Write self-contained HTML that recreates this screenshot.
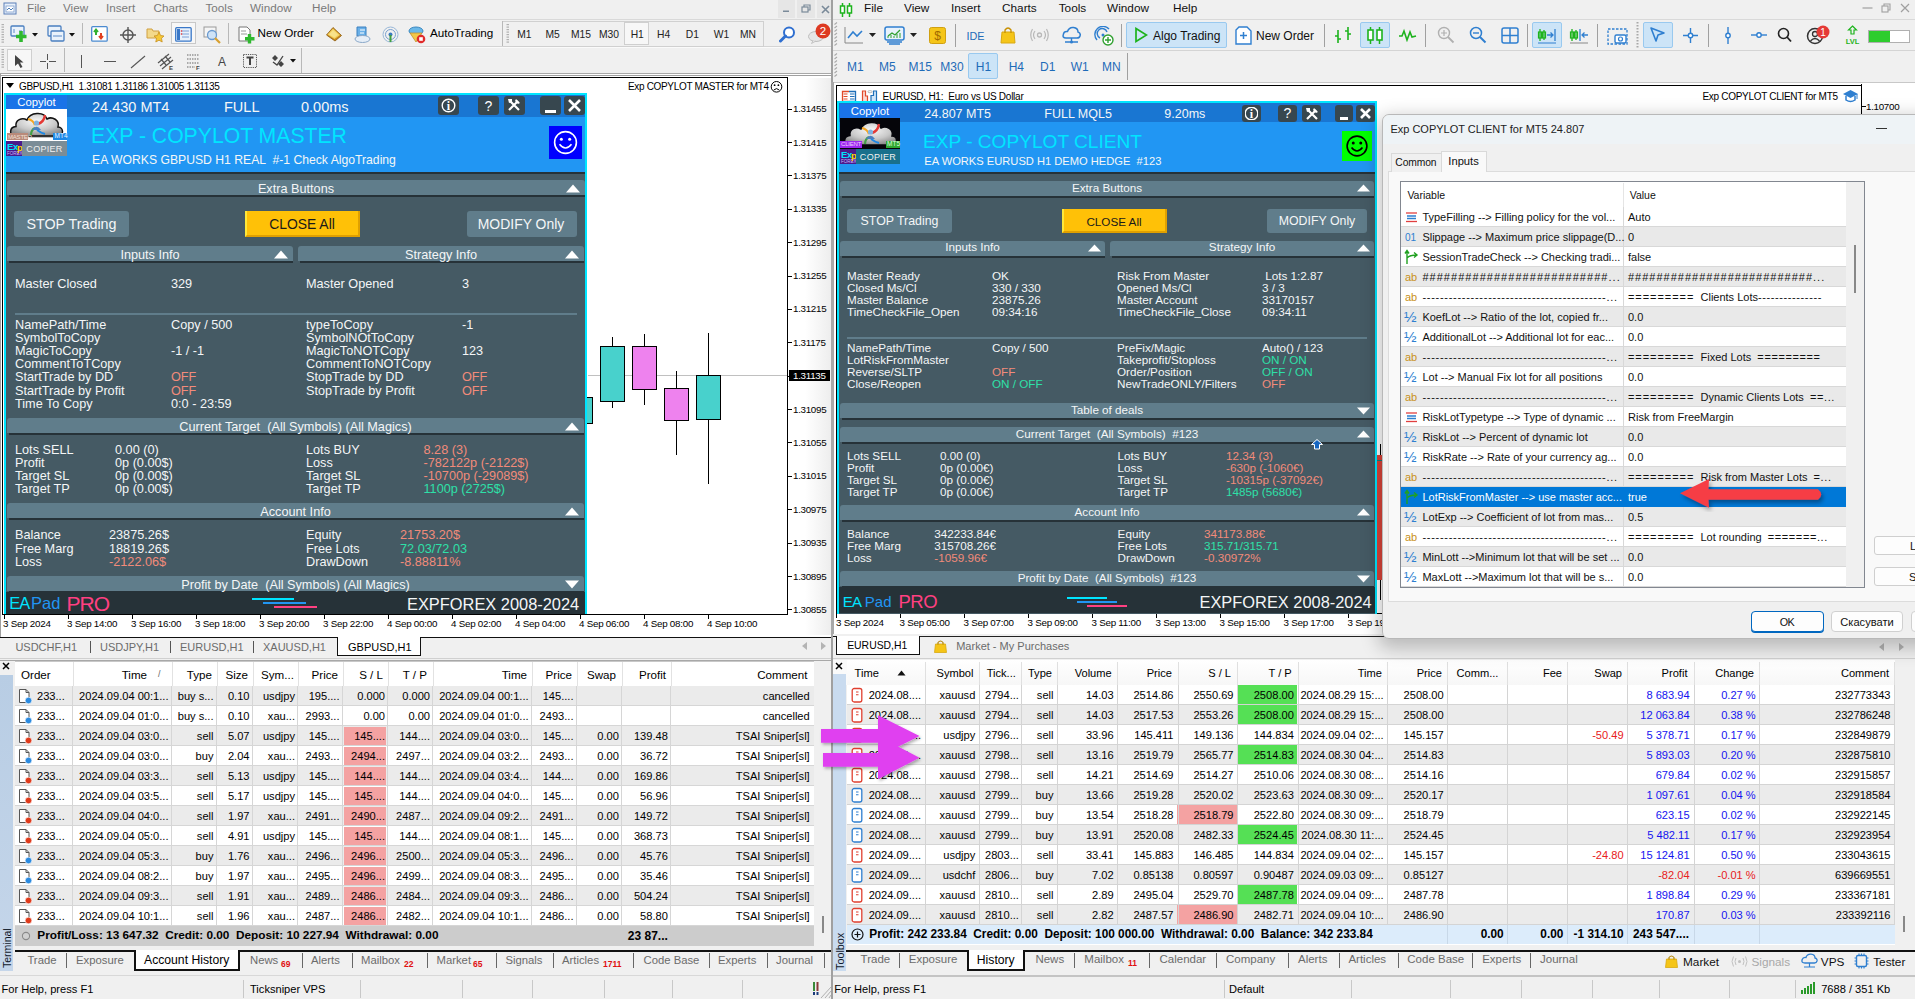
<!DOCTYPE html><html><head><meta charset="utf-8"><style>
html,body{margin:0;padding:0;overflow:hidden}
body{width:1915px;height:999px;position:relative;overflow:hidden;background:#f0f0f0;font-family:"Liberation Sans",sans-serif}
.a{position:absolute;margin:0;padding:0;box-sizing:border-box}
.t{position:absolute;white-space:pre;margin:0;padding:0}
</style></head><body>
<div class="a" style="left:0px;top:0px;width:831px;height:19px;background:#f0f0f0"></div>
<div class="a" style="left:0px;top:19px;width:831px;height:1px;background:#d9d9d9"></div>
<svg class="a" style="left:3px;top:2px;" width="15" height="14" viewBox="0 0 15 14"><rect x="1" y="1" width="12" height="11" fill="#e8f0fa" stroke="#5a7fb8" stroke-width="1"/><rect x="3" y="4" width="8" height="6" fill="#fff" stroke="#7a9ccc" stroke-width="0.8"/><path d="M4 8 L6 6 L8 8 L10 6" stroke="#3a6fb0" fill="none" stroke-width="0.9"/></svg>
<div class="t" style="left:27px;top:0.3px;font-size:11.7px;line-height:15px;color:#7a7a7a;">File</div>
<div class="t" style="left:63px;top:0.3px;font-size:11.7px;line-height:15px;color:#7a7a7a;">View</div>
<div class="t" style="left:106px;top:0.3px;font-size:11.7px;line-height:15px;color:#7a7a7a;">Insert</div>
<div class="t" style="left:153.5px;top:0.3px;font-size:11.7px;line-height:15px;color:#7a7a7a;">Charts</div>
<div class="t" style="left:205.5px;top:0.3px;font-size:11.7px;line-height:15px;color:#7a7a7a;">Tools</div>
<div class="t" style="left:250px;top:0.3px;font-size:11.7px;line-height:15px;color:#7a7a7a;">Window</div>
<div class="t" style="left:312px;top:0.3px;font-size:11.7px;line-height:15px;color:#7a7a7a;">Help</div>
<div class="a" style="left:778px;top:0px;width:17px;height:18px;background:#e6e6e6"></div>
<div class="a" style="left:797px;top:0px;width:18px;height:18px;background:#e6e6e6"></div>
<div class="a" style="left:817px;top:0px;width:14px;height:18px;background:#e6e6e6"></div>
<svg class="a" style="left:782px;top:10px;" width="10" height="3" viewBox="0 0 10 3"><rect x="1" y="0.5" width="6" height="1.5" fill="#7a8a99"/></svg>
<svg class="a" style="left:801px;top:4px;" width="10" height="9" viewBox="0 0 10 9"><rect x="1" y="3" width="6" height="5" fill="none" stroke="#7a8a99" stroke-width="1.2"/><path d="M3 3 V1 H9 V6 H7" fill="none" stroke="#7a8a99" stroke-width="1.2"/></svg>
<svg class="a" style="left:821px;top:5px;" width="9" height="9" viewBox="0 0 9 9"><path d="M1 1 L8 8 M8 1 L1 8" stroke="#7a8a99" stroke-width="1.6"/></svg>
<div class="a" style="left:0px;top:20px;width:831px;height:54px;background:#f0f0f0"></div>
<div class="a" style="left:0px;top:46px;width:831px;height:1px;background:#d4d4d4"></div>
<div class="a" style="left:0px;top:47px;width:831px;height:1px;background:#fafafa"></div>
<div class="a" style="left:0px;top:73px;width:831px;height:2px;background:#a8a8a8"></div>
<svg class="a" style="left:1px;top:24px;" width="4" height="20" viewBox="0 0 4 20"><rect x="0.5" y="0.0" width="2.5" height="1.2" fill="#b0b0b0"/><rect x="0.5" y="2.5" width="2.5" height="1.2" fill="#b0b0b0"/><rect x="0.5" y="5.0" width="2.5" height="1.2" fill="#b0b0b0"/><rect x="0.5" y="7.5" width="2.5" height="1.2" fill="#b0b0b0"/><rect x="0.5" y="10.0" width="2.5" height="1.2" fill="#b0b0b0"/><rect x="0.5" y="12.5" width="2.5" height="1.2" fill="#b0b0b0"/><rect x="0.5" y="15.0" width="2.5" height="1.2" fill="#b0b0b0"/><rect x="0.5" y="17.5" width="2.5" height="1.2" fill="#b0b0b0"/></svg>
<svg class="a" style="left:1px;top:49px;" width="4" height="20" viewBox="0 0 4 20"><rect x="0.5" y="0.0" width="2.5" height="1.2" fill="#b0b0b0"/><rect x="0.5" y="2.5" width="2.5" height="1.2" fill="#b0b0b0"/><rect x="0.5" y="5.0" width="2.5" height="1.2" fill="#b0b0b0"/><rect x="0.5" y="7.5" width="2.5" height="1.2" fill="#b0b0b0"/><rect x="0.5" y="10.0" width="2.5" height="1.2" fill="#b0b0b0"/><rect x="0.5" y="12.5" width="2.5" height="1.2" fill="#b0b0b0"/><rect x="0.5" y="15.0" width="2.5" height="1.2" fill="#b0b0b0"/><rect x="0.5" y="17.5" width="2.5" height="1.2" fill="#b0b0b0"/></svg>
<svg class="a" style="left:10px;top:25px;" width="19" height="18" viewBox="0 0 19 18"><rect x="1" y="1" width="13" height="10" fill="#eaf2fb" stroke="#4a7fc0" stroke-width="1.3" rx="1"/><path d="M4 4 V8 M9 6 H12" stroke="#5a8ac8" stroke-width="1"/><path d="M11 6 V17 M6 11.5 H16.5" stroke="#2fb82f" stroke-width="3.6"/></svg>
<svg class="a" style="left:32px;top:33px;" width="6" height="4" viewBox="0 0 6 4"><path d="M0 0 H6 L3 3.5 Z" fill="#111"/></svg>
<svg class="a" style="left:47px;top:25px;" width="18" height="18" viewBox="0 0 18 18"><rect x="1" y="1" width="13" height="10" fill="#eaf2fb" stroke="#4a7fc0" stroke-width="1.3" rx="1"/><rect x="4" y="6" width="13" height="10" fill="#eaf2fb" stroke="#4a7fc0" stroke-width="1.3" rx="1"/><path d="M6 11 H15" stroke="#5a8ac8" stroke-width="1"/></svg>
<svg class="a" style="left:69px;top:33px;" width="6" height="4" viewBox="0 0 6 4"><path d="M0 0 H6 L3 3.5 Z" fill="#111"/></svg>
<div class="a" style="left:82px;top:23px;width:1px;height:21px;background:#b8b8b8"></div>
<svg class="a" style="left:91px;top:26px;" width="17" height="16" viewBox="0 0 17 16"><rect x="0.7" y="0.7" width="15.5" height="14.5" fill="#fff" stroke="#4a8ad0" stroke-width="1.3" rx="1"/><path d="M5 9 V4 M3 6 L5 3.5 L7 6" stroke="#30b030" stroke-width="2" fill="none"/><path d="M10 7 V12 M8 10 L10 12.5 L12 10" stroke="#e04020" stroke-width="2" fill="none"/></svg>
<svg class="a" style="left:120px;top:27px;" width="16" height="16" viewBox="0 0 16 16"><circle cx="8" cy="8" r="5" fill="none" stroke="#555" stroke-width="1.4"/><path d="M8 0 V16 M0 8 H16" stroke="#555" stroke-width="1.4"/></svg>
<svg class="a" style="left:146px;top:26px;" width="19" height="17" viewBox="0 0 19 17"><path d="M1 3 H6 L7 5 H13 V12 H1 Z" fill="#f3d98a" stroke="#d0a040" stroke-width="1"/><path d="M13 6 L14.6 9.5 L18 10 L15.5 12.3 L16.2 16 L13 14.2 L9.8 16 L10.5 12.3 L8 10 L11.4 9.5 Z" fill="#f5c838" stroke="#c89020" stroke-width="0.8"/></svg>
<div class="a" style="left:171px;top:22px;width:25px;height:22px;background:#f7f7f7;border:1px solid #c8c8c8"></div>
<svg class="a" style="left:175px;top:27px;" width="17" height="15" viewBox="0 0 17 15"><rect x="0.7" y="0.7" width="15.5" height="13.5" fill="#e8f1fb" stroke="#3a78c8" stroke-width="1.3" rx="1"/><rect x="2" y="2" width="3" height="11" fill="#3a78c8"/><path d="M7 4 H14 M7 7 H14 M7 10 H14" stroke="#7aa0d8" stroke-width="1"/><circle cx="6.5" cy="4" r="0.8" fill="#e02020"/><circle cx="6.5" cy="7" r="0.8" fill="#e02020"/></svg>
<svg class="a" style="left:203px;top:26px;" width="19" height="18" viewBox="0 0 19 18"><rect x="1" y="1" width="12" height="10" fill="#f5f5f5" stroke="#999" stroke-width="1"/><circle cx="9" cy="9" r="4.5" fill="#cfe3f7" stroke="#6a9ad0" stroke-width="1.3"/><path d="M12 12 L17 17" stroke="#d8a030" stroke-width="2.2"/></svg>
<div class="a" style="left:228px;top:23px;width:1px;height:21px;background:#b8b8b8"></div>
<svg class="a" style="left:238px;top:26px;" width="17" height="18" viewBox="0 0 17 18"><path d="M1 1 H9 L12 4 V15 H1 Z" fill="#fff" stroke="#777" stroke-width="1"/><path d="M3 5 H8 M3 8 H9" stroke="#999" stroke-width="1"/><path d="M11.5 8 V17.5 M7 12.7 H16.5" stroke="#2fb82f" stroke-width="3.4"/></svg>
<div class="t" style="left:257.5px;top:25.1px;font-size:11.7px;line-height:15px;color:#000;">New Order</div>
<svg class="a" style="left:325px;top:26px;" width="18" height="16" viewBox="0 0 18 16"><path d="M1.5 9 L8 1.5 L16.5 9.5 L10 15 Z" fill="#c98a1a" stroke="#8a5a10" stroke-width="0.8"/><path d="M2.5 8.5 L8 2.5 L15 9 L9.5 13 Z" fill="#f3d060"/><path d="M4 8.5 L8 4 L13 8.8 L9.5 11.5 Z" fill="#f8e28a"/></svg>
<svg class="a" style="left:354px;top:26px;" width="17" height="17" viewBox="0 0 17 17"><path d="M3 1 H12 V10 H3 Z" fill="#6ab0e8" stroke="#3a80c0" stroke-width="1"/><path d="M6 4 H11 M6 7 H10" stroke="#fff" stroke-width="1"/><ellipse cx="8.5" cy="13" rx="7.5" ry="3.5" fill="#e6eef7" stroke="#8aa8c8" stroke-width="1"/></svg>
<svg class="a" style="left:382px;top:26px;" width="17" height="17" viewBox="0 0 17 17"><circle cx="8.5" cy="8.5" r="7.5" fill="none" stroke="#9ab8d8" stroke-width="1"/><circle cx="8.5" cy="8.5" r="5" fill="none" stroke="#7aa0d0" stroke-width="1"/><circle cx="8.5" cy="8.5" r="2" fill="#3a7ac0"/><path d="M8.5 9 V16" stroke="#40a040" stroke-width="2"/></svg>
<svg class="a" style="left:408px;top:26px;" width="18" height="18" viewBox="0 0 18 18"><ellipse cx="8" cy="5" rx="7" ry="4" fill="#6ab8e8" stroke="#3a88c0" stroke-width="1"/><path d="M2 7 L8 16 L14 7 Z" fill="#f3c848" stroke="#c09030" stroke-width="0.8"/><circle cx="13" cy="13" r="4.3" fill="#e02a2a"/><rect x="11.2" y="11.2" width="3.6" height="3.6" fill="#fff"/></svg>
<div class="t" style="left:430px;top:25.1px;font-size:11.7px;line-height:15px;color:#000;">AutoTrading</div>
<div class="a" style="left:502px;top:21px;width:1px;height:25px;background:#b8b8b8"></div>
<div class="a" style="left:503px;top:21px;width:261px;height:26px;border:1px solid #d0d0d0;border-left:none;background:#f0f0f0"></div>
<svg class="a" style="left:506px;top:24px;" width="4" height="20" viewBox="0 0 4 20"><rect x="0.5" y="0.0" width="2.5" height="1.2" fill="#b0b0b0"/><rect x="0.5" y="2.5" width="2.5" height="1.2" fill="#b0b0b0"/><rect x="0.5" y="5.0" width="2.5" height="1.2" fill="#b0b0b0"/><rect x="0.5" y="7.5" width="2.5" height="1.2" fill="#b0b0b0"/><rect x="0.5" y="10.0" width="2.5" height="1.2" fill="#b0b0b0"/><rect x="0.5" y="12.5" width="2.5" height="1.2" fill="#b0b0b0"/><rect x="0.5" y="15.0" width="2.5" height="1.2" fill="#b0b0b0"/><rect x="0.5" y="17.5" width="2.5" height="1.2" fill="#b0b0b0"/></svg>
<div class="a" style="left:624px;top:22px;width:25px;height:23px;background:#f7f7f7;border:1px solid #cfcfcf"></div>
<div class="t" style="left:517.3px;top:28.0px;font-size:10.3px;line-height:13px;color:#222;">M1</div>
<div class="t" style="left:545.4px;top:28.0px;font-size:10.3px;line-height:13px;color:#222;">M5</div>
<div class="t" style="left:571px;top:28.0px;font-size:10.3px;line-height:13px;color:#222;">M15</div>
<div class="t" style="left:599px;top:28.0px;font-size:10.3px;line-height:13px;color:#222;">M30</div>
<div class="t" style="left:630.7px;top:28.0px;font-size:10.3px;line-height:13px;color:#222;">H1</div>
<div class="t" style="left:657px;top:28.0px;font-size:10.3px;line-height:13px;color:#222;">H4</div>
<div class="t" style="left:685.8px;top:28.0px;font-size:10.3px;line-height:13px;color:#222;">D1</div>
<div class="t" style="left:713.8px;top:28.0px;font-size:10.3px;line-height:13px;color:#222;">W1</div>
<div class="t" style="left:740px;top:28.0px;font-size:10.3px;line-height:13px;color:#222;">MN</div>
<svg class="a" style="left:779px;top:26px;" width="17" height="17" viewBox="0 0 17 17"><circle cx="10" cy="6.5" r="5" fill="#fff" stroke="#2f6fd0" stroke-width="2"/><path d="M6.5 10 L1.5 15" stroke="#2f6fd0" stroke-width="3" stroke-linecap="round"/></svg>
<svg class="a" style="left:805px;top:22px;" width="26" height="22" viewBox="0 0 26 22"><ellipse cx="11" cy="14.5" rx="7.5" ry="5" fill="#e6e6e6" stroke="#bdbdbd"/><path d="M8 18.5 L6.5 21.5 L11 19" fill="#e6e6e6" stroke="#bdbdbd" stroke-width="0.8"/><circle cx="18" cy="9" r="7.5" fill="#dd3a22"/><text x="18" y="13.2" font-size="11.5" fill="#fff" text-anchor="middle" font-family="Liberation Sans">2</text></svg>
<div class="a" style="left:7px;top:49px;width:25px;height:22px;background:#f7f7f7;border:1px solid #cfcfcf"></div>
<svg class="a" style="left:14px;top:54px;" width="10" height="15" viewBox="0 0 10 15"><path d="M1 1 L1 12 L4 9.5 L6.5 14 L8.5 13 L6 8.5 L9.5 8.5 Z" fill="#444"/></svg>
<svg class="a" style="left:40px;top:54px;" width="16" height="15" viewBox="0 0 16 15"><path d="M7.5 0 V6 M7.5 9 V15 M0 7.5 H6 M9 7.5 H16" stroke="#555" stroke-width="1"/></svg>
<div class="a" style="left:64px;top:48px;width:1px;height:24px;background:#b8b8b8"></div>
<div class="a" style="left:81px;top:55px;width:1px;height:13px;background:#555"></div>
<div class="a" style="left:104px;top:61px;width:12px;height:1px;background:#555"></div>
<svg class="a" style="left:130px;top:55px;" width="16" height="14" viewBox="0 0 16 14"><path d="M1 13 L15 1" stroke="#555" stroke-width="1.1"/></svg>
<svg class="a" style="left:157px;top:53px;" width="18" height="17" viewBox="0 0 18 17"><path d="M1 10 L12 1 M3 13 L14 4 M5 16 L16 7 M4 6 L9 12 M8 3 L13 9" stroke="#555" stroke-width="1.2"/><text x="12" y="17" font-size="6" font-weight="bold" fill="#444" font-family="Liberation Sans">E</text></svg>
<svg class="a" style="left:186px;top:53px;" width="16" height="17" viewBox="0 0 16 17"><path d="M1 2 H13 M1 6 H13 M1 10 H13 M1 14 H9" stroke="#666" stroke-width="1" stroke-dasharray="1.5 1"/><text x="10" y="17" font-size="6" font-weight="bold" fill="#444" font-family="Liberation Sans">F</text></svg>
<div class="t" style="left:218px;top:53.5px;font-size:12px;line-height:16px;color:#444;">A</div>
<svg class="a" style="left:243px;top:54px;" width="14" height="14" viewBox="0 0 14 14"><rect x="0.5" y="0.5" width="13" height="13" fill="none" stroke="#555" stroke-width="1" stroke-dasharray="1.2 1"/><path d="M3.5 3.5 H10.5 M7 3.5 V11" stroke="#444" stroke-width="2"/></svg>
<svg class="a" style="left:270px;top:54px;" width="16" height="14" viewBox="0 0 16 14"><path d="M2 4 L5 1 L8 4 L5 7 Z M8 10 L11 7 L14 10 L11 13 Z" fill="#444"/><path d="M3 8 L7 11 L13 2" stroke="#444" stroke-width="1.3" fill="none"/></svg>
<svg class="a" style="left:290px;top:59px;" width="6" height="4" viewBox="0 0 6 4"><path d="M0 0 H6 L3 3.5 Z" fill="#111"/></svg>
<div class="a" style="left:301px;top:48px;width:1px;height:25px;background:#b8b8b8"></div>
<div class="a" style="left:0px;top:74px;width:831px;height:563px;background:#fff"></div>
<div class="a" style="left:0px;top:74px;width:1px;height:563px;background:#a0a0a0"></div>
<div class="a" style="left:1px;top:75px;width:830px;height:1px;background:#a0a0a0"></div>
<div class="a" style="left:2px;top:77px;width:786px;height:1px;background:#000"></div>
<div class="a" style="left:2px;top:77px;width:1px;height:538px;background:#000"></div>
<div class="a" style="left:787px;top:77px;width:1px;height:538px;background:#000"></div>
<div class="a" style="left:2px;top:614px;width:786px;height:1px;background:#000"></div>
<div class="a" style="left:805px;top:78px;width:26px;height:557px;background:linear-gradient(to right,rgba(240,240,240,0),rgba(230,230,230,0.7))"></div>
<div class="a" style="left:831px;top:0px;width:1.5px;height:999px;background:#a0a0a0"></div>
<svg class="a" style="left:6px;top:83px;" width="8" height="6" viewBox="0 0 8 6"><path d="M0 0 H8 L4 5 Z" fill="#000"/></svg>
<div class="t" style="left:19px;top:79.5px;font-size:10px;line-height:13px;color:#000;letter-spacing:-0.34px">GBPUSD,H1  1.31081 1.31186 1.31005 1.31135</div>
<div class="t" style="left:628px;top:80.0px;font-size:10px;line-height:13px;color:#000;letter-spacing:-0.33px">Exp COPYLOT MASTER for MT4</div>
<svg class="a" style="left:770px;top:80px;" width="13" height="13" viewBox="0 0 13 13"><circle cx="6.5" cy="6.8" r="5.3" fill="none" stroke="#000" stroke-width="1"/><circle cx="4.6" cy="5.2" r="0.9" fill="#000"/><circle cx="8.4" cy="5.2" r="0.9" fill="#000"/><path d="M3.8 10 Q6.5 7.2 9.2 10" fill="none" stroke="#000" stroke-width="1"/></svg>
<div class="a" style="left:588px;top:375px;width:199px;height:1px;background:#c0c0c0"></div>
<div class="a" style="left:612px;top:337px;width:1px;height:71px;background:#000"></div>
<div class="a" style="left:600px;top:346px;width:25px;height:56px;background:#48d1cc;border:1px solid #000"></div>
<div class="a" style="left:644px;top:334px;width:1px;height:71px;background:#000"></div>
<div class="a" style="left:632px;top:346px;width:25px;height:44px;background:#ee82ee;border:1px solid #000"></div>
<div class="a" style="left:676px;top:371px;width:1px;height:84px;background:#000"></div>
<div class="a" style="left:664px;top:388px;width:25px;height:33px;background:#ee82ee;border:1px solid #000"></div>
<div class="a" style="left:708px;top:333px;width:1px;height:151px;background:#000"></div>
<div class="a" style="left:696px;top:375px;width:25px;height:45px;background:#48d1cc;border:1px solid #000"></div>
<div class="a" style="left:586px;top:397px;width:7px;height:27px;background:#48d1cc;border:1px solid #000;border-left:none"></div>
<div class="a" style="left:788px;top:109px;width:4px;height:1px;background:#000"></div>
<div class="t" style="left:793px;top:102.1px;font-size:9.8px;line-height:13px;color:#000;letter-spacing:-0.3px">1.31455</div>
<div class="a" style="left:788px;top:142px;width:4px;height:1px;background:#000"></div>
<div class="t" style="left:793px;top:135.5px;font-size:9.8px;line-height:13px;color:#000;letter-spacing:-0.3px">1.31415</div>
<div class="a" style="left:788px;top:175px;width:4px;height:1px;background:#000"></div>
<div class="t" style="left:793px;top:168.9px;font-size:9.8px;line-height:13px;color:#000;letter-spacing:-0.3px">1.31375</div>
<div class="a" style="left:788px;top:209px;width:4px;height:1px;background:#000"></div>
<div class="t" style="left:793px;top:202.3px;font-size:9.8px;line-height:13px;color:#000;letter-spacing:-0.3px">1.31335</div>
<div class="a" style="left:788px;top:242px;width:4px;height:1px;background:#000"></div>
<div class="t" style="left:793px;top:235.7px;font-size:9.8px;line-height:13px;color:#000;letter-spacing:-0.3px">1.31295</div>
<div class="a" style="left:788px;top:276px;width:4px;height:1px;background:#000"></div>
<div class="t" style="left:793px;top:269.0px;font-size:9.8px;line-height:13px;color:#000;letter-spacing:-0.3px">1.31255</div>
<div class="a" style="left:788px;top:309px;width:4px;height:1px;background:#000"></div>
<div class="t" style="left:793px;top:302.4px;font-size:9.8px;line-height:13px;color:#000;letter-spacing:-0.3px">1.31215</div>
<div class="a" style="left:788px;top:342px;width:4px;height:1px;background:#000"></div>
<div class="t" style="left:793px;top:335.8px;font-size:9.8px;line-height:13px;color:#000;letter-spacing:-0.3px">1.31175</div>
<div class="a" style="left:788px;top:376px;width:4px;height:1px;background:#000"></div>
<div class="a" style="left:789px;top:370px;width:41px;height:11px;background:#000"></div>
<div class="t" style="left:793px;top:369.0px;font-size:9.8px;line-height:13px;color:#fff;letter-spacing:-0.3px">1.31135</div>
<div class="a" style="left:788px;top:409px;width:4px;height:1px;background:#000"></div>
<div class="t" style="left:793px;top:402.6px;font-size:9.8px;line-height:13px;color:#000;letter-spacing:-0.3px">1.31095</div>
<div class="a" style="left:788px;top:442px;width:4px;height:1px;background:#000"></div>
<div class="t" style="left:793px;top:436.0px;font-size:9.8px;line-height:13px;color:#000;letter-spacing:-0.3px">1.31055</div>
<div class="a" style="left:788px;top:476px;width:4px;height:1px;background:#000"></div>
<div class="t" style="left:793px;top:469.4px;font-size:9.8px;line-height:13px;color:#000;letter-spacing:-0.3px">1.31015</div>
<div class="a" style="left:788px;top:509px;width:4px;height:1px;background:#000"></div>
<div class="t" style="left:793px;top:502.8px;font-size:9.8px;line-height:13px;color:#000;letter-spacing:-0.3px">1.30975</div>
<div class="a" style="left:788px;top:543px;width:4px;height:1px;background:#000"></div>
<div class="t" style="left:793px;top:536.2px;font-size:9.8px;line-height:13px;color:#000;letter-spacing:-0.3px">1.30935</div>
<div class="a" style="left:788px;top:576px;width:4px;height:1px;background:#000"></div>
<div class="t" style="left:793px;top:569.6px;font-size:9.8px;line-height:13px;color:#000;letter-spacing:-0.3px">1.30895</div>
<div class="a" style="left:788px;top:609px;width:4px;height:1px;background:#000"></div>
<div class="t" style="left:793px;top:603.0px;font-size:9.8px;line-height:13px;color:#000;letter-spacing:-0.3px">1.30855</div>
<div class="t" style="left:3px;top:617.0px;font-size:9.8px;line-height:13px;color:#000;letter-spacing:-0.25px">3 Sep 2024</div>
<div class="a" style="left:68px;top:614px;width:1px;height:5px;background:#000"></div>
<div class="t" style="left:67px;top:617.0px;font-size:9.8px;line-height:13px;color:#000;letter-spacing:-0.25px">3 Sep 14:00</div>
<div class="a" style="left:132px;top:614px;width:1px;height:5px;background:#000"></div>
<div class="t" style="left:131px;top:617.0px;font-size:9.8px;line-height:13px;color:#000;letter-spacing:-0.25px">3 Sep 16:00</div>
<div class="a" style="left:196px;top:614px;width:1px;height:5px;background:#000"></div>
<div class="t" style="left:195px;top:617.0px;font-size:9.8px;line-height:13px;color:#000;letter-spacing:-0.25px">3 Sep 18:00</div>
<div class="a" style="left:260px;top:614px;width:1px;height:5px;background:#000"></div>
<div class="t" style="left:259px;top:617.0px;font-size:9.8px;line-height:13px;color:#000;letter-spacing:-0.25px">3 Sep 20:00</div>
<div class="a" style="left:324px;top:614px;width:1px;height:5px;background:#000"></div>
<div class="t" style="left:323px;top:617.0px;font-size:9.8px;line-height:13px;color:#000;letter-spacing:-0.25px">3 Sep 22:00</div>
<div class="a" style="left:388px;top:614px;width:1px;height:5px;background:#000"></div>
<div class="t" style="left:387px;top:617.0px;font-size:9.8px;line-height:13px;color:#000;letter-spacing:-0.25px">4 Sep 00:00</div>
<div class="a" style="left:452px;top:614px;width:1px;height:5px;background:#000"></div>
<div class="t" style="left:451px;top:617.0px;font-size:9.8px;line-height:13px;color:#000;letter-spacing:-0.25px">4 Sep 02:00</div>
<div class="a" style="left:516px;top:614px;width:1px;height:5px;background:#000"></div>
<div class="t" style="left:515px;top:617.0px;font-size:9.8px;line-height:13px;color:#000;letter-spacing:-0.25px">4 Sep 04:00</div>
<div class="a" style="left:580px;top:614px;width:1px;height:5px;background:#000"></div>
<div class="t" style="left:579px;top:617.0px;font-size:9.8px;line-height:13px;color:#000;letter-spacing:-0.25px">4 Sep 06:00</div>
<div class="a" style="left:644px;top:614px;width:1px;height:5px;background:#000"></div>
<div class="t" style="left:643px;top:617.0px;font-size:9.8px;line-height:13px;color:#000;letter-spacing:-0.25px">4 Sep 08:00</div>
<div class="a" style="left:708px;top:614px;width:1px;height:5px;background:#000"></div>
<div class="t" style="left:707px;top:617.0px;font-size:9.8px;line-height:13px;color:#000;letter-spacing:-0.25px">4 Sep 10:00</div>
<div class="a" style="left:4px;top:614px;width:1px;height:5px;background:#000"></div>
<div class="a" style="left:0px;top:637px;width:831px;height:21px;background:#f0f0f0"></div>
<div class="a" style="left:0px;top:637px;width:337px;height:1px;background:#111"></div>
<div class="a" style="left:421px;top:637px;width:410px;height:1px;background:#111"></div>
<div class="a" style="left:337px;top:637px;width:84px;height:19px;background:#fff;border:1px solid #111;border-top:none"></div>
<div class="t" style="left:15.4px;top:639.5px;font-size:11px;line-height:14px;color:#6b6b6b;">USDCHF,H1</div>
<div class="t" style="left:100px;top:639.5px;font-size:11px;line-height:14px;color:#6b6b6b;">USDJPY,H1</div>
<div class="t" style="left:180px;top:639.5px;font-size:11px;line-height:14px;color:#6b6b6b;">EURUSD,H1</div>
<div class="t" style="left:263px;top:639.5px;font-size:11px;line-height:14px;color:#6b6b6b;">XAUUSD,H1</div>
<div class="a" style="left:90px;top:641px;width:1px;height:12px;background:#555"></div>
<div class="a" style="left:169.5px;top:641px;width:1px;height:12px;background:#555"></div>
<div class="a" style="left:253px;top:641px;width:1px;height:12px;background:#555"></div>
<div class="t" style="left:348px;top:639.5px;font-size:11px;line-height:14px;color:#000;">GBPUSD,H1</div>
<svg class="a" style="left:802px;top:642px;" width="5" height="8" viewBox="0 0 5 8"><path d="M5 0 V8 L0 4 Z" fill="#b4b4b4"/></svg>
<svg class="a" style="left:821px;top:642px;" width="5" height="8" viewBox="0 0 5 8"><path d="M0 0 V8 L5 4 Z" fill="#b4b4b4"/></svg>
<div class="a" style="left:0px;top:658px;width:831px;height:1px;background:#d0d0d0"></div>
<div class="a" style="left:4px;top:93px;width:583px;height:521px;background:#00e5ff"></div>
<div class="a" style="left:6px;top:95px;width:579px;height:519px;background:#455a64"></div>
<div class="a" style="left:6px;top:95px;width:579px;height:22px;background:#1976d2"></div>
<div class="a" style="left:6px;top:117px;width:579px;height:55px;background:#2196f3"></div>
<div class="a" style="left:6px;top:172px;width:579px;height:2px;background:#263238"></div>
<div class="a" style="left:6px;top:95px;width:61px;height:14px;background:#1a73e8"></div>
<div class="t" style="left:-363.5px;width:800px;top:95.0px;font-size:11.3px;line-height:15px;color:#fff;text-align:center;">Copylot</div>
<div class="a" style="left:6px;top:109px;width:61px;height:32px;background:#fff"></div>
<svg class="a" style="left:6px;top:109px;" width="61" height="32" viewBox="0 0 61 32"><defs><radialGradient id="cgm" cx="50%" cy="35%" r="65%"><stop offset="0" stop-color="#fafafa"/><stop offset="0.6" stop-color="#c8c8c8"/><stop offset="1" stop-color="#8c8c8c"/></radialGradient></defs><path d="M9 27 C3 27 3 18 10 17.5 C9 11 16 8 21 11 C24 3 38 2 41 10 C46 7 54 11 52 18 C58 18 58 27 52 27 Z" fill="url(#cgm)" stroke="#111" stroke-width="1.5"/><path d="M22 10 Q27 11 29 16" fill="none" stroke="#f5a623" stroke-width="2.2"/><path d="M39 6 Q38 13 32 15" fill="none" stroke="#e53935" stroke-width="2.4"/><path d="M25 26 Q25 21 29 19" fill="none" stroke="#43a047" stroke-width="2.2"/><path d="M31 21 Q35 24 39 25" fill="none" stroke="#1e88e5" stroke-width="2"/><circle cx="30.5" cy="14" r="2.6" fill="#7fb2e0"/><path d="M26 21 Q30.5 14.5 35 21 Z" fill="#4a7fc0"/><path d="M23 27.5 H47" stroke="#333" stroke-width="1.6"/></svg>
<div class="a" style="left:7px;top:133px;width:21px;height:7px;background:#b98a7a"></div>
<div class="t" style="left:8px;top:132.7px;font-size:6px;line-height:8px;color:#f0e0d8;letter-spacing:-0.2px">MASTER</div>
<div class="a" style="left:53px;top:132.5px;width:14px;height:7.5px;background:#1e88e5"></div>
<div class="t" style="left:54.5px;top:132.3px;font-size:6.5px;line-height:8px;color:#e8f4ff;">MT4</div>
<div class="a" style="left:6px;top:141px;width:16px;height:15px;background:#4b1a8a"></div>
<div class="t" style="left:7px;top:141.0px;font-size:9.5px;line-height:12px;color:#00e5ff;font-weight:bold;letter-spacing:-0.3px">Ex</div>
<div class="t" style="left:17px;top:141.5px;font-size:9.5px;line-height:12px;color:#ffd600;font-weight:bold">p</div>
<div class="t" style="left:7px;top:150.5px;font-size:4.5px;line-height:6px;color:#c8b8ff;">FOREX</div>
<div class="a" style="left:22px;top:141px;width:45px;height:15px;background:#7b8d97"></div>
<div class="t" style="left:-355.5px;width:800px;top:142.8px;font-size:9px;line-height:12px;color:#f0f0f0;text-align:center;letter-spacing:0.3px">COPIER</div>
<div class="t" style="left:92px;top:97.5px;font-size:14.5px;line-height:19px;color:#f4f6f7;">24.430 MT4</div>
<div class="t" style="left:224px;top:97.5px;font-size:14.5px;line-height:19px;color:#f4f6f7;">FULL</div>
<div class="t" style="left:301px;top:97.5px;font-size:14.5px;line-height:19px;color:#f4f6f7;">0.00ms</div>
<div class="a" style="left:438px;top:96px;width:21px;height:19px;background:#37474f;border-radius:3px"></div>
<svg class="a" style="left:441px;top:98px;" width="15" height="15" viewBox="0 0 15 15"><circle cx="7.5" cy="7.5" r="6.3" fill="none" stroke="#fff" stroke-width="1.4"/><text x="7.5" y="12.0" font-size="12" font-weight="bold" fill="#fff" text-anchor="middle" font-family="Liberation Serif">i</text></svg>
<div class="a" style="left:478px;top:96px;width:21px;height:19px;background:#37474f;border-radius:3px"></div>
<div class="t" style="left:88.5px;width:800px;top:96.5px;font-size:14px;line-height:18px;color:#fff;text-align:center;">?</div>
<div class="a" style="left:504px;top:96px;width:21px;height:19px;background:#37474f;border-radius:3px"></div>
<svg class="a" style="left:507px;top:98px;" width="14" height="14" viewBox="0 0 14 14"><path d="M2 12 L11 3 M3 3 L12 12" stroke="#fff" stroke-width="2.2"/><path d="M9 1 L13 5 L11 6 L8 3 Z M1 1 L5 1 L5 4 L2 5 Z" fill="#fff"/></svg>
<div class="a" style="left:540px;top:96px;width:21px;height:19px;background:#37474f;border-radius:3px"></div>
<div class="a" style="left:545px;top:110px;width:11px;height:3px;background:#fff"></div>
<div class="a" style="left:564px;top:96px;width:21px;height:19px;background:#37474f;border-radius:3px"></div>
<svg class="a" style="left:567px;top:98px;" width="15" height="15" viewBox="0 0 15 15"><path d="M2 2 L13 13 M13 2 L2 13" stroke="#fff" stroke-width="2.6"/></svg>
<div class="a" style="left:549px;top:126px;width:33px;height:33px;background:#0000ff"></div>
<svg class="a" style="left:549px;top:126px;" width="33" height="33" viewBox="0 0 33 33"><circle cx="16.5" cy="16.5" r="10.89" fill="none" stroke="#fff" stroke-width="1.6"/><circle cx="12.361799999999999" cy="13.233" r="1.5" fill="#fff"/><circle cx="20.6382" cy="13.233" r="1.5" fill="#fff"/><path d="M10.5105 18.1335 Q16.5 25.756500000000003 22.4895 18.1335" fill="none" stroke="#fff" stroke-width="1.6"/></svg>
<div class="t" style="left:91px;top:121.5px;font-size:21.2px;line-height:28px;color:#00e5ff;">EXP - COPYLOT MASTER</div>
<div class="t" style="left:92px;top:151.5px;font-size:12.2px;line-height:16px;color:#f4f6f7;">EA WORKS GBPUSD H1 REAL  #-1 Check AlgoTrading</div>
<div class="a" style="left:7px;top:180px;width:578px;height:15px;background:#607d8b;border-radius:3px 3px 0 0"></div>
<div class="a" style="left:9px;top:195px;width:576px;height:2px;background:#263238"></div>
<div class="t" style="left:-104.0px;width:800px;top:181.0px;font-size:12.7px;line-height:17px;color:#f4f6f7;text-align:center;">Extra Buttons</div>
<svg class="a" style="left:566px;top:183.5px;" width="14" height="9" viewBox="0 0 14 9"><path d="M0 8.5 L7.0 0.5 L14 8.5 Z" fill="#fff"/></svg>
<div class="a" style="left:14px;top:211px;width:115px;height:26px;background:#607d8b;border-radius:3px"></div>
<div class="t" style="left:-328.5px;width:800px;top:214.5px;font-size:14.3px;line-height:19px;color:#f4f6f7;text-align:center;">STOP Trading</div>
<div class="a" style="left:245px;top:211px;width:115px;height:26px;background:#ffc107;border-bottom:2px solid #e0a000;border-right:2px solid #e0a000;border-left:2px solid #ffe83a"></div>
<div class="t" style="left:-98px;width:800px;top:215.0px;font-size:13.9px;line-height:18px;color:#1a1a1a;text-align:center;">CLOSE All</div>
<div class="a" style="left:467px;top:211px;width:110px;height:26px;background:#607d8b;border-radius:3px"></div>
<div class="t" style="left:121px;width:800px;top:215.0px;font-size:13.95px;line-height:18px;color:#f4f6f7;text-align:center;">MODIFY Only</div>
<div class="a" style="left:7px;top:246px;width:286px;height:15px;background:#607d8b;border-radius:3px 3px 0 0"></div>
<div class="a" style="left:9px;top:261px;width:284px;height:2px;background:#263238"></div>
<div class="t" style="left:-250.0px;width:800px;top:247.0px;font-size:12.7px;line-height:17px;color:#f4f6f7;text-align:center;">Inputs Info</div>
<svg class="a" style="left:274px;top:249.5px;" width="14" height="9" viewBox="0 0 14 9"><path d="M0 8.5 L7.0 0.5 L14 8.5 Z" fill="#fff"/></svg>
<div class="a" style="left:298px;top:246px;width:286px;height:15px;background:#607d8b;border-radius:3px 3px 0 0"></div>
<div class="a" style="left:300px;top:261px;width:284px;height:2px;background:#263238"></div>
<div class="t" style="left:41.0px;width:800px;top:247.0px;font-size:12.7px;line-height:17px;color:#f4f6f7;text-align:center;">Strategy Info</div>
<svg class="a" style="left:565px;top:249.5px;" width="14" height="9" viewBox="0 0 14 9"><path d="M0 8.5 L7.0 0.5 L14 8.5 Z" fill="#fff"/></svg>
<div class="t" style="left:15px;top:276.0px;font-size:12.7px;line-height:17px;color:#f4f6f7;">Master Closed</div>
<div class="t" style="left:171px;top:276.0px;font-size:12.7px;line-height:17px;color:#f4f6f7;">329</div>
<div class="t" style="left:306px;top:276.0px;font-size:12.7px;line-height:17px;color:#f4f6f7;">Master Opened</div>
<div class="t" style="left:462px;top:276.0px;font-size:12.7px;line-height:17px;color:#f4f6f7;">3</div>
<div class="a" style="left:15px;top:313px;width:562px;height:2px;background:#607d8b"></div>
<div class="t" style="left:15px;top:316.5px;font-size:12.7px;line-height:17px;color:#f4f6f7;">NamePath/Time</div>
<div class="t" style="left:171px;top:316.5px;font-size:12.7px;line-height:17px;color:#f4f6f7;">Copy / 500</div>
<div class="t" style="left:15px;top:329.7px;font-size:12.7px;line-height:17px;color:#f4f6f7;">SymbolToCopy</div>
<div class="t" style="left:171px;top:329.7px;font-size:12.7px;line-height:17px;color:#f4f6f7;"></div>
<div class="t" style="left:15px;top:342.9px;font-size:12.7px;line-height:17px;color:#f4f6f7;">MagicToCopy</div>
<div class="t" style="left:171px;top:342.9px;font-size:12.7px;line-height:17px;color:#f4f6f7;">-1 / -1</div>
<div class="t" style="left:15px;top:356.1px;font-size:12.7px;line-height:17px;color:#f4f6f7;">CommentToTCopy</div>
<div class="t" style="left:171px;top:356.1px;font-size:12.7px;line-height:17px;color:#f4f6f7;"></div>
<div class="t" style="left:15px;top:369.3px;font-size:12.7px;line-height:17px;color:#f4f6f7;">StartTrade by DD</div>
<div class="t" style="left:171px;top:369.3px;font-size:12.7px;line-height:17px;color:#f28b7a;">OFF</div>
<div class="t" style="left:15px;top:382.5px;font-size:12.7px;line-height:17px;color:#f4f6f7;">StartTrade by Profit</div>
<div class="t" style="left:171px;top:382.5px;font-size:12.7px;line-height:17px;color:#f28b7a;">OFF</div>
<div class="t" style="left:15px;top:395.7px;font-size:12.7px;line-height:17px;color:#f4f6f7;">Time To Copy</div>
<div class="t" style="left:171px;top:395.7px;font-size:12.7px;line-height:17px;color:#f4f6f7;">0:0 - 23:59</div>
<div class="t" style="left:306px;top:316.5px;font-size:12.7px;line-height:17px;color:#f4f6f7;">typeToCopy</div>
<div class="t" style="left:462px;top:316.5px;font-size:12.7px;line-height:17px;color:#f4f6f7;">-1</div>
<div class="t" style="left:306px;top:329.7px;font-size:12.7px;line-height:17px;color:#f4f6f7;">SymbolNOtToCopy</div>
<div class="t" style="left:462px;top:329.7px;font-size:12.7px;line-height:17px;color:#f4f6f7;"></div>
<div class="t" style="left:306px;top:342.9px;font-size:12.7px;line-height:17px;color:#f4f6f7;">MagicToNOTCopy</div>
<div class="t" style="left:462px;top:342.9px;font-size:12.7px;line-height:17px;color:#f4f6f7;">123</div>
<div class="t" style="left:306px;top:356.1px;font-size:12.7px;line-height:17px;color:#f4f6f7;">CommentToNOTCopy</div>
<div class="t" style="left:462px;top:356.1px;font-size:12.7px;line-height:17px;color:#f4f6f7;"></div>
<div class="t" style="left:306px;top:369.3px;font-size:12.7px;line-height:17px;color:#f4f6f7;">StopTrade by DD</div>
<div class="t" style="left:462px;top:369.3px;font-size:12.7px;line-height:17px;color:#f28b7a;">OFF</div>
<div class="t" style="left:306px;top:382.5px;font-size:12.7px;line-height:17px;color:#f4f6f7;">StopTrade by Profit</div>
<div class="t" style="left:462px;top:382.5px;font-size:12.7px;line-height:17px;color:#f28b7a;">OFF</div>
<div class="a" style="left:7px;top:418px;width:577px;height:15px;background:#607d8b;border-radius:3px 3px 0 0"></div>
<div class="a" style="left:9px;top:433px;width:575px;height:2px;background:#263238"></div>
<div class="t" style="left:-104.5px;width:800px;top:419.0px;font-size:12.7px;line-height:17px;color:#f4f6f7;text-align:center;">Current Target  (All Symbols) (All Magics)</div>
<svg class="a" style="left:565px;top:421.5px;" width="14" height="9" viewBox="0 0 14 9"><path d="M0 8.5 L7.0 0.5 L14 8.5 Z" fill="#fff"/></svg>
<div class="t" style="left:15px;top:441.5px;font-size:12.7px;line-height:17px;color:#f4f6f7;">Lots SELL</div>
<div class="t" style="left:115px;top:441.5px;font-size:12.7px;line-height:17px;color:#f4f6f7;">0.00 (0)</div>
<div class="t" style="left:306px;top:441.5px;font-size:12.7px;line-height:17px;color:#f4f6f7;">Lots BUY</div>
<div class="t" style="left:423.5px;top:441.5px;font-size:12.7px;line-height:17px;color:#f28b7a;">8.28 (3)</div>
<div class="t" style="left:15px;top:454.7px;font-size:12.7px;line-height:17px;color:#f4f6f7;">Profit</div>
<div class="t" style="left:115px;top:454.7px;font-size:12.7px;line-height:17px;color:#f4f6f7;">0p (0.00$)</div>
<div class="t" style="left:306px;top:454.7px;font-size:12.7px;line-height:17px;color:#f4f6f7;">Loss</div>
<div class="t" style="left:423.5px;top:454.7px;font-size:12.7px;line-height:17px;color:#f28b7a;">-782122p (-2122$)</div>
<div class="t" style="left:15px;top:467.9px;font-size:12.7px;line-height:17px;color:#f4f6f7;">Target SL</div>
<div class="t" style="left:115px;top:467.9px;font-size:12.7px;line-height:17px;color:#f4f6f7;">0p (0.00$)</div>
<div class="t" style="left:306px;top:467.9px;font-size:12.7px;line-height:17px;color:#f4f6f7;">Target SL</div>
<div class="t" style="left:423.5px;top:467.9px;font-size:12.7px;line-height:17px;color:#f28b7a;">-10700p (-29089$)</div>
<div class="t" style="left:15px;top:481.1px;font-size:12.7px;line-height:17px;color:#f4f6f7;">Target TP</div>
<div class="t" style="left:115px;top:481.1px;font-size:12.7px;line-height:17px;color:#f4f6f7;">0p (0.00$)</div>
<div class="t" style="left:306px;top:481.1px;font-size:12.7px;line-height:17px;color:#f4f6f7;">Target TP</div>
<div class="t" style="left:423.5px;top:481.1px;font-size:12.7px;line-height:17px;color:#2ee0a8;">1100p (2725$)</div>
<div class="a" style="left:7px;top:503px;width:577px;height:15px;background:#607d8b;border-radius:3px 3px 0 0"></div>
<div class="a" style="left:9px;top:518px;width:575px;height:2px;background:#263238"></div>
<div class="t" style="left:-104.5px;width:800px;top:504.0px;font-size:12.7px;line-height:17px;color:#f4f6f7;text-align:center;">Account Info</div>
<svg class="a" style="left:565px;top:506.5px;" width="14" height="9" viewBox="0 0 14 9"><path d="M0 8.5 L7.0 0.5 L14 8.5 Z" fill="#fff"/></svg>
<div class="t" style="left:15px;top:527.0px;font-size:12.7px;line-height:17px;color:#f4f6f7;">Balance</div>
<div class="t" style="left:109px;top:527.0px;font-size:12.7px;line-height:17px;color:#f4f6f7;">23875.26$</div>
<div class="t" style="left:306px;top:527.0px;font-size:12.7px;line-height:17px;color:#f4f6f7;">Equity</div>
<div class="t" style="left:400px;top:527.0px;font-size:12.7px;line-height:17px;color:#f28b7a;">21753.20$</div>
<div class="t" style="left:15px;top:540.5px;font-size:12.7px;line-height:17px;color:#f4f6f7;">Free Marg</div>
<div class="t" style="left:109px;top:540.5px;font-size:12.7px;line-height:17px;color:#f4f6f7;">18819.26$</div>
<div class="t" style="left:306px;top:540.5px;font-size:12.7px;line-height:17px;color:#f4f6f7;">Free Lots</div>
<div class="t" style="left:400px;top:540.5px;font-size:12.7px;line-height:17px;color:#2ee0a8;">72.03/72.03</div>
<div class="t" style="left:15px;top:554.0px;font-size:12.7px;line-height:17px;color:#f4f6f7;">Loss</div>
<div class="t" style="left:109px;top:554.0px;font-size:12.7px;line-height:17px;color:#f28b7a;">-2122.06$</div>
<div class="t" style="left:306px;top:554.0px;font-size:12.7px;line-height:17px;color:#f4f6f7;">DrawDown</div>
<div class="t" style="left:400px;top:554.0px;font-size:12.7px;line-height:17px;color:#f28b7a;">-8.88811%</div>
<div class="a" style="left:7px;top:576px;width:577px;height:15px;background:#607d8b;border-radius:3px 3px 0 0"></div>
<div class="a" style="left:9px;top:591px;width:575px;height:2px;background:#263238"></div>
<div class="t" style="left:-104.5px;width:800px;top:577.0px;font-size:12.7px;line-height:17px;color:#f4f6f7;text-align:center;">Profit by Date  (All Symbols) (All Magics)</div>
<svg class="a" style="left:565px;top:579.5px;" width="14" height="9" viewBox="0 0 14 9"><path d="M0 0.5 L7.0 8.5 L14 0.5 Z" fill="#fff"/></svg>
<div class="a" style="left:6px;top:592px;width:579px;height:22px;background:#263238"></div>
<div class="t" style="left:9.2px;top:593.2px;font-size:16.5px;line-height:21px;color:#00e5ff;letter-spacing:-1px">EA</div>
<div class="t" style="left:31px;top:593.2px;font-size:16.5px;line-height:21px;color:#2196f3;">Pad</div>
<div class="t" style="left:66.6px;top:589.8px;font-size:21px;line-height:27px;color:#ff4081;letter-spacing:-1px">PRO</div>
<div class="a" style="left:252px;top:598px;width:42px;height:2px;background:#00e5ff"></div>
<div class="a" style="left:263px;top:602px;width:43px;height:2px;background:#2196f3"></div>
<div class="a" style="left:274px;top:606px;width:43px;height:2px;background:#ff4081"></div>
<div class="t" style="left:407px;top:593.5px;font-size:16.4px;line-height:21px;color:#f4f6f7;">EXPFOREX 2008-2024</div>
<div class="a" style="left:0px;top:659px;width:831px;height:316px;background:#f0f0f0"></div>
<div class="a" style="left:0px;top:660px;width:831px;height:1px;background:#a8a8a8"></div>
<svg class="a" style="left:2px;top:662px;" width="8" height="8" viewBox="0 0 8 8"><path d="M1 1 L7 7 M7 1 L1 7" stroke="#000" stroke-width="1.5"/></svg>
<div class="a" style="left:0px;top:675px;width:13px;height:296px;background:linear-gradient(#b8cde4,#c5d6ea)"></div>
<svg class="a" style="left:0px;top:890px;" width="14" height="82" viewBox="0 0 14 82"><text transform="translate(11,78) rotate(-90)" font-size="10.5" fill="#10182a" font-family="Liberation Sans">Terminal</text></svg>
<div class="a" style="left:15px;top:662px;width:799px;height:264px;background:#fff"></div>
<div class="a" style="left:15px;top:661px;width:799px;height:1px;background:#c8c8c8"></div>
<div class="a" style="left:73px;top:662px;width:1px;height:24px;background:#e2e2e2"></div>
<div class="a" style="left:172px;top:662px;width:1px;height:24px;background:#e2e2e2"></div>
<div class="a" style="left:217px;top:662px;width:1px;height:24px;background:#e2e2e2"></div>
<div class="a" style="left:253px;top:662px;width:1px;height:24px;background:#e2e2e2"></div>
<div class="a" style="left:298px;top:662px;width:1px;height:24px;background:#e2e2e2"></div>
<div class="a" style="left:343px;top:662px;width:1px;height:24px;background:#e2e2e2"></div>
<div class="a" style="left:388px;top:662px;width:1px;height:24px;background:#e2e2e2"></div>
<div class="a" style="left:433px;top:662px;width:1px;height:24px;background:#e2e2e2"></div>
<div class="a" style="left:532px;top:662px;width:1px;height:24px;background:#e2e2e2"></div>
<div class="a" style="left:577px;top:662px;width:1px;height:24px;background:#e2e2e2"></div>
<div class="a" style="left:622px;top:662px;width:1px;height:24px;background:#e2e2e2"></div>
<div class="a" style="left:671px;top:662px;width:1px;height:24px;background:#e2e2e2"></div>
<div class="a" style="left:15px;top:686px;width:799px;height:1px;background:#e0e0e0"></div>
<div class="t" style="left:21px;top:666.5px;font-size:11.6px;line-height:15px;color:#000;">Order</div>
<div class="t" style="right:1768px;top:666.5px;font-size:11.6px;line-height:15px;color:#000;text-align:right;">Time</div>
<div class="t" style="left:158px;top:668.0px;font-size:9px;line-height:12px;color:#666;">/</div>
<div class="t" style="right:1703px;top:666.5px;font-size:11.6px;line-height:15px;color:#000;text-align:right;">Type</div>
<div class="t" style="right:1667px;top:666.5px;font-size:11.6px;line-height:15px;color:#000;text-align:right;">Size</div>
<div class="t" style="left:261px;top:666.5px;font-size:11.6px;line-height:15px;color:#000;">Sym...</div>
<div class="t" style="right:1577px;top:666.5px;font-size:11.6px;line-height:15px;color:#000;text-align:right;">Price</div>
<div class="t" style="right:1532px;top:666.5px;font-size:11.6px;line-height:15px;color:#000;text-align:right;">S / L</div>
<div class="t" style="right:1488px;top:666.5px;font-size:11.6px;line-height:15px;color:#000;text-align:right;">T / P</div>
<div class="t" style="right:1388px;top:666.5px;font-size:11.6px;line-height:15px;color:#000;text-align:right;">Time</div>
<div class="t" style="right:1343px;top:666.5px;font-size:11.6px;line-height:15px;color:#000;text-align:right;">Price</div>
<div class="t" style="right:1299px;top:666.5px;font-size:11.6px;line-height:15px;color:#000;text-align:right;">Swap</div>
<div class="t" style="right:1249px;top:666.5px;font-size:11.6px;line-height:15px;color:#000;text-align:right;">Profit</div>
<div class="t" style="right:1107.5px;top:666.5px;font-size:11.6px;line-height:15px;color:#000;text-align:right;">Comment</div>
<div class="a" style="left:15px;top:686px;width:799px;height:20px;background:#ebebeb"></div>
<div class="a" style="left:72px;top:686px;width:1px;height:20px;background:#d6d6d6"></div>
<div class="a" style="left:171px;top:686px;width:1px;height:20px;background:#d6d6d6"></div>
<div class="a" style="left:216px;top:686px;width:1px;height:20px;background:#d6d6d6"></div>
<div class="a" style="left:252px;top:686px;width:1px;height:20px;background:#d6d6d6"></div>
<div class="a" style="left:297px;top:686px;width:1px;height:20px;background:#d6d6d6"></div>
<div class="a" style="left:342px;top:686px;width:1px;height:20px;background:#d6d6d6"></div>
<div class="a" style="left:387px;top:686px;width:1px;height:20px;background:#d6d6d6"></div>
<div class="a" style="left:432px;top:686px;width:1px;height:20px;background:#d6d6d6"></div>
<div class="a" style="left:531px;top:686px;width:1px;height:20px;background:#d6d6d6"></div>
<div class="a" style="left:576px;top:686px;width:1px;height:20px;background:#d6d6d6"></div>
<div class="a" style="left:621px;top:686px;width:1px;height:20px;background:#d6d6d6"></div>
<div class="a" style="left:670px;top:686px;width:1px;height:20px;background:#d6d6d6"></div>
<div class="a" style="left:15px;top:705px;width:799px;height:1px;background:#d6d6d6"></div>
<svg class="a" style="left:18px;top:688px;" width="15" height="17" viewBox="0 0 15 17"><path d="M1.5 1.5 H8 L11 4.5 V14.5 H1.5 Z" fill="#fff" stroke="#555" stroke-width="1"/><path d="M8 1.5 V4.5 H11" fill="none" stroke="#555" stroke-width="1"/><circle cx="10.5" cy="12.5" r="3.3" fill="#2a8ae0" stroke="#fff" stroke-width="0.6"/></svg>
<div class="t" style="left:37px;top:689.0px;font-size:11.1px;line-height:14px;color:#000;">233...</div>
<div class="t" style="right:1746.5px;top:689.0px;font-size:11.1px;line-height:14px;color:#000;text-align:right;">2024.09.04 00:1...</div>
<div class="t" style="right:1701.5px;top:689.0px;font-size:11.1px;line-height:14px;color:#000;text-align:right;">buy s...</div>
<div class="t" style="right:1665.5px;top:689.0px;font-size:11.1px;line-height:14px;color:#000;text-align:right;">0.10</div>
<div class="t" style="right:1620px;top:689.0px;font-size:11.1px;line-height:14px;color:#000;text-align:right;">usdjpy</div>
<div class="t" style="right:1575.5px;top:689.0px;font-size:11.1px;line-height:14px;color:#000;text-align:right;">195....</div>
<div class="t" style="right:1530px;top:689.0px;font-size:11.1px;line-height:14px;color:#000;text-align:right;">0.000</div>
<div class="t" style="right:1485px;top:689.0px;font-size:11.1px;line-height:14px;color:#000;text-align:right;">0.000</div>
<div class="t" style="right:1386.4px;top:689.0px;font-size:11.1px;line-height:14px;color:#000;text-align:right;">2024.09.04 00:1...</div>
<div class="t" style="right:1341.5px;top:689.0px;font-size:11.1px;line-height:14px;color:#000;text-align:right;">145....</div>
<div class="t" style="right:1296.2px;top:689.0px;font-size:11.1px;line-height:14px;color:#000;text-align:right;"></div>
<div class="t" style="right:1247.2px;top:689.0px;font-size:11.1px;line-height:14px;color:#000;text-align:right;"></div>
<div class="t" style="right:1105.3px;top:689.0px;font-size:11.1px;line-height:14px;color:#000;text-align:right;">cancelled</div>
<div class="a" style="left:15px;top:706px;width:799px;height:20px;background:#ffffff"></div>
<div class="a" style="left:72px;top:706px;width:1px;height:20px;background:#d6d6d6"></div>
<div class="a" style="left:171px;top:706px;width:1px;height:20px;background:#d6d6d6"></div>
<div class="a" style="left:216px;top:706px;width:1px;height:20px;background:#d6d6d6"></div>
<div class="a" style="left:252px;top:706px;width:1px;height:20px;background:#d6d6d6"></div>
<div class="a" style="left:297px;top:706px;width:1px;height:20px;background:#d6d6d6"></div>
<div class="a" style="left:342px;top:706px;width:1px;height:20px;background:#d6d6d6"></div>
<div class="a" style="left:387px;top:706px;width:1px;height:20px;background:#d6d6d6"></div>
<div class="a" style="left:432px;top:706px;width:1px;height:20px;background:#d6d6d6"></div>
<div class="a" style="left:531px;top:706px;width:1px;height:20px;background:#d6d6d6"></div>
<div class="a" style="left:576px;top:706px;width:1px;height:20px;background:#d6d6d6"></div>
<div class="a" style="left:621px;top:706px;width:1px;height:20px;background:#d6d6d6"></div>
<div class="a" style="left:670px;top:706px;width:1px;height:20px;background:#d6d6d6"></div>
<div class="a" style="left:15px;top:725px;width:799px;height:1px;background:#d6d6d6"></div>
<svg class="a" style="left:18px;top:708px;" width="15" height="17" viewBox="0 0 15 17"><path d="M1.5 1.5 H8 L11 4.5 V14.5 H1.5 Z" fill="#fff" stroke="#555" stroke-width="1"/><path d="M8 1.5 V4.5 H11" fill="none" stroke="#555" stroke-width="1"/><circle cx="10.5" cy="12.5" r="3.3" fill="#2a8ae0" stroke="#fff" stroke-width="0.6"/></svg>
<div class="t" style="left:37px;top:709.0px;font-size:11.1px;line-height:14px;color:#000;">233...</div>
<div class="t" style="right:1746.5px;top:709.0px;font-size:11.1px;line-height:14px;color:#000;text-align:right;">2024.09.04 01:0...</div>
<div class="t" style="right:1701.5px;top:709.0px;font-size:11.1px;line-height:14px;color:#000;text-align:right;">buy s...</div>
<div class="t" style="right:1665.5px;top:709.0px;font-size:11.1px;line-height:14px;color:#000;text-align:right;">0.10</div>
<div class="t" style="right:1620px;top:709.0px;font-size:11.1px;line-height:14px;color:#000;text-align:right;">xau...</div>
<div class="t" style="right:1575.5px;top:709.0px;font-size:11.1px;line-height:14px;color:#000;text-align:right;">2993...</div>
<div class="t" style="right:1530px;top:709.0px;font-size:11.1px;line-height:14px;color:#000;text-align:right;">0.00</div>
<div class="t" style="right:1485px;top:709.0px;font-size:11.1px;line-height:14px;color:#000;text-align:right;">0.00</div>
<div class="t" style="right:1386.4px;top:709.0px;font-size:11.1px;line-height:14px;color:#000;text-align:right;">2024.09.04 01:0...</div>
<div class="t" style="right:1341.5px;top:709.0px;font-size:11.1px;line-height:14px;color:#000;text-align:right;">2493...</div>
<div class="t" style="right:1296.2px;top:709.0px;font-size:11.1px;line-height:14px;color:#000;text-align:right;"></div>
<div class="t" style="right:1247.2px;top:709.0px;font-size:11.1px;line-height:14px;color:#000;text-align:right;"></div>
<div class="t" style="right:1105.3px;top:709.0px;font-size:11.1px;line-height:14px;color:#000;text-align:right;">cancelled</div>
<div class="a" style="left:15px;top:726px;width:799px;height:20px;background:#ebebeb"></div>
<div class="a" style="left:344px;top:727px;width:42px;height:18px;background:#f4a2a2"></div>
<div class="a" style="left:72px;top:726px;width:1px;height:20px;background:#d6d6d6"></div>
<div class="a" style="left:171px;top:726px;width:1px;height:20px;background:#d6d6d6"></div>
<div class="a" style="left:216px;top:726px;width:1px;height:20px;background:#d6d6d6"></div>
<div class="a" style="left:252px;top:726px;width:1px;height:20px;background:#d6d6d6"></div>
<div class="a" style="left:297px;top:726px;width:1px;height:20px;background:#d6d6d6"></div>
<div class="a" style="left:342px;top:726px;width:1px;height:20px;background:#d6d6d6"></div>
<div class="a" style="left:387px;top:726px;width:1px;height:20px;background:#d6d6d6"></div>
<div class="a" style="left:432px;top:726px;width:1px;height:20px;background:#d6d6d6"></div>
<div class="a" style="left:531px;top:726px;width:1px;height:20px;background:#d6d6d6"></div>
<div class="a" style="left:576px;top:726px;width:1px;height:20px;background:#d6d6d6"></div>
<div class="a" style="left:621px;top:726px;width:1px;height:20px;background:#d6d6d6"></div>
<div class="a" style="left:670px;top:726px;width:1px;height:20px;background:#d6d6d6"></div>
<div class="a" style="left:15px;top:745px;width:799px;height:1px;background:#d6d6d6"></div>
<svg class="a" style="left:18px;top:728px;" width="15" height="17" viewBox="0 0 15 17"><path d="M1.5 1.5 H8 L11 4.5 V14.5 H1.5 Z" fill="#fff" stroke="#555" stroke-width="1"/><path d="M8 1.5 V4.5 H11" fill="none" stroke="#555" stroke-width="1"/><circle cx="10.5" cy="12.5" r="3.3" fill="#e03a1a" stroke="#fff" stroke-width="0.6"/></svg>
<div class="t" style="left:37px;top:729.0px;font-size:11.1px;line-height:14px;color:#000;">233...</div>
<div class="t" style="right:1746.5px;top:729.0px;font-size:11.1px;line-height:14px;color:#000;text-align:right;">2024.09.04 03:0...</div>
<div class="t" style="right:1701.5px;top:729.0px;font-size:11.1px;line-height:14px;color:#000;text-align:right;">sell</div>
<div class="t" style="right:1665.5px;top:729.0px;font-size:11.1px;line-height:14px;color:#000;text-align:right;">5.07</div>
<div class="t" style="right:1620px;top:729.0px;font-size:11.1px;line-height:14px;color:#000;text-align:right;">usdjpy</div>
<div class="t" style="right:1575.5px;top:729.0px;font-size:11.1px;line-height:14px;color:#000;text-align:right;">145....</div>
<div class="t" style="right:1530px;top:729.0px;font-size:11.1px;line-height:14px;color:#000;text-align:right;">145....</div>
<div class="t" style="right:1485px;top:729.0px;font-size:11.1px;line-height:14px;color:#000;text-align:right;">144....</div>
<div class="t" style="right:1386.4px;top:729.0px;font-size:11.1px;line-height:14px;color:#000;text-align:right;">2024.09.04 03:0...</div>
<div class="t" style="right:1341.5px;top:729.0px;font-size:11.1px;line-height:14px;color:#000;text-align:right;">145....</div>
<div class="t" style="right:1296.2px;top:729.0px;font-size:11.1px;line-height:14px;color:#000;text-align:right;">0.00</div>
<div class="t" style="right:1247.2px;top:729.0px;font-size:11.1px;line-height:14px;color:#000;text-align:right;">139.48</div>
<div class="t" style="right:1105.3px;top:729.0px;font-size:11.1px;line-height:14px;color:#000;text-align:right;">TSAI Sniper[sl]</div>
<div class="a" style="left:15px;top:746px;width:799px;height:20px;background:#ffffff"></div>
<div class="a" style="left:344px;top:747px;width:42px;height:18px;background:#f4a2a2"></div>
<div class="a" style="left:72px;top:746px;width:1px;height:20px;background:#d6d6d6"></div>
<div class="a" style="left:171px;top:746px;width:1px;height:20px;background:#d6d6d6"></div>
<div class="a" style="left:216px;top:746px;width:1px;height:20px;background:#d6d6d6"></div>
<div class="a" style="left:252px;top:746px;width:1px;height:20px;background:#d6d6d6"></div>
<div class="a" style="left:297px;top:746px;width:1px;height:20px;background:#d6d6d6"></div>
<div class="a" style="left:342px;top:746px;width:1px;height:20px;background:#d6d6d6"></div>
<div class="a" style="left:387px;top:746px;width:1px;height:20px;background:#d6d6d6"></div>
<div class="a" style="left:432px;top:746px;width:1px;height:20px;background:#d6d6d6"></div>
<div class="a" style="left:531px;top:746px;width:1px;height:20px;background:#d6d6d6"></div>
<div class="a" style="left:576px;top:746px;width:1px;height:20px;background:#d6d6d6"></div>
<div class="a" style="left:621px;top:746px;width:1px;height:20px;background:#d6d6d6"></div>
<div class="a" style="left:670px;top:746px;width:1px;height:20px;background:#d6d6d6"></div>
<div class="a" style="left:15px;top:765px;width:799px;height:1px;background:#d6d6d6"></div>
<svg class="a" style="left:18px;top:748px;" width="15" height="17" viewBox="0 0 15 17"><path d="M1.5 1.5 H8 L11 4.5 V14.5 H1.5 Z" fill="#fff" stroke="#555" stroke-width="1"/><path d="M8 1.5 V4.5 H11" fill="none" stroke="#555" stroke-width="1"/><circle cx="10.5" cy="12.5" r="3.3" fill="#2a8ae0" stroke="#fff" stroke-width="0.6"/></svg>
<div class="t" style="left:37px;top:749.0px;font-size:11.1px;line-height:14px;color:#000;">233...</div>
<div class="t" style="right:1746.5px;top:749.0px;font-size:11.1px;line-height:14px;color:#000;text-align:right;">2024.09.04 03:0...</div>
<div class="t" style="right:1701.5px;top:749.0px;font-size:11.1px;line-height:14px;color:#000;text-align:right;">buy</div>
<div class="t" style="right:1665.5px;top:749.0px;font-size:11.1px;line-height:14px;color:#000;text-align:right;">2.04</div>
<div class="t" style="right:1620px;top:749.0px;font-size:11.1px;line-height:14px;color:#000;text-align:right;">xau...</div>
<div class="t" style="right:1575.5px;top:749.0px;font-size:11.1px;line-height:14px;color:#000;text-align:right;">2493...</div>
<div class="t" style="right:1530px;top:749.0px;font-size:11.1px;line-height:14px;color:#000;text-align:right;">2494...</div>
<div class="t" style="right:1485px;top:749.0px;font-size:11.1px;line-height:14px;color:#000;text-align:right;">2497...</div>
<div class="t" style="right:1386.4px;top:749.0px;font-size:11.1px;line-height:14px;color:#000;text-align:right;">2024.09.04 03:2...</div>
<div class="t" style="right:1341.5px;top:749.0px;font-size:11.1px;line-height:14px;color:#000;text-align:right;">2493...</div>
<div class="t" style="right:1296.2px;top:749.0px;font-size:11.1px;line-height:14px;color:#000;text-align:right;">0.00</div>
<div class="t" style="right:1247.2px;top:749.0px;font-size:11.1px;line-height:14px;color:#000;text-align:right;">36.72</div>
<div class="t" style="right:1105.3px;top:749.0px;font-size:11.1px;line-height:14px;color:#000;text-align:right;">TSAI Sniper[sl]</div>
<div class="a" style="left:15px;top:766px;width:799px;height:20px;background:#ebebeb"></div>
<div class="a" style="left:344px;top:767px;width:42px;height:18px;background:#f4a2a2"></div>
<div class="a" style="left:72px;top:766px;width:1px;height:20px;background:#d6d6d6"></div>
<div class="a" style="left:171px;top:766px;width:1px;height:20px;background:#d6d6d6"></div>
<div class="a" style="left:216px;top:766px;width:1px;height:20px;background:#d6d6d6"></div>
<div class="a" style="left:252px;top:766px;width:1px;height:20px;background:#d6d6d6"></div>
<div class="a" style="left:297px;top:766px;width:1px;height:20px;background:#d6d6d6"></div>
<div class="a" style="left:342px;top:766px;width:1px;height:20px;background:#d6d6d6"></div>
<div class="a" style="left:387px;top:766px;width:1px;height:20px;background:#d6d6d6"></div>
<div class="a" style="left:432px;top:766px;width:1px;height:20px;background:#d6d6d6"></div>
<div class="a" style="left:531px;top:766px;width:1px;height:20px;background:#d6d6d6"></div>
<div class="a" style="left:576px;top:766px;width:1px;height:20px;background:#d6d6d6"></div>
<div class="a" style="left:621px;top:766px;width:1px;height:20px;background:#d6d6d6"></div>
<div class="a" style="left:670px;top:766px;width:1px;height:20px;background:#d6d6d6"></div>
<div class="a" style="left:15px;top:785px;width:799px;height:1px;background:#d6d6d6"></div>
<svg class="a" style="left:18px;top:768px;" width="15" height="17" viewBox="0 0 15 17"><path d="M1.5 1.5 H8 L11 4.5 V14.5 H1.5 Z" fill="#fff" stroke="#555" stroke-width="1"/><path d="M8 1.5 V4.5 H11" fill="none" stroke="#555" stroke-width="1"/><circle cx="10.5" cy="12.5" r="3.3" fill="#e03a1a" stroke="#fff" stroke-width="0.6"/></svg>
<div class="t" style="left:37px;top:769.0px;font-size:11.1px;line-height:14px;color:#000;">233...</div>
<div class="t" style="right:1746.5px;top:769.0px;font-size:11.1px;line-height:14px;color:#000;text-align:right;">2024.09.04 03:3...</div>
<div class="t" style="right:1701.5px;top:769.0px;font-size:11.1px;line-height:14px;color:#000;text-align:right;">sell</div>
<div class="t" style="right:1665.5px;top:769.0px;font-size:11.1px;line-height:14px;color:#000;text-align:right;">5.13</div>
<div class="t" style="right:1620px;top:769.0px;font-size:11.1px;line-height:14px;color:#000;text-align:right;">usdjpy</div>
<div class="t" style="right:1575.5px;top:769.0px;font-size:11.1px;line-height:14px;color:#000;text-align:right;">145....</div>
<div class="t" style="right:1530px;top:769.0px;font-size:11.1px;line-height:14px;color:#000;text-align:right;">144....</div>
<div class="t" style="right:1485px;top:769.0px;font-size:11.1px;line-height:14px;color:#000;text-align:right;">144....</div>
<div class="t" style="right:1386.4px;top:769.0px;font-size:11.1px;line-height:14px;color:#000;text-align:right;">2024.09.04 03:4...</div>
<div class="t" style="right:1341.5px;top:769.0px;font-size:11.1px;line-height:14px;color:#000;text-align:right;">144....</div>
<div class="t" style="right:1296.2px;top:769.0px;font-size:11.1px;line-height:14px;color:#000;text-align:right;">0.00</div>
<div class="t" style="right:1247.2px;top:769.0px;font-size:11.1px;line-height:14px;color:#000;text-align:right;">169.86</div>
<div class="t" style="right:1105.3px;top:769.0px;font-size:11.1px;line-height:14px;color:#000;text-align:right;">TSAI Sniper[sl]</div>
<div class="a" style="left:15px;top:786px;width:799px;height:20px;background:#ffffff"></div>
<div class="a" style="left:344px;top:787px;width:42px;height:18px;background:#f4a2a2"></div>
<div class="a" style="left:72px;top:786px;width:1px;height:20px;background:#d6d6d6"></div>
<div class="a" style="left:171px;top:786px;width:1px;height:20px;background:#d6d6d6"></div>
<div class="a" style="left:216px;top:786px;width:1px;height:20px;background:#d6d6d6"></div>
<div class="a" style="left:252px;top:786px;width:1px;height:20px;background:#d6d6d6"></div>
<div class="a" style="left:297px;top:786px;width:1px;height:20px;background:#d6d6d6"></div>
<div class="a" style="left:342px;top:786px;width:1px;height:20px;background:#d6d6d6"></div>
<div class="a" style="left:387px;top:786px;width:1px;height:20px;background:#d6d6d6"></div>
<div class="a" style="left:432px;top:786px;width:1px;height:20px;background:#d6d6d6"></div>
<div class="a" style="left:531px;top:786px;width:1px;height:20px;background:#d6d6d6"></div>
<div class="a" style="left:576px;top:786px;width:1px;height:20px;background:#d6d6d6"></div>
<div class="a" style="left:621px;top:786px;width:1px;height:20px;background:#d6d6d6"></div>
<div class="a" style="left:670px;top:786px;width:1px;height:20px;background:#d6d6d6"></div>
<div class="a" style="left:15px;top:805px;width:799px;height:1px;background:#d6d6d6"></div>
<svg class="a" style="left:18px;top:788px;" width="15" height="17" viewBox="0 0 15 17"><path d="M1.5 1.5 H8 L11 4.5 V14.5 H1.5 Z" fill="#fff" stroke="#555" stroke-width="1"/><path d="M8 1.5 V4.5 H11" fill="none" stroke="#555" stroke-width="1"/><circle cx="10.5" cy="12.5" r="3.3" fill="#e03a1a" stroke="#fff" stroke-width="0.6"/></svg>
<div class="t" style="left:37px;top:789.0px;font-size:11.1px;line-height:14px;color:#000;">233...</div>
<div class="t" style="right:1746.5px;top:789.0px;font-size:11.1px;line-height:14px;color:#000;text-align:right;">2024.09.04 03:5...</div>
<div class="t" style="right:1701.5px;top:789.0px;font-size:11.1px;line-height:14px;color:#000;text-align:right;">sell</div>
<div class="t" style="right:1665.5px;top:789.0px;font-size:11.1px;line-height:14px;color:#000;text-align:right;">5.17</div>
<div class="t" style="right:1620px;top:789.0px;font-size:11.1px;line-height:14px;color:#000;text-align:right;">usdjpy</div>
<div class="t" style="right:1575.5px;top:789.0px;font-size:11.1px;line-height:14px;color:#000;text-align:right;">145....</div>
<div class="t" style="right:1530px;top:789.0px;font-size:11.1px;line-height:14px;color:#000;text-align:right;">145....</div>
<div class="t" style="right:1485px;top:789.0px;font-size:11.1px;line-height:14px;color:#000;text-align:right;">144....</div>
<div class="t" style="right:1386.4px;top:789.0px;font-size:11.1px;line-height:14px;color:#000;text-align:right;">2024.09.04 04:0...</div>
<div class="t" style="right:1341.5px;top:789.0px;font-size:11.1px;line-height:14px;color:#000;text-align:right;">145....</div>
<div class="t" style="right:1296.2px;top:789.0px;font-size:11.1px;line-height:14px;color:#000;text-align:right;">0.00</div>
<div class="t" style="right:1247.2px;top:789.0px;font-size:11.1px;line-height:14px;color:#000;text-align:right;">56.96</div>
<div class="t" style="right:1105.3px;top:789.0px;font-size:11.1px;line-height:14px;color:#000;text-align:right;">TSAI Sniper[sl]</div>
<div class="a" style="left:15px;top:806px;width:799px;height:20px;background:#ebebeb"></div>
<div class="a" style="left:344px;top:807px;width:42px;height:18px;background:#f4a2a2"></div>
<div class="a" style="left:72px;top:806px;width:1px;height:20px;background:#d6d6d6"></div>
<div class="a" style="left:171px;top:806px;width:1px;height:20px;background:#d6d6d6"></div>
<div class="a" style="left:216px;top:806px;width:1px;height:20px;background:#d6d6d6"></div>
<div class="a" style="left:252px;top:806px;width:1px;height:20px;background:#d6d6d6"></div>
<div class="a" style="left:297px;top:806px;width:1px;height:20px;background:#d6d6d6"></div>
<div class="a" style="left:342px;top:806px;width:1px;height:20px;background:#d6d6d6"></div>
<div class="a" style="left:387px;top:806px;width:1px;height:20px;background:#d6d6d6"></div>
<div class="a" style="left:432px;top:806px;width:1px;height:20px;background:#d6d6d6"></div>
<div class="a" style="left:531px;top:806px;width:1px;height:20px;background:#d6d6d6"></div>
<div class="a" style="left:576px;top:806px;width:1px;height:20px;background:#d6d6d6"></div>
<div class="a" style="left:621px;top:806px;width:1px;height:20px;background:#d6d6d6"></div>
<div class="a" style="left:670px;top:806px;width:1px;height:20px;background:#d6d6d6"></div>
<div class="a" style="left:15px;top:825px;width:799px;height:1px;background:#d6d6d6"></div>
<svg class="a" style="left:18px;top:808px;" width="15" height="17" viewBox="0 0 15 17"><path d="M1.5 1.5 H8 L11 4.5 V14.5 H1.5 Z" fill="#fff" stroke="#555" stroke-width="1"/><path d="M8 1.5 V4.5 H11" fill="none" stroke="#555" stroke-width="1"/><circle cx="10.5" cy="12.5" r="3.3" fill="#e03a1a" stroke="#fff" stroke-width="0.6"/></svg>
<div class="t" style="left:37px;top:809.0px;font-size:11.1px;line-height:14px;color:#000;">233...</div>
<div class="t" style="right:1746.5px;top:809.0px;font-size:11.1px;line-height:14px;color:#000;text-align:right;">2024.09.04 04:0...</div>
<div class="t" style="right:1701.5px;top:809.0px;font-size:11.1px;line-height:14px;color:#000;text-align:right;">sell</div>
<div class="t" style="right:1665.5px;top:809.0px;font-size:11.1px;line-height:14px;color:#000;text-align:right;">1.97</div>
<div class="t" style="right:1620px;top:809.0px;font-size:11.1px;line-height:14px;color:#000;text-align:right;">xau...</div>
<div class="t" style="right:1575.5px;top:809.0px;font-size:11.1px;line-height:14px;color:#000;text-align:right;">2491...</div>
<div class="t" style="right:1530px;top:809.0px;font-size:11.1px;line-height:14px;color:#000;text-align:right;">2490...</div>
<div class="t" style="right:1485px;top:809.0px;font-size:11.1px;line-height:14px;color:#000;text-align:right;">2487...</div>
<div class="t" style="right:1386.4px;top:809.0px;font-size:11.1px;line-height:14px;color:#000;text-align:right;">2024.09.04 09:2...</div>
<div class="t" style="right:1341.5px;top:809.0px;font-size:11.1px;line-height:14px;color:#000;text-align:right;">2491...</div>
<div class="t" style="right:1296.2px;top:809.0px;font-size:11.1px;line-height:14px;color:#000;text-align:right;">0.00</div>
<div class="t" style="right:1247.2px;top:809.0px;font-size:11.1px;line-height:14px;color:#000;text-align:right;">149.72</div>
<div class="t" style="right:1105.3px;top:809.0px;font-size:11.1px;line-height:14px;color:#000;text-align:right;">TSAI Sniper[sl]</div>
<div class="a" style="left:15px;top:826px;width:799px;height:20px;background:#ffffff"></div>
<div class="a" style="left:344px;top:827px;width:42px;height:18px;background:#f4a2a2"></div>
<div class="a" style="left:72px;top:826px;width:1px;height:20px;background:#d6d6d6"></div>
<div class="a" style="left:171px;top:826px;width:1px;height:20px;background:#d6d6d6"></div>
<div class="a" style="left:216px;top:826px;width:1px;height:20px;background:#d6d6d6"></div>
<div class="a" style="left:252px;top:826px;width:1px;height:20px;background:#d6d6d6"></div>
<div class="a" style="left:297px;top:826px;width:1px;height:20px;background:#d6d6d6"></div>
<div class="a" style="left:342px;top:826px;width:1px;height:20px;background:#d6d6d6"></div>
<div class="a" style="left:387px;top:826px;width:1px;height:20px;background:#d6d6d6"></div>
<div class="a" style="left:432px;top:826px;width:1px;height:20px;background:#d6d6d6"></div>
<div class="a" style="left:531px;top:826px;width:1px;height:20px;background:#d6d6d6"></div>
<div class="a" style="left:576px;top:826px;width:1px;height:20px;background:#d6d6d6"></div>
<div class="a" style="left:621px;top:826px;width:1px;height:20px;background:#d6d6d6"></div>
<div class="a" style="left:670px;top:826px;width:1px;height:20px;background:#d6d6d6"></div>
<div class="a" style="left:15px;top:845px;width:799px;height:1px;background:#d6d6d6"></div>
<svg class="a" style="left:18px;top:828px;" width="15" height="17" viewBox="0 0 15 17"><path d="M1.5 1.5 H8 L11 4.5 V14.5 H1.5 Z" fill="#fff" stroke="#555" stroke-width="1"/><path d="M8 1.5 V4.5 H11" fill="none" stroke="#555" stroke-width="1"/><circle cx="10.5" cy="12.5" r="3.3" fill="#e03a1a" stroke="#fff" stroke-width="0.6"/></svg>
<div class="t" style="left:37px;top:829.0px;font-size:11.1px;line-height:14px;color:#000;">233...</div>
<div class="t" style="right:1746.5px;top:829.0px;font-size:11.1px;line-height:14px;color:#000;text-align:right;">2024.09.04 05:0...</div>
<div class="t" style="right:1701.5px;top:829.0px;font-size:11.1px;line-height:14px;color:#000;text-align:right;">sell</div>
<div class="t" style="right:1665.5px;top:829.0px;font-size:11.1px;line-height:14px;color:#000;text-align:right;">4.91</div>
<div class="t" style="right:1620px;top:829.0px;font-size:11.1px;line-height:14px;color:#000;text-align:right;">usdjpy</div>
<div class="t" style="right:1575.5px;top:829.0px;font-size:11.1px;line-height:14px;color:#000;text-align:right;">145....</div>
<div class="t" style="right:1530px;top:829.0px;font-size:11.1px;line-height:14px;color:#000;text-align:right;">145....</div>
<div class="t" style="right:1485px;top:829.0px;font-size:11.1px;line-height:14px;color:#000;text-align:right;">144....</div>
<div class="t" style="right:1386.4px;top:829.0px;font-size:11.1px;line-height:14px;color:#000;text-align:right;">2024.09.04 08:1...</div>
<div class="t" style="right:1341.5px;top:829.0px;font-size:11.1px;line-height:14px;color:#000;text-align:right;">145....</div>
<div class="t" style="right:1296.2px;top:829.0px;font-size:11.1px;line-height:14px;color:#000;text-align:right;">0.00</div>
<div class="t" style="right:1247.2px;top:829.0px;font-size:11.1px;line-height:14px;color:#000;text-align:right;">368.73</div>
<div class="t" style="right:1105.3px;top:829.0px;font-size:11.1px;line-height:14px;color:#000;text-align:right;">TSAI Sniper[sl]</div>
<div class="a" style="left:15px;top:846px;width:799px;height:20px;background:#ebebeb"></div>
<div class="a" style="left:344px;top:847px;width:42px;height:18px;background:#f4a2a2"></div>
<div class="a" style="left:72px;top:846px;width:1px;height:20px;background:#d6d6d6"></div>
<div class="a" style="left:171px;top:846px;width:1px;height:20px;background:#d6d6d6"></div>
<div class="a" style="left:216px;top:846px;width:1px;height:20px;background:#d6d6d6"></div>
<div class="a" style="left:252px;top:846px;width:1px;height:20px;background:#d6d6d6"></div>
<div class="a" style="left:297px;top:846px;width:1px;height:20px;background:#d6d6d6"></div>
<div class="a" style="left:342px;top:846px;width:1px;height:20px;background:#d6d6d6"></div>
<div class="a" style="left:387px;top:846px;width:1px;height:20px;background:#d6d6d6"></div>
<div class="a" style="left:432px;top:846px;width:1px;height:20px;background:#d6d6d6"></div>
<div class="a" style="left:531px;top:846px;width:1px;height:20px;background:#d6d6d6"></div>
<div class="a" style="left:576px;top:846px;width:1px;height:20px;background:#d6d6d6"></div>
<div class="a" style="left:621px;top:846px;width:1px;height:20px;background:#d6d6d6"></div>
<div class="a" style="left:670px;top:846px;width:1px;height:20px;background:#d6d6d6"></div>
<div class="a" style="left:15px;top:865px;width:799px;height:1px;background:#d6d6d6"></div>
<svg class="a" style="left:18px;top:848px;" width="15" height="17" viewBox="0 0 15 17"><path d="M1.5 1.5 H8 L11 4.5 V14.5 H1.5 Z" fill="#fff" stroke="#555" stroke-width="1"/><path d="M8 1.5 V4.5 H11" fill="none" stroke="#555" stroke-width="1"/><circle cx="10.5" cy="12.5" r="3.3" fill="#2a8ae0" stroke="#fff" stroke-width="0.6"/></svg>
<div class="t" style="left:37px;top:849.0px;font-size:11.1px;line-height:14px;color:#000;">233...</div>
<div class="t" style="right:1746.5px;top:849.0px;font-size:11.1px;line-height:14px;color:#000;text-align:right;">2024.09.04 05:3...</div>
<div class="t" style="right:1701.5px;top:849.0px;font-size:11.1px;line-height:14px;color:#000;text-align:right;">buy</div>
<div class="t" style="right:1665.5px;top:849.0px;font-size:11.1px;line-height:14px;color:#000;text-align:right;">1.76</div>
<div class="t" style="right:1620px;top:849.0px;font-size:11.1px;line-height:14px;color:#000;text-align:right;">xau...</div>
<div class="t" style="right:1575.5px;top:849.0px;font-size:11.1px;line-height:14px;color:#000;text-align:right;">2496...</div>
<div class="t" style="right:1530px;top:849.0px;font-size:11.1px;line-height:14px;color:#000;text-align:right;">2496...</div>
<div class="t" style="right:1485px;top:849.0px;font-size:11.1px;line-height:14px;color:#000;text-align:right;">2500...</div>
<div class="t" style="right:1386.4px;top:849.0px;font-size:11.1px;line-height:14px;color:#000;text-align:right;">2024.09.04 05:3...</div>
<div class="t" style="right:1341.5px;top:849.0px;font-size:11.1px;line-height:14px;color:#000;text-align:right;">2496...</div>
<div class="t" style="right:1296.2px;top:849.0px;font-size:11.1px;line-height:14px;color:#000;text-align:right;">0.00</div>
<div class="t" style="right:1247.2px;top:849.0px;font-size:11.1px;line-height:14px;color:#000;text-align:right;">45.76</div>
<div class="t" style="right:1105.3px;top:849.0px;font-size:11.1px;line-height:14px;color:#000;text-align:right;">TSAI Sniper[sl]</div>
<div class="a" style="left:15px;top:866px;width:799px;height:20px;background:#ffffff"></div>
<div class="a" style="left:344px;top:867px;width:42px;height:18px;background:#f4a2a2"></div>
<div class="a" style="left:72px;top:866px;width:1px;height:20px;background:#d6d6d6"></div>
<div class="a" style="left:171px;top:866px;width:1px;height:20px;background:#d6d6d6"></div>
<div class="a" style="left:216px;top:866px;width:1px;height:20px;background:#d6d6d6"></div>
<div class="a" style="left:252px;top:866px;width:1px;height:20px;background:#d6d6d6"></div>
<div class="a" style="left:297px;top:866px;width:1px;height:20px;background:#d6d6d6"></div>
<div class="a" style="left:342px;top:866px;width:1px;height:20px;background:#d6d6d6"></div>
<div class="a" style="left:387px;top:866px;width:1px;height:20px;background:#d6d6d6"></div>
<div class="a" style="left:432px;top:866px;width:1px;height:20px;background:#d6d6d6"></div>
<div class="a" style="left:531px;top:866px;width:1px;height:20px;background:#d6d6d6"></div>
<div class="a" style="left:576px;top:866px;width:1px;height:20px;background:#d6d6d6"></div>
<div class="a" style="left:621px;top:866px;width:1px;height:20px;background:#d6d6d6"></div>
<div class="a" style="left:670px;top:866px;width:1px;height:20px;background:#d6d6d6"></div>
<div class="a" style="left:15px;top:885px;width:799px;height:1px;background:#d6d6d6"></div>
<svg class="a" style="left:18px;top:868px;" width="15" height="17" viewBox="0 0 15 17"><path d="M1.5 1.5 H8 L11 4.5 V14.5 H1.5 Z" fill="#fff" stroke="#555" stroke-width="1"/><path d="M8 1.5 V4.5 H11" fill="none" stroke="#555" stroke-width="1"/><circle cx="10.5" cy="12.5" r="3.3" fill="#2a8ae0" stroke="#fff" stroke-width="0.6"/></svg>
<div class="t" style="left:37px;top:869.0px;font-size:11.1px;line-height:14px;color:#000;">233...</div>
<div class="t" style="right:1746.5px;top:869.0px;font-size:11.1px;line-height:14px;color:#000;text-align:right;">2024.09.04 08:2...</div>
<div class="t" style="right:1701.5px;top:869.0px;font-size:11.1px;line-height:14px;color:#000;text-align:right;">buy</div>
<div class="t" style="right:1665.5px;top:869.0px;font-size:11.1px;line-height:14px;color:#000;text-align:right;">1.97</div>
<div class="t" style="right:1620px;top:869.0px;font-size:11.1px;line-height:14px;color:#000;text-align:right;">xau...</div>
<div class="t" style="right:1575.5px;top:869.0px;font-size:11.1px;line-height:14px;color:#000;text-align:right;">2495...</div>
<div class="t" style="right:1530px;top:869.0px;font-size:11.1px;line-height:14px;color:#000;text-align:right;">2496...</div>
<div class="t" style="right:1485px;top:869.0px;font-size:11.1px;line-height:14px;color:#000;text-align:right;">2499...</div>
<div class="t" style="right:1386.4px;top:869.0px;font-size:11.1px;line-height:14px;color:#000;text-align:right;">2024.09.04 08:3...</div>
<div class="t" style="right:1341.5px;top:869.0px;font-size:11.1px;line-height:14px;color:#000;text-align:right;">2495...</div>
<div class="t" style="right:1296.2px;top:869.0px;font-size:11.1px;line-height:14px;color:#000;text-align:right;">0.00</div>
<div class="t" style="right:1247.2px;top:869.0px;font-size:11.1px;line-height:14px;color:#000;text-align:right;">35.46</div>
<div class="t" style="right:1105.3px;top:869.0px;font-size:11.1px;line-height:14px;color:#000;text-align:right;">TSAI Sniper[sl]</div>
<div class="a" style="left:15px;top:886px;width:799px;height:20px;background:#ebebeb"></div>
<div class="a" style="left:344px;top:887px;width:42px;height:18px;background:#f4a2a2"></div>
<div class="a" style="left:72px;top:886px;width:1px;height:20px;background:#d6d6d6"></div>
<div class="a" style="left:171px;top:886px;width:1px;height:20px;background:#d6d6d6"></div>
<div class="a" style="left:216px;top:886px;width:1px;height:20px;background:#d6d6d6"></div>
<div class="a" style="left:252px;top:886px;width:1px;height:20px;background:#d6d6d6"></div>
<div class="a" style="left:297px;top:886px;width:1px;height:20px;background:#d6d6d6"></div>
<div class="a" style="left:342px;top:886px;width:1px;height:20px;background:#d6d6d6"></div>
<div class="a" style="left:387px;top:886px;width:1px;height:20px;background:#d6d6d6"></div>
<div class="a" style="left:432px;top:886px;width:1px;height:20px;background:#d6d6d6"></div>
<div class="a" style="left:531px;top:886px;width:1px;height:20px;background:#d6d6d6"></div>
<div class="a" style="left:576px;top:886px;width:1px;height:20px;background:#d6d6d6"></div>
<div class="a" style="left:621px;top:886px;width:1px;height:20px;background:#d6d6d6"></div>
<div class="a" style="left:670px;top:886px;width:1px;height:20px;background:#d6d6d6"></div>
<div class="a" style="left:15px;top:905px;width:799px;height:1px;background:#d6d6d6"></div>
<svg class="a" style="left:18px;top:888px;" width="15" height="17" viewBox="0 0 15 17"><path d="M1.5 1.5 H8 L11 4.5 V14.5 H1.5 Z" fill="#fff" stroke="#555" stroke-width="1"/><path d="M8 1.5 V4.5 H11" fill="none" stroke="#555" stroke-width="1"/><circle cx="10.5" cy="12.5" r="3.3" fill="#e03a1a" stroke="#fff" stroke-width="0.6"/></svg>
<div class="t" style="left:37px;top:889.0px;font-size:11.1px;line-height:14px;color:#000;">233...</div>
<div class="t" style="right:1746.5px;top:889.0px;font-size:11.1px;line-height:14px;color:#000;text-align:right;">2024.09.04 09:3...</div>
<div class="t" style="right:1701.5px;top:889.0px;font-size:11.1px;line-height:14px;color:#000;text-align:right;">sell</div>
<div class="t" style="right:1665.5px;top:889.0px;font-size:11.1px;line-height:14px;color:#000;text-align:right;">1.91</div>
<div class="t" style="right:1620px;top:889.0px;font-size:11.1px;line-height:14px;color:#000;text-align:right;">xau...</div>
<div class="t" style="right:1575.5px;top:889.0px;font-size:11.1px;line-height:14px;color:#000;text-align:right;">2489...</div>
<div class="t" style="right:1530px;top:889.0px;font-size:11.1px;line-height:14px;color:#000;text-align:right;">2486...</div>
<div class="t" style="right:1485px;top:889.0px;font-size:11.1px;line-height:14px;color:#000;text-align:right;">2484...</div>
<div class="t" style="right:1386.4px;top:889.0px;font-size:11.1px;line-height:14px;color:#000;text-align:right;">2024.09.04 09:3...</div>
<div class="t" style="right:1341.5px;top:889.0px;font-size:11.1px;line-height:14px;color:#000;text-align:right;">2486...</div>
<div class="t" style="right:1296.2px;top:889.0px;font-size:11.1px;line-height:14px;color:#000;text-align:right;">0.00</div>
<div class="t" style="right:1247.2px;top:889.0px;font-size:11.1px;line-height:14px;color:#000;text-align:right;">504.24</div>
<div class="t" style="right:1105.3px;top:889.0px;font-size:11.1px;line-height:14px;color:#000;text-align:right;">TSAI Sniper[sl]</div>
<div class="a" style="left:15px;top:906px;width:799px;height:20px;background:#ffffff"></div>
<div class="a" style="left:344px;top:907px;width:42px;height:18px;background:#f4a2a2"></div>
<div class="a" style="left:72px;top:906px;width:1px;height:20px;background:#d6d6d6"></div>
<div class="a" style="left:171px;top:906px;width:1px;height:20px;background:#d6d6d6"></div>
<div class="a" style="left:216px;top:906px;width:1px;height:20px;background:#d6d6d6"></div>
<div class="a" style="left:252px;top:906px;width:1px;height:20px;background:#d6d6d6"></div>
<div class="a" style="left:297px;top:906px;width:1px;height:20px;background:#d6d6d6"></div>
<div class="a" style="left:342px;top:906px;width:1px;height:20px;background:#d6d6d6"></div>
<div class="a" style="left:387px;top:906px;width:1px;height:20px;background:#d6d6d6"></div>
<div class="a" style="left:432px;top:906px;width:1px;height:20px;background:#d6d6d6"></div>
<div class="a" style="left:531px;top:906px;width:1px;height:20px;background:#d6d6d6"></div>
<div class="a" style="left:576px;top:906px;width:1px;height:20px;background:#d6d6d6"></div>
<div class="a" style="left:621px;top:906px;width:1px;height:20px;background:#d6d6d6"></div>
<div class="a" style="left:670px;top:906px;width:1px;height:20px;background:#d6d6d6"></div>
<div class="a" style="left:15px;top:925px;width:799px;height:1px;background:#d6d6d6"></div>
<svg class="a" style="left:18px;top:908px;" width="15" height="17" viewBox="0 0 15 17"><path d="M1.5 1.5 H8 L11 4.5 V14.5 H1.5 Z" fill="#fff" stroke="#555" stroke-width="1"/><path d="M8 1.5 V4.5 H11" fill="none" stroke="#555" stroke-width="1"/><circle cx="10.5" cy="12.5" r="3.3" fill="#e03a1a" stroke="#fff" stroke-width="0.6"/></svg>
<div class="t" style="left:37px;top:909.0px;font-size:11.1px;line-height:14px;color:#000;">233...</div>
<div class="t" style="right:1746.5px;top:909.0px;font-size:11.1px;line-height:14px;color:#000;text-align:right;">2024.09.04 10:1...</div>
<div class="t" style="right:1701.5px;top:909.0px;font-size:11.1px;line-height:14px;color:#000;text-align:right;">sell</div>
<div class="t" style="right:1665.5px;top:909.0px;font-size:11.1px;line-height:14px;color:#000;text-align:right;">1.96</div>
<div class="t" style="right:1620px;top:909.0px;font-size:11.1px;line-height:14px;color:#000;text-align:right;">xau...</div>
<div class="t" style="right:1575.5px;top:909.0px;font-size:11.1px;line-height:14px;color:#000;text-align:right;">2487...</div>
<div class="t" style="right:1530px;top:909.0px;font-size:11.1px;line-height:14px;color:#000;text-align:right;">2486...</div>
<div class="t" style="right:1485px;top:909.0px;font-size:11.1px;line-height:14px;color:#000;text-align:right;">2482...</div>
<div class="t" style="right:1386.4px;top:909.0px;font-size:11.1px;line-height:14px;color:#000;text-align:right;">2024.09.04 10:1...</div>
<div class="t" style="right:1341.5px;top:909.0px;font-size:11.1px;line-height:14px;color:#000;text-align:right;">2486...</div>
<div class="t" style="right:1296.2px;top:909.0px;font-size:11.1px;line-height:14px;color:#000;text-align:right;">0.00</div>
<div class="t" style="right:1247.2px;top:909.0px;font-size:11.1px;line-height:14px;color:#000;text-align:right;">58.80</div>
<div class="t" style="right:1105.3px;top:909.0px;font-size:11.1px;line-height:14px;color:#000;text-align:right;">TSAI Sniper[sl]</div>
<div class="a" style="left:15px;top:926px;width:799px;height:20px;background:#cccccc"></div>
<svg class="a" style="left:20px;top:930px;" width="12" height="12" viewBox="0 0 12 12"><circle cx="6" cy="6" r="3.6" fill="#d0d0d0" stroke="#8a8a8a" stroke-width="1.1"/></svg>
<div class="t" style="left:37.3px;top:928.0px;font-size:11.8px;line-height:15px;color:#000;font-weight:bold">Profit/Loss: 13 647.32  Credit: 0.00  Deposit: 10 227.94  Withdrawal: 0.00</div>
<div class="t" style="left:627.8px;top:927.5px;font-size:12px;line-height:16px;color:#000;font-weight:bold">23 87...</div>
<div class="a" style="left:814px;top:662px;width:17px;height:284px;background:#f0f0f0"></div>
<div class="a" style="left:822px;top:916px;width:2px;height:17px;background:#888"></div>
<div class="a" style="left:15px;top:946px;width:816px;height:29px;background:#f0f0f0"></div>
<div class="a" style="left:15px;top:950px;width:119px;height:2px;background:#111"></div>
<div class="a" style="left:240px;top:950px;width:591px;height:2px;background:#111"></div>
<div class="a" style="left:134px;top:950px;width:106px;height:21px;background:#fff;border:2px solid #111;border-top:none"></div>
<div class="t" style="left:27.4px;top:952.5px;font-size:11.3px;line-height:15px;color:#6b6b6b;">Trade</div>
<div class="t" style="left:76px;top:952.5px;font-size:11.3px;line-height:15px;color:#6b6b6b;">Exposure</div>
<div class="t" style="left:250px;top:952.5px;font-size:11.3px;line-height:15px;color:#6b6b6b;">News</div>
<div class="t" style="left:311px;top:952.5px;font-size:11.3px;line-height:15px;color:#6b6b6b;">Alerts</div>
<div class="t" style="left:361px;top:952.5px;font-size:11.3px;line-height:15px;color:#6b6b6b;">Mailbox</div>
<div class="t" style="left:436.5px;top:952.5px;font-size:11.3px;line-height:15px;color:#6b6b6b;">Market</div>
<div class="t" style="left:505.4px;top:952.5px;font-size:11.3px;line-height:15px;color:#6b6b6b;">Signals</div>
<div class="t" style="left:562px;top:952.5px;font-size:11.3px;line-height:15px;color:#6b6b6b;">Articles</div>
<div class="t" style="left:643.5px;top:952.5px;font-size:11.3px;line-height:15px;color:#6b6b6b;">Code Base</div>
<div class="t" style="left:718px;top:952.5px;font-size:11.3px;line-height:15px;color:#6b6b6b;">Experts</div>
<div class="t" style="left:776px;top:952.5px;font-size:11.3px;line-height:15px;color:#6b6b6b;">Journal</div>
<div class="a" style="left:66px;top:953px;width:1px;height:15px;background:#666"></div>
<div class="a" style="left:302px;top:953px;width:1px;height:15px;background:#666"></div>
<div class="a" style="left:352px;top:953px;width:1px;height:15px;background:#666"></div>
<div class="a" style="left:427px;top:953px;width:1px;height:15px;background:#666"></div>
<div class="a" style="left:496px;top:953px;width:1px;height:15px;background:#666"></div>
<div class="a" style="left:553px;top:953px;width:1px;height:15px;background:#666"></div>
<div class="a" style="left:633px;top:953px;width:1px;height:15px;background:#666"></div>
<div class="a" style="left:709px;top:953px;width:1px;height:15px;background:#666"></div>
<div class="a" style="left:767px;top:953px;width:1px;height:15px;background:#666"></div>
<div class="a" style="left:824px;top:953px;width:1px;height:15px;background:#666"></div>
<div class="t" style="left:144px;top:952.0px;font-size:12.2px;line-height:16px;color:#000;">Account History</div>
<div class="t" style="left:281px;top:959.0px;font-size:8.5px;line-height:11px;color:#e01010;font-weight:bold">69</div>
<div class="t" style="left:404px;top:959.0px;font-size:8.5px;line-height:11px;color:#e01010;font-weight:bold">22</div>
<div class="t" style="left:473px;top:959.0px;font-size:8.5px;line-height:11px;color:#e01010;font-weight:bold">65</div>
<div class="t" style="left:603px;top:959.0px;font-size:8.5px;line-height:11px;color:#e01010;font-weight:bold">1711</div>
<div class="a" style="left:0px;top:975px;width:831px;height:24px;background:#f0f0f0"></div>
<div class="a" style="left:0px;top:975px;width:831px;height:1px;background:#d8d8d8"></div>
<div class="t" style="left:1.5px;top:982.0px;font-size:11.1px;line-height:14px;color:#000;">For Help, press F1</div>
<div class="t" style="left:250px;top:982.0px;font-size:11.1px;line-height:14px;color:#000;">Ticksniper VPS</div>
<div class="a" style="left:243.4px;top:980px;width:1px;height:18px;background:#c8c8c8"></div>
<div class="a" style="left:359.6px;top:980px;width:1px;height:18px;background:#c8c8c8"></div>
<div class="a" style="left:461.6px;top:980px;width:1px;height:18px;background:#c8c8c8"></div>
<div class="a" style="left:532.4px;top:980px;width:1px;height:18px;background:#c8c8c8"></div>
<div class="a" style="left:603.6px;top:980px;width:1px;height:18px;background:#c8c8c8"></div>
<div class="a" style="left:671.6px;top:980px;width:1px;height:18px;background:#c8c8c8"></div>
<div class="a" style="left:741.7px;top:980px;width:1px;height:18px;background:#c8c8c8"></div>
<svg class="a" style="left:813px;top:982px;" width="6" height="13" viewBox="0 0 6 13"><rect x="0" y="0" width="2" height="9" fill="#3a8a3a"/><rect x="3.5" y="0" width="2" height="9" fill="#8a3a3a"/><rect x="0" y="10" width="2" height="3" fill="#1a3a7a"/><rect x="3.5" y="10" width="2" height="3" fill="#1a3a7a"/></svg>
<svg class="a" style="left:820px;top:986px;" width="12" height="13" viewBox="0 0 12 13"><path d="M11 1 L1 12 M11 5 L5 12 M11 9 L9 12" stroke="#b0b0b0" stroke-width="1"/></svg>
<div class="a" style="left:833px;top:0px;width:1082px;height:83px;background:#f0f0f0"></div>
<svg class="a" style="left:839px;top:2px;" width="14" height="16" viewBox="0 0 14 16"><path d="M3.5 1 V15 M10.5 1 V15" stroke="#1db31d" stroke-width="1.5"/><rect x="1.5" y="4" width="4" height="7" fill="#fff" stroke="#1db31d" stroke-width="1.5"/><rect x="8.5" y="4" width="4" height="7" fill="#fff" stroke="#1db31d" stroke-width="1.5"/></svg>
<div class="t" style="left:864px;top:0.7px;font-size:11.8px;line-height:15px;color:#111;">File</div>
<div class="t" style="left:904px;top:0.7px;font-size:11.8px;line-height:15px;color:#111;">View</div>
<div class="t" style="left:951px;top:0.7px;font-size:11.8px;line-height:15px;color:#111;">Insert</div>
<div class="t" style="left:1002px;top:0.7px;font-size:11.8px;line-height:15px;color:#111;">Charts</div>
<div class="t" style="left:1058.7px;top:0.7px;font-size:11.8px;line-height:15px;color:#111;">Tools</div>
<div class="t" style="left:1107px;top:0.7px;font-size:11.8px;line-height:15px;color:#111;">Window</div>
<div class="t" style="left:1173px;top:0.7px;font-size:11.8px;line-height:15px;color:#111;">Help</div>
<svg class="a" style="left:1862px;top:5px;" width="11" height="6" viewBox="0 0 11 6"><path d="M0.5 3 H10.5" stroke="#a0a0a0" stroke-width="1.2"/></svg>
<svg class="a" style="left:1881px;top:3px;" width="10" height="10" viewBox="0 0 10 10"><rect x="1" y="3" width="6" height="6" fill="none" stroke="#a0a0a0" stroke-width="1.1"/><path d="M3 3 V1 H9 V7 H7" fill="none" stroke="#a0a0a0" stroke-width="1.1"/></svg>
<svg class="a" style="left:1900px;top:3px;" width="10" height="10" viewBox="0 0 10 10"><path d="M1 1 L9 9 M9 1 L1 9" stroke="#a0a0a0" stroke-width="1.2"/></svg>
<div class="a" style="left:833px;top:19px;width:1082px;height:1px;background:#d9d9d9"></div>
<div class="a" style="left:833px;top:50px;width:1082px;height:1px;background:#d4d4d4"></div>
<div class="a" style="left:833px;top:82px;width:1082px;height:1px;background:#c8c8c8"></div>
<svg class="a" style="left:834px;top:22px;" width="4" height="26" viewBox="0 0 4 26"><path d="M0.5 2.5 L3 0.5" stroke="#a8a8a8" stroke-width="1.1"/><path d="M0.5 6.0 L3 4.0" stroke="#a8a8a8" stroke-width="1.1"/><path d="M0.5 9.5 L3 7.5" stroke="#a8a8a8" stroke-width="1.1"/><path d="M0.5 13.0 L3 11.0" stroke="#a8a8a8" stroke-width="1.1"/><path d="M0.5 16.5 L3 14.5" stroke="#a8a8a8" stroke-width="1.1"/><path d="M0.5 20.0 L3 18.0" stroke="#a8a8a8" stroke-width="1.1"/><path d="M0.5 23.5 L3 21.5" stroke="#a8a8a8" stroke-width="1.1"/></svg>
<svg class="a" style="left:834px;top:53px;" width="4" height="27" viewBox="0 0 4 27"><path d="M0.5 2.5 L3 0.5" stroke="#a8a8a8" stroke-width="1.1"/><path d="M0.5 6.0 L3 4.0" stroke="#a8a8a8" stroke-width="1.1"/><path d="M0.5 9.5 L3 7.5" stroke="#a8a8a8" stroke-width="1.1"/><path d="M0.5 13.0 L3 11.0" stroke="#a8a8a8" stroke-width="1.1"/><path d="M0.5 16.5 L3 14.5" stroke="#a8a8a8" stroke-width="1.1"/><path d="M0.5 20.0 L3 18.0" stroke="#a8a8a8" stroke-width="1.1"/><path d="M0.5 23.5 L3 21.5" stroke="#a8a8a8" stroke-width="1.1"/></svg>
<svg class="a" style="left:844px;top:26px;" width="20" height="18" viewBox="0 0 20 18"><path d="M1 1 V17 H19" fill="none" stroke="#888" stroke-width="1"/><path d="M4 12 L9 6 L13 10 L18 5" fill="none" stroke="#2f7fd0" stroke-width="1.6"/></svg>
<svg class="a" style="left:869px;top:33px;" width="7" height="4" viewBox="0 0 7 4"><path d="M0 0 H7 L3.5 4 Z" fill="#222"/></svg>
<svg class="a" style="left:884px;top:26px;" width="21" height="19" viewBox="0 0 21 19"><rect x="1" y="1" width="19" height="13" rx="2" fill="#e8f2fc" stroke="#2f7fd0" stroke-width="1.5"/><path d="M4 10 L8 7 L11 9 L16 4" fill="none" stroke="#30a030" stroke-width="1.3"/><path d="M4 12 V10 M7 12 V9 M10 12 V10 M13 12 V8 M16 12 V7" stroke="#30a030" stroke-width="1"/><path d="M3 16 H18 M5 18 H16" stroke="#2f7fd0" stroke-width="1.3"/></svg>
<svg class="a" style="left:910px;top:33px;" width="7" height="4" viewBox="0 0 7 4"><path d="M0 0 H7 L3.5 4 Z" fill="#222"/></svg>
<svg class="a" style="left:929px;top:27px;" width="17" height="17" viewBox="0 0 17 17"><rect x="0.5" y="0.5" width="16" height="16" rx="2" fill="#f5c518" stroke="#d0a010" stroke-width="1"/><text x="8.5" y="13" font-size="12" fill="#a06a00" text-anchor="middle" font-family="Liberation Sans">$</text></svg>
<div class="a" style="left:955px;top:24px;width:1px;height:23px;background:#a0a0a0"></div>
<div class="t" style="left:966.4px;top:28.5px;font-size:10.8px;line-height:14px;color:#1e6bb8;">IDE</div>
<svg class="a" style="left:1000px;top:26px;" width="16" height="18" viewBox="0 0 16 18"><path d="M2 6 H14 L15 17 H1 Z" fill="#f5c518" stroke="#d8a810" stroke-width="1"/><path d="M5 7 V4 Q8 0 11 4 V7" fill="none" stroke="#c89000" stroke-width="1.3"/></svg>
<svg class="a" style="left:1030px;top:27px;" width="19" height="16" viewBox="0 0 19 16"><circle cx="9.5" cy="8" r="2" fill="none" stroke="#b8b8b8" stroke-width="1.3"/><path d="M5 4 Q2 8 5 12 M14 4 Q17 8 14 12 M2.5 2 Q-1 8 2.5 14 M16.5 2 Q20 8 16.5 14" fill="none" stroke="#b8b8b8" stroke-width="1.2"/></svg>
<svg class="a" style="left:1062px;top:26px;" width="19" height="19" viewBox="0 0 19 19"><path d="M4 12 Q0 12 1.5 8 Q2 5 5.5 5.5 Q7 1 11.5 1.5 Q16 2 16 6 Q19 7 18 10 Q17.5 12 15 12 Z" fill="none" stroke="#2f7fd0" stroke-width="1.5"/><path d="M9.5 12 V16 M3 16 H16" stroke="#2f7fd0" stroke-width="1.4"/><circle cx="9.5" cy="16" r="1.5" fill="#2f7fd0"/></svg>
<svg class="a" style="left:1094px;top:26px;" width="20" height="20" viewBox="0 0 20 20"><path d="M3 14 A8 8 0 1 1 15 3" fill="none" stroke="#2f7fd0" stroke-width="1.4"/><path d="M6 12 A5 5 0 1 1 13 6" fill="none" stroke="#2f7fd0" stroke-width="1.4"/><circle cx="9" cy="9" r="1.5" fill="#2f7fd0"/><circle cx="14" cy="14" r="5" fill="#fff" stroke="#30a030" stroke-width="1.4"/><path d="M14 11 V17 M11 14 H17" stroke="#30a030" stroke-width="1.4"/></svg>
<div class="a" style="left:1121px;top:24px;width:1px;height:23px;background:#a0a0a0"></div>
<div class="a" style="left:1126px;top:22px;width:101px;height:26px;background:#cce4f7;border:1px solid #99c9ef;border-radius:2px"></div>
<svg class="a" style="left:1134px;top:27px;" width="14" height="16" viewBox="0 0 14 16"><path d="M2 1.5 L12.5 8 L2 14.5 Z" fill="none" stroke="#1db31d" stroke-width="1.7"/></svg>
<div class="t" style="left:1153px;top:27.5px;font-size:12px;line-height:16px;color:#111;">Algo Trading</div>
<svg class="a" style="left:1235px;top:26px;" width="17" height="19" viewBox="0 0 17 19"><path d="M4 1 H12 L16 5 V18 H1 V4 Z" fill="#fff" stroke="#2f7fd0" stroke-width="1.4"/><path d="M8.5 6 V13 M5 9.5 H12" stroke="#2f7fd0" stroke-width="1.5"/></svg>
<div class="t" style="left:1256px;top:27.5px;font-size:12px;line-height:16px;color:#111;">New Order</div>
<div class="a" style="left:1323.5px;top:24px;width:1px;height:23px;background:#a0a0a0"></div>
<svg class="a" style="left:1334px;top:26px;" width="19" height="18" viewBox="0 0 19 18"><path d="M4 4 V17 M1 10 H4 M4 13 H7 M14 1 V14 M11 5 H14 M14 8 H17" stroke="#1db31d" stroke-width="1.6"/></svg>
<div class="a" style="left:1360px;top:22px;width:30px;height:26px;background:#cce4f7;border:1px solid #99c9ef;border-radius:2px"></div>
<svg class="a" style="left:1366px;top:26px;" width="18" height="19" viewBox="0 0 18 19"><path d="M4.5 1 V18 M13.5 1 V18" stroke="#1db31d" stroke-width="1.5"/><rect x="2" y="4" width="5" height="10" fill="#fff" stroke="#1db31d" stroke-width="1.6"/><rect x="11" y="4" width="5" height="10" fill="#fff" stroke="#1db31d" stroke-width="1.6"/></svg>
<svg class="a" style="left:1398px;top:28px;" width="19" height="14" viewBox="0 0 19 14"><path d="M1 8 L4 8 L6 3 L9 12 L12 4 L14 9 L18 8" fill="none" stroke="#1db31d" stroke-width="1.6"/></svg>
<div class="a" style="left:1425px;top:24px;width:1px;height:23px;background:#a0a0a0"></div>
<svg class="a" style="left:1437px;top:26px;" width="18" height="18" viewBox="0 0 18 18"><circle cx="7" cy="7" r="5.5" fill="none" stroke="#b0b0b0" stroke-width="1.4"/><path d="M11 11 L16.5 16.5" stroke="#b0b0b0" stroke-width="1.8"/><path d="M7 4 V10 M4 7 H10" stroke="#b0b0b0" stroke-width="1.2"/></svg>
<svg class="a" style="left:1469px;top:26px;" width="18" height="18" viewBox="0 0 18 18"><circle cx="7" cy="7" r="5.5" fill="none" stroke="#2f7fd0" stroke-width="1.5"/><path d="M11 11 L16.5 16.5" stroke="#2f7fd0" stroke-width="1.9"/><path d="M4 7 H10" stroke="#2f7fd0" stroke-width="1.4"/></svg>
<svg class="a" style="left:1501px;top:27px;" width="18" height="17" viewBox="0 0 18 17"><rect x="1" y="1" width="16" height="15" rx="2" fill="none" stroke="#2f7fd0" stroke-width="1.5"/><path d="M9 1 V16 M1 8.5 H17" stroke="#2f7fd0" stroke-width="1.5"/></svg>
<div class="a" style="left:1527px;top:24px;width:1px;height:23px;background:#a0a0a0"></div>
<div class="a" style="left:1532px;top:22px;width:30px;height:26px;background:#cce4f7;border:1px solid #99c9ef;border-radius:2px"></div>
<svg class="a" style="left:1537px;top:27px;" width="20" height="17" viewBox="0 0 20 17"><path d="M3 2 V14 M7 3 V13" stroke="#1db31d" stroke-width="1.3"/><rect x="1.5" y="5" width="3" height="6" fill="none" stroke="#1db31d" stroke-width="1.2"/><rect x="5.5" y="5" width="3" height="6" fill="none" stroke="#1db31d" stroke-width="1.2"/><path d="M10 8 H16 M13.5 5.5 L16 8 L13.5 10.5 M18 2 V14" fill="none" stroke="#2f7fd0" stroke-width="1.3"/><path d="M1 16 H19" stroke="#2f7fd0" stroke-width="1"/></svg>
<svg class="a" style="left:1569px;top:27px;" width="20" height="17" viewBox="0 0 20 17"><path d="M3 2 V14 M7 3 V13" stroke="#1db31d" stroke-width="1.3"/><rect x="1.5" y="5" width="3" height="6" fill="none" stroke="#1db31d" stroke-width="1.2"/><rect x="5.5" y="5" width="3" height="6" fill="none" stroke="#1db31d" stroke-width="1.2"/><path d="M11 2 V14 M19 8 H13 M15.5 5.5 L13 8 L15.5 10.5" fill="none" stroke="#2f7fd0" stroke-width="1.3"/><path d="M1 16 H19" stroke="#888" stroke-width="1"/></svg>
<div class="a" style="left:1597px;top:24px;width:1px;height:23px;background:#a0a0a0"></div>
<svg class="a" style="left:1607px;top:26px;" width="21" height="19" viewBox="0 0 21 19"><rect x="1" y="3" width="19" height="15" fill="none" stroke="#2f7fd0" stroke-width="1.3" stroke-dasharray="2.5 1.5"/><rect x="8" y="9" width="11" height="8" rx="1.5" fill="#fff" stroke="#2f7fd0" stroke-width="1.4"/><circle cx="13.5" cy="13" r="2" fill="none" stroke="#2f7fd0" stroke-width="1.2"/></svg>
<svg class="a" style="left:1636px;top:22px;" width="3" height="26" viewBox="0 0 3 26"><rect x="0.5" y="0" width="2" height="1.5" fill="#a8a8a8"/><rect x="0.5" y="3" width="2" height="1.5" fill="#a8a8a8"/><rect x="0.5" y="6" width="2" height="1.5" fill="#a8a8a8"/><rect x="0.5" y="9" width="2" height="1.5" fill="#a8a8a8"/><rect x="0.5" y="12" width="2" height="1.5" fill="#a8a8a8"/><rect x="0.5" y="15" width="2" height="1.5" fill="#a8a8a8"/><rect x="0.5" y="18" width="2" height="1.5" fill="#a8a8a8"/><rect x="0.5" y="21" width="2" height="1.5" fill="#a8a8a8"/><rect x="0.5" y="24" width="2" height="1.5" fill="#a8a8a8"/></svg>
<div class="a" style="left:1643px;top:22px;width:30px;height:26px;background:#cce4f7;border:1px solid #99c9ef;border-radius:2px"></div>
<svg class="a" style="left:1649px;top:26px;" width="18" height="18" viewBox="0 0 18 18"><path d="M2 2 L15 7 L9 9 L7 15 Z" fill="none" stroke="#2f7fd0" stroke-width="1.6" stroke-linejoin="round"/></svg>
<svg class="a" style="left:1682px;top:27px;" width="17" height="17" viewBox="0 0 17 17"><path d="M8.5 1 V16 M1 8.5 H16" stroke="#2f7fd0" stroke-width="1.4"/><circle cx="8.5" cy="8.5" r="2.2" fill="#fff" stroke="#2f7fd0" stroke-width="1.4"/></svg>
<div class="a" style="left:1708px;top:24px;width:1px;height:23px;background:#a0a0a0"></div>
<svg class="a" style="left:1724px;top:26px;" width="8" height="19" viewBox="0 0 8 19"><path d="M4 1 V18" stroke="#2f7fd0" stroke-width="1.4"/><circle cx="4" cy="9.5" r="2.2" fill="#fff" stroke="#2f7fd0" stroke-width="1.4"/></svg>
<svg class="a" style="left:1750px;top:31px;" width="18" height="8" viewBox="0 0 18 8"><path d="M1 4 H17" stroke="#2f7fd0" stroke-width="1.4"/><circle cx="9" cy="4" r="2.2" fill="#fff" stroke="#2f7fd0" stroke-width="1.4"/></svg>
<svg class="a" style="left:1777px;top:27px;" width="15" height="16" viewBox="0 0 15 16"><circle cx="6.5" cy="6.5" r="5" fill="none" stroke="#222" stroke-width="1.6"/><path d="M10 10 L14 14.5" stroke="#222" stroke-width="1.8"/></svg>
<svg class="a" style="left:1806px;top:24px;" width="25" height="22" viewBox="0 0 25 22"><circle cx="9" cy="12" r="7.5" fill="none" stroke="#333" stroke-width="1.5"/><circle cx="9" cy="10" r="2.5" fill="none" stroke="#333" stroke-width="1.3"/><path d="M4.5 17 Q9 12 13.5 17" fill="none" stroke="#333" stroke-width="1.3"/><circle cx="17" cy="8" r="6.5" fill="#e53935"/><text x="17" y="12" font-size="10" fill="#fff" text-anchor="middle" font-family="Liberation Sans">1</text></svg>
<svg class="a" style="left:1845px;top:25px;" width="15" height="21" viewBox="0 0 15 21"><path d="M7.5 1 L11.5 5 H9 V9 H6 V5 H3.5 Z" fill="none" stroke="#1db31d" stroke-width="1.2"/><text x="7.5" y="19" font-size="7.5" font-weight="bold" fill="#1db31d" text-anchor="middle" font-family="Liberation Sans">LVL</text></svg>
<div class="a" style="left:1868px;top:30px;width:42px;height:13px;background:#fff;border:1px solid #b0b0b0"></div>
<div class="a" style="left:1869px;top:31px;width:21px;height:11px;background:#2ecc2e"></div>
<div class="a" style="left:968px;top:53px;width:30px;height:26px;background:#cce4f7;border:1px solid #99c9ef;border-radius:2px"></div>
<div class="t" style="left:847px;top:58.5px;font-size:12px;line-height:16px;color:#1e6bb8;">M1</div>
<div class="t" style="left:879px;top:58.5px;font-size:12px;line-height:16px;color:#1e6bb8;">M5</div>
<div class="t" style="left:908.5px;top:58.5px;font-size:12px;line-height:16px;color:#1e6bb8;">M15</div>
<div class="t" style="left:940.3px;top:58.5px;font-size:12px;line-height:16px;color:#1e6bb8;">M30</div>
<div class="t" style="left:975.8px;top:58.5px;font-size:12px;line-height:16px;color:#1e6bb8;">H1</div>
<div class="t" style="left:1008.7px;top:58.5px;font-size:12px;line-height:16px;color:#1e6bb8;">H4</div>
<div class="t" style="left:1040px;top:58.5px;font-size:12px;line-height:16px;color:#1e6bb8;">D1</div>
<div class="t" style="left:1070.8px;top:58.5px;font-size:12px;line-height:16px;color:#1e6bb8;">W1</div>
<div class="t" style="left:1102px;top:58.5px;font-size:12px;line-height:16px;color:#1e6bb8;">MN</div>
<div class="a" style="left:1127px;top:53px;width:1px;height:27px;background:#a0a0a0"></div>
<div class="a" style="left:833px;top:83px;width:1082px;height:553px;background:#fff"></div>
<div class="a" style="left:833px;top:83px;width:1px;height:916px;background:#a0a0a0"></div>
<div class="a" style="left:831px;top:82px;width:3px;height:554px;background:#a8a8a8"></div>
<div class="a" style="left:836px;top:85px;width:1026px;height:1px;background:#000"></div>
<div class="a" style="left:836px;top:85px;width:1px;height:529px;background:#000"></div>
<div class="a" style="left:836px;top:613px;width:1026px;height:1px;background:#000"></div>
<div class="a" style="left:1861px;top:84px;width:1px;height:530px;background:#000"></div>
<svg class="a" style="left:841px;top:90px;" width="16" height="13" viewBox="0 0 16 13"><path d="M8 1.5 H1.5 V11.5 H8" fill="none" stroke="#e04a2a" stroke-width="1.3"/><path d="M8 1.5 H14.5 V11.5 H8" fill="none" stroke="#1f6fb8" stroke-width="1.3"/><path d="M2.5 4 H6.5 M2.5 6.5 H6.5 M2.5 9 H6.5" stroke="#e04a2a" stroke-width="1.1"/><path d="M9 4 H13.5 M9 6.5 H13.5 M9 9 H13.5" stroke="#1f6fb8" stroke-width="1.1"/></svg>
<svg class="a" style="left:861px;top:90px;" width="17" height="13" viewBox="0 0 17 13"><path d="M1.5 1 H4.5 V6 H6.5 V11.5 H1.5 Z" fill="#fbd8d0" stroke="#e04a2a" stroke-width="1.2"/><path d="M10 11.5 V5.5 H12.5 V1 H15.5 V11.5 Z" fill="#d0e6fa" stroke="#1f6fb8" stroke-width="1.2"/><rect x="7" y="0.7" width="4" height="2" rx="1" fill="none" stroke="#aaa" stroke-width="0.8"/></svg>
<div class="t" style="left:882.6px;top:90.0px;font-size:10px;line-height:13px;color:#000;letter-spacing:-0.25px">EURUSD, H1:  Euro vs US Dollar</div>
<div class="t" style="left:1702.5px;top:89.5px;font-size:10px;line-height:13px;color:#000;letter-spacing:-0.3px">Exp COPYLOT CLIENT for MT5</div>
<svg class="a" style="left:1842px;top:88px;" width="17" height="15" viewBox="0 0 17 15"><path d="M1 6 L8.5 2 L16 6 L8.5 10 Z" fill="#2f7fd0"/><path d="M4 8 V12 Q8.5 15 13 12 V8" fill="none" stroke="#2f7fd0" stroke-width="1.5"/><path d="M15 6 V11" stroke="#2f7fd0" stroke-width="1"/></svg>
<div class="a" style="left:1862px;top:106px;width:4px;height:1px;background:#000"></div>
<div class="t" style="left:1866px;top:100.0px;font-size:9.8px;line-height:13px;color:#000;letter-spacing:-0.3px">1.10700</div>
<div class="a" style="left:1380px;top:444px;width:1px;height:156px;background:#000"></div>
<div class="a" style="left:1377px;top:455px;width:5px;height:125px;background:#d9443a"></div>
<div class="a" style="left:1377px;top:460px;width:5px;height:1px;background:#1a7a7a"></div>
<div class="a" style="left:836px;top:613px;width:1px;height:5px;background:#000"></div>
<div class="t" style="left:836px;top:615.5px;font-size:9.8px;line-height:13px;color:#000;letter-spacing:-0.25px">3 Sep 2024</div>
<div class="a" style="left:900px;top:613px;width:1px;height:5px;background:#000"></div>
<div class="t" style="left:899.5px;top:615.5px;font-size:9.8px;line-height:13px;color:#000;letter-spacing:-0.25px">3 Sep 05:00</div>
<div class="a" style="left:964px;top:613px;width:1px;height:5px;background:#000"></div>
<div class="t" style="left:963.5px;top:615.5px;font-size:9.8px;line-height:13px;color:#000;letter-spacing:-0.25px">3 Sep 07:00</div>
<div class="a" style="left:1028px;top:613px;width:1px;height:5px;background:#000"></div>
<div class="t" style="left:1027.5px;top:615.5px;font-size:9.8px;line-height:13px;color:#000;letter-spacing:-0.25px">3 Sep 09:00</div>
<div class="a" style="left:1092px;top:613px;width:1px;height:5px;background:#000"></div>
<div class="t" style="left:1091.5px;top:615.5px;font-size:9.8px;line-height:13px;color:#000;letter-spacing:-0.25px">3 Sep 11:00</div>
<div class="a" style="left:1156px;top:613px;width:1px;height:5px;background:#000"></div>
<div class="t" style="left:1155.5px;top:615.5px;font-size:9.8px;line-height:13px;color:#000;letter-spacing:-0.25px">3 Sep 13:00</div>
<div class="a" style="left:1220px;top:613px;width:1px;height:5px;background:#000"></div>
<div class="t" style="left:1219.5px;top:615.5px;font-size:9.8px;line-height:13px;color:#000;letter-spacing:-0.25px">3 Sep 15:00</div>
<div class="a" style="left:1284px;top:613px;width:1px;height:5px;background:#000"></div>
<div class="t" style="left:1283.5px;top:615.5px;font-size:9.8px;line-height:13px;color:#000;letter-spacing:-0.25px">3 Sep 17:00</div>
<div class="a" style="left:1348px;top:613px;width:1px;height:5px;background:#000"></div>
<div class="t" style="left:1347.5px;top:615.5px;font-size:9.8px;line-height:13px;color:#000;letter-spacing:-0.25px">3 Sep 19:00</div>
<div class="a" style="left:833px;top:634px;width:1082px;height:24px;background:#f0f0f0"></div>
<div class="a" style="left:833px;top:636px;width:3px;height:1px;background:#111"></div>
<div class="a" style="left:920px;top:636px;width:995px;height:1px;background:#222"></div>
<div class="a" style="left:836px;top:636px;width:84px;height:19px;background:#fff;border:1px solid #111;border-top:none"></div>
<div class="t" style="left:847.2px;top:639.0px;font-size:10.4px;line-height:14px;color:#000;">EURUSD,H1</div>
<svg class="a" style="left:934px;top:639px;" width="13" height="14" viewBox="0 0 13 14"><path d="M1.5 5 H11.5 L12.5 13.5 H0.5 Z" fill="#f5c518" stroke="#d8a810" stroke-width="0.8"/><path d="M4 5.5 V3.5 Q6.5 0.5 9 3.5 V5.5" fill="none" stroke="#b08000" stroke-width="1.1"/></svg>
<div class="t" style="left:956.2px;top:639.0px;font-size:11px;line-height:14px;color:#6b6b6b;">Market - My Purchases</div>
<svg class="a" style="left:1879px;top:643px;" width="5" height="8" viewBox="0 0 5 8"><path d="M5 0 V8 L0 4 Z" fill="#b4b4b4"/></svg>
<svg class="a" style="left:1899px;top:643px;" width="5" height="8" viewBox="0 0 5 8"><path d="M0 0 V8 L5 4 Z" fill="#b4b4b4"/></svg>
<div class="a" style="left:833px;top:658px;width:1082px;height:1px;background:#d0d0d0"></div>
<div class="a" style="left:837px;top:101px;width:540px;height:513px;background:#00e5ff"></div>
<div class="a" style="left:839px;top:103px;width:536px;height:511px;background:#455a64"></div>
<div class="a" style="left:839px;top:103px;width:536px;height:19px;background:#1976d2"></div>
<div class="a" style="left:839px;top:122px;width:536px;height:50px;background:#2196f3"></div>
<div class="a" style="left:839px;top:172px;width:536px;height:2px;background:#263238"></div>
<div class="a" style="left:840px;top:104px;width:60px;height:14px;background:#1a73e8"></div>
<div class="t" style="left:470.0px;width:800px;top:104.0px;font-size:11.3px;line-height:15px;color:#fff;text-align:center;">Copylot</div>
<div class="a" style="left:840px;top:118px;width:60px;height:31px;background:#05050a"></div>
<svg class="a" style="left:840px;top:118px;" width="60" height="31" viewBox="0 0 60 31"><defs><radialGradient id="cgc" cx="50%" cy="35%" r="65%"><stop offset="0" stop-color="#fafafa"/><stop offset="0.6" stop-color="#c8c8c8"/><stop offset="1" stop-color="#8c8c8c"/></radialGradient></defs><path d="M9 27 C3 27 3 18 10 17.5 C9 11 16 8 21 11 C24 3 38 2 41 10 C46 7 54 11 52 18 C58 18 58 27 52 27 Z" fill="url(#cgc)" stroke="#05050a" stroke-width="1.5"/><path d="M22 10 Q27 11 29 16" fill="none" stroke="#f5a623" stroke-width="2.2"/><path d="M39 6 Q38 13 32 15" fill="none" stroke="#e53935" stroke-width="2.4"/><path d="M25 26 Q25 21 29 19" fill="none" stroke="#43a047" stroke-width="2.2"/><path d="M31 21 Q35 24 39 25" fill="none" stroke="#1e88e5" stroke-width="2"/><circle cx="30.5" cy="14" r="2.6" fill="#7fb2e0"/><path d="M26 21 Q30.5 14.5 35 21 Z" fill="#4a7fc0"/></svg>
<div class="a" style="left:840px;top:140.5px;width:22px;height:7.5px;background:#9c27f0"></div>
<div class="t" style="left:841px;top:140.3px;font-size:6px;line-height:8px;color:#f0d0ff;letter-spacing:-0.2px">CLIENT</div>
<div class="a" style="left:886px;top:140.5px;width:14px;height:7.5px;background:#2fa82f"></div>
<div class="t" style="left:887px;top:140.3px;font-size:6.5px;line-height:8px;color:#dfffdf;">MT5</div>
<div class="a" style="left:840px;top:149px;width:16px;height:15px;background:#4b1a8a"></div>
<div class="t" style="left:841px;top:149.0px;font-size:9.5px;line-height:12px;color:#00e5ff;font-weight:bold;letter-spacing:-0.3px">Ex</div>
<div class="t" style="left:851px;top:149.5px;font-size:9.5px;line-height:12px;color:#ffd600;font-weight:bold">p</div>
<div class="t" style="left:841px;top:158.5px;font-size:4.5px;line-height:6px;color:#c8b8ff;">FOREX</div>
<div class="a" style="left:856px;top:149px;width:44px;height:15px;background:#19708c"></div>
<div class="t" style="left:478.0px;width:800px;top:150.8px;font-size:9px;line-height:12px;color:#f0f0f0;text-align:center;letter-spacing:0.3px">COPIER</div>
<div class="t" style="left:924.3px;top:105.5px;font-size:12.5px;line-height:16px;color:#f4f6f7;">24.807 MT5</div>
<div class="t" style="left:1044.3px;top:105.5px;font-size:12.5px;line-height:16px;color:#f4f6f7;">FULL MQL5</div>
<div class="t" style="left:1164.3px;top:105.5px;font-size:12.5px;line-height:16px;color:#f4f6f7;">9.20ms</div>
<div class="a" style="left:1242px;top:104.5px;width:19px;height:17px;background:#37474f;border-radius:3px"></div>
<svg class="a" style="left:1245px;top:106.5px;" width="13" height="13" viewBox="0 0 13 13"><circle cx="6.5" cy="6.5" r="6.3" fill="none" stroke="#fff" stroke-width="1.4"/><text x="6.5" y="11.0" font-size="12" font-weight="bold" fill="#fff" text-anchor="middle" font-family="Liberation Serif">i</text></svg>
<div class="a" style="left:1278px;top:104.5px;width:19px;height:17px;background:#37474f;border-radius:3px"></div>
<div class="t" style="left:887.5px;width:800px;top:104.0px;font-size:14px;line-height:18px;color:#fff;text-align:center;">?</div>
<div class="a" style="left:1302px;top:104.5px;width:19px;height:17px;background:#37474f;border-radius:3px"></div>
<svg class="a" style="left:1305px;top:106.5px;" width="14" height="14" viewBox="0 0 14 14"><path d="M2 12 L11 3 M3 3 L12 12" stroke="#fff" stroke-width="2.2"/><path d="M9 1 L13 5 L11 6 L8 3 Z M1 1 L5 1 L5 4 L2 5 Z" fill="#fff"/></svg>
<div class="a" style="left:1334.5px;top:104.5px;width:18px;height:17px;background:#37474f;border-radius:3px"></div>
<div class="a" style="left:1339.5px;top:116.5px;width:8px;height:3px;background:#fff"></div>
<div class="a" style="left:1356px;top:104.5px;width:19px;height:17px;background:#37474f;border-radius:3px"></div>
<svg class="a" style="left:1359px;top:106.5px;" width="13" height="13" viewBox="0 0 13 13"><path d="M2 2 L11 11 M11 2 L2 11" stroke="#fff" stroke-width="2.6"/></svg>
<div class="a" style="left:1342px;top:131px;width:30px;height:30px;background:#00ff00"></div>
<svg class="a" style="left:1342px;top:131px;" width="30" height="30" viewBox="0 0 30 30"><circle cx="15.0" cy="15.0" r="9.9" fill="none" stroke="#000" stroke-width="1.6"/><circle cx="11.238" cy="12.03" r="1.5" fill="#000"/><circle cx="18.762" cy="12.03" r="1.5" fill="#000"/><path d="M9.555 16.485 Q15.0 23.415 20.445 16.485" fill="none" stroke="#000" stroke-width="1.6"/></svg>
<div class="t" style="left:923px;top:128.5px;font-size:19.1px;line-height:25px;color:#00e5ff;">EXP - COPYLOT CLIENT</div>
<div class="t" style="left:924.3px;top:153.6px;font-size:11.15px;line-height:14px;color:#f4f6f7;">EA WORKS EURUSD H1 DEMO HEDGE  #123</div>
<div class="a" style="left:840px;top:181px;width:534px;height:15px;background:#607d8b;border-radius:3px 3px 0 0"></div>
<div class="a" style="left:842px;top:196px;width:532px;height:2px;background:#263238"></div>
<div class="t" style="left:707.0px;width:800px;top:179.5px;font-size:11.7px;line-height:15px;color:#f4f6f7;text-align:center;">Extra Buttons</div>
<svg class="a" style="left:1357px;top:184px;" width="13" height="8" viewBox="0 0 13 8"><path d="M0 7.5 L6.5 0.5 L13 7.5 Z" fill="#fff"/></svg>
<div class="a" style="left:847px;top:209px;width:105px;height:24px;background:#607d8b;border-radius:3px"></div>
<div class="t" style="left:499.5px;width:800px;top:213.0px;font-size:12.35px;line-height:16px;color:#f4f6f7;text-align:center;">STOP Trading</div>
<div class="a" style="left:1062px;top:209px;width:105px;height:24px;background:#ffc107;border-bottom:2px solid #e0a000;border-right:2px solid #e0a000;border-left:2px solid #ffe83a"></div>
<div class="t" style="left:714px;width:800px;top:213.5px;font-size:11.7px;line-height:15px;color:#1a1a1a;text-align:center;">CLOSE All</div>
<div class="a" style="left:1267px;top:209px;width:100px;height:24px;background:#607d8b;border-radius:3px"></div>
<div class="t" style="left:917px;width:800px;top:213.0px;font-size:12.35px;line-height:16px;color:#f4f6f7;text-align:center;">MODIFY Only</div>
<div class="a" style="left:840px;top:241px;width:265px;height:15px;background:#607d8b;border-radius:3px 3px 0 0"></div>
<div class="a" style="left:842px;top:256px;width:263px;height:2px;background:#263238"></div>
<div class="t" style="left:572.5px;width:800px;top:239.0px;font-size:11.7px;line-height:15px;color:#f4f6f7;text-align:center;">Inputs Info</div>
<svg class="a" style="left:1088px;top:244px;" width="13" height="8" viewBox="0 0 13 8"><path d="M0 7.5 L6.5 0.5 L13 7.5 Z" fill="#fff"/></svg>
<div class="a" style="left:1110px;top:241px;width:264px;height:15px;background:#607d8b;border-radius:3px 3px 0 0"></div>
<div class="a" style="left:1112px;top:256px;width:262px;height:2px;background:#263238"></div>
<div class="t" style="left:842.0px;width:800px;top:239.0px;font-size:11.7px;line-height:15px;color:#f4f6f7;text-align:center;">Strategy Info</div>
<svg class="a" style="left:1357px;top:244px;" width="13" height="8" viewBox="0 0 13 8"><path d="M0 7.5 L6.5 0.5 L13 7.5 Z" fill="#fff"/></svg>
<div class="t" style="left:847px;top:267.9px;font-size:11.7px;line-height:15px;color:#f4f6f7;">Master Ready</div>
<div class="t" style="left:992px;top:267.9px;font-size:11.7px;line-height:15px;color:#f4f6f7;">OK</div>
<div class="t" style="left:1117px;top:267.9px;font-size:11.7px;line-height:15px;color:#f4f6f7;">Risk From Master</div>
<div class="t" style="left:1262px;top:267.9px;font-size:11.7px;line-height:15px;color:#f4f6f7;"> Lots 1:2.87</div>
<div class="t" style="left:847px;top:280.0px;font-size:11.7px;line-height:15px;color:#f4f6f7;">Closed Ms/Cl</div>
<div class="t" style="left:992px;top:280.0px;font-size:11.7px;line-height:15px;color:#f4f6f7;">330 / 330</div>
<div class="t" style="left:1117px;top:280.0px;font-size:11.7px;line-height:15px;color:#f4f6f7;">Opened Ms/Cl</div>
<div class="t" style="left:1262px;top:280.0px;font-size:11.7px;line-height:15px;color:#f4f6f7;">3 / 3</div>
<div class="t" style="left:847px;top:292.1px;font-size:11.7px;line-height:15px;color:#f4f6f7;">Master Balance</div>
<div class="t" style="left:992px;top:292.1px;font-size:11.7px;line-height:15px;color:#f4f6f7;">23875.26</div>
<div class="t" style="left:1117px;top:292.1px;font-size:11.7px;line-height:15px;color:#f4f6f7;">Master Account</div>
<div class="t" style="left:1262px;top:292.1px;font-size:11.7px;line-height:15px;color:#f4f6f7;">33170157</div>
<div class="t" style="left:847px;top:304.2px;font-size:11.7px;line-height:15px;color:#f4f6f7;">TimeCheckFile_Open</div>
<div class="t" style="left:992px;top:304.2px;font-size:11.7px;line-height:15px;color:#f4f6f7;">09:34:16</div>
<div class="t" style="left:1117px;top:304.2px;font-size:11.7px;line-height:15px;color:#f4f6f7;">TimeCheckFile_Close</div>
<div class="t" style="left:1262px;top:304.2px;font-size:11.7px;line-height:15px;color:#f4f6f7;">09:34:11</div>
<div class="a" style="left:847px;top:337px;width:520px;height:2px;background:#607d8b"></div>
<div class="t" style="left:847px;top:340.1px;font-size:11.7px;line-height:15px;color:#f4f6f7;">NamePath/Time</div>
<div class="t" style="left:992px;top:340.1px;font-size:11.7px;line-height:15px;color:#f4f6f7;">Copy / 500</div>
<div class="t" style="left:1117px;top:340.1px;font-size:11.7px;line-height:15px;color:#f4f6f7;">PreFix/Magic</div>
<div class="t" style="left:1262px;top:340.1px;font-size:11.7px;line-height:15px;color:#f4f6f7;">Auto() / 123</div>
<div class="t" style="left:847px;top:352.2px;font-size:11.7px;line-height:15px;color:#f4f6f7;">LotRiskFromMaster</div>
<div class="t" style="left:992px;top:352.2px;font-size:11.7px;line-height:15px;color:#f4f6f7;"></div>
<div class="t" style="left:1117px;top:352.2px;font-size:11.7px;line-height:15px;color:#f4f6f7;">Takeprofit/Stoploss</div>
<div class="t" style="left:1262px;top:352.2px;font-size:11.7px;line-height:15px;color:#2ee0a8;">ON / ON</div>
<div class="t" style="left:847px;top:364.2px;font-size:11.7px;line-height:15px;color:#f4f6f7;">Reverse/SLTP</div>
<div class="t" style="left:992px;top:364.2px;font-size:11.7px;line-height:15px;color:#f28b7a;">OFF</div>
<div class="t" style="left:1117px;top:364.2px;font-size:11.7px;line-height:15px;color:#f4f6f7;">Order/Position</div>
<div class="t" style="left:1262px;top:364.2px;font-size:11.7px;line-height:15px;color:#2ee0a8;">OFF / ON</div>
<div class="t" style="left:847px;top:376.2px;font-size:11.7px;line-height:15px;color:#f4f6f7;">Close/Reopen</div>
<div class="t" style="left:992px;top:376.2px;font-size:11.7px;line-height:15px;color:#2ee0a8;">ON / OFF</div>
<div class="t" style="left:1117px;top:376.2px;font-size:11.7px;line-height:15px;color:#f4f6f7;">NewTradeONLY/Filters</div>
<div class="t" style="left:1262px;top:376.2px;font-size:11.7px;line-height:15px;color:#f28b7a;">OFF</div>
<div class="a" style="left:840px;top:403px;width:534px;height:15px;background:#607d8b;border-radius:3px 3px 0 0"></div>
<div class="a" style="left:842px;top:418px;width:532px;height:2px;background:#263238"></div>
<div class="t" style="left:707.0px;width:800px;top:402.0px;font-size:11.7px;line-height:15px;color:#f4f6f7;text-align:center;">Table of deals</div>
<svg class="a" style="left:1357px;top:406.5px;" width="13" height="8" viewBox="0 0 13 8"><path d="M0 0.5 L6.5 7.5 L13 0.5 Z" fill="#fff"/></svg>
<div class="a" style="left:840px;top:427px;width:534px;height:15px;background:#607d8b;border-radius:3px 3px 0 0"></div>
<div class="a" style="left:842px;top:442px;width:532px;height:2px;background:#263238"></div>
<div class="t" style="left:707.0px;width:800px;top:425.8px;font-size:11.7px;line-height:15px;color:#f4f6f7;text-align:center;">Current Target  (All Symbols)  #123</div>
<svg class="a" style="left:1357px;top:430px;" width="13" height="8" viewBox="0 0 13 8"><path d="M0 7.5 L6.5 0.5 L13 7.5 Z" fill="#fff"/></svg>
<div class="t" style="left:847px;top:448.1px;font-size:11.7px;line-height:15px;color:#f4f6f7;">Lots SELL</div>
<div class="t" style="left:940px;top:448.1px;font-size:11.7px;line-height:15px;color:#f4f6f7;">0.00 (0)</div>
<div class="t" style="left:1117.6px;top:448.1px;font-size:11.7px;line-height:15px;color:#f4f6f7;">Lots BUY</div>
<div class="t" style="left:1226px;top:448.1px;font-size:11.7px;line-height:15px;color:#f28b7a;">12.34 (3)</div>
<div class="t" style="left:847px;top:460.1px;font-size:11.7px;line-height:15px;color:#f4f6f7;">Profit</div>
<div class="t" style="left:940px;top:460.1px;font-size:11.7px;line-height:15px;color:#f4f6f7;">0p (0.00€)</div>
<div class="t" style="left:1117.6px;top:460.1px;font-size:11.7px;line-height:15px;color:#f4f6f7;">Loss</div>
<div class="t" style="left:1226px;top:460.1px;font-size:11.7px;line-height:15px;color:#f28b7a;">-630p (-1060€)</div>
<div class="t" style="left:847px;top:472.1px;font-size:11.7px;line-height:15px;color:#f4f6f7;">Target SL</div>
<div class="t" style="left:940px;top:472.1px;font-size:11.7px;line-height:15px;color:#f4f6f7;">0p (0.00€)</div>
<div class="t" style="left:1117.6px;top:472.1px;font-size:11.7px;line-height:15px;color:#f4f6f7;">Target SL</div>
<div class="t" style="left:1226px;top:472.1px;font-size:11.7px;line-height:15px;color:#f28b7a;">-10315p (-37092€)</div>
<div class="t" style="left:847px;top:484.1px;font-size:11.7px;line-height:15px;color:#f4f6f7;">Target TP</div>
<div class="t" style="left:940px;top:484.1px;font-size:11.7px;line-height:15px;color:#f4f6f7;">0p (0.00€)</div>
<div class="t" style="left:1117.6px;top:484.1px;font-size:11.7px;line-height:15px;color:#f4f6f7;">Target TP</div>
<div class="t" style="left:1226px;top:484.1px;font-size:11.7px;line-height:15px;color:#2ee0a8;">1485p (5680€)</div>
<svg class="a" style="left:1311px;top:439px;" width="12" height="11" viewBox="0 0 12 11"><path d="M6 0.5 L11.5 5.5 H8.5 V10 H3.5 V5.5 H0.5 Z" fill="#1565c0" stroke="#fff" stroke-width="1"/></svg>
<div class="a" style="left:840px;top:505px;width:534px;height:15px;background:#607d8b;border-radius:3px 3px 0 0"></div>
<div class="a" style="left:842px;top:520px;width:532px;height:2px;background:#263238"></div>
<div class="t" style="left:707.0px;width:800px;top:504.0px;font-size:11.7px;line-height:15px;color:#f4f6f7;text-align:center;">Account Info</div>
<svg class="a" style="left:1357px;top:508px;" width="13" height="8" viewBox="0 0 13 8"><path d="M0 7.5 L6.5 0.5 L13 7.5 Z" fill="#fff"/></svg>
<div class="t" style="left:847px;top:526.2px;font-size:11.7px;line-height:15px;color:#f4f6f7;">Balance</div>
<div class="t" style="left:934.3px;top:526.2px;font-size:11.7px;line-height:15px;color:#f4f6f7;">342233.84€</div>
<div class="t" style="left:1117.6px;top:526.2px;font-size:11.7px;line-height:15px;color:#f4f6f7;">Equity</div>
<div class="t" style="left:1204px;top:526.2px;font-size:11.7px;line-height:15px;color:#f28b7a;">341173.88€</div>
<div class="t" style="left:847px;top:538.2px;font-size:11.7px;line-height:15px;color:#f4f6f7;">Free Marg</div>
<div class="t" style="left:934.3px;top:538.2px;font-size:11.7px;line-height:15px;color:#f4f6f7;">315708.26€</div>
<div class="t" style="left:1117.6px;top:538.2px;font-size:11.7px;line-height:15px;color:#f4f6f7;">Free Lots</div>
<div class="t" style="left:1204px;top:538.2px;font-size:11.7px;line-height:15px;color:#2ee0a8;">315.71/315.71</div>
<div class="t" style="left:847px;top:550.2px;font-size:11.7px;line-height:15px;color:#f4f6f7;">Loss</div>
<div class="t" style="left:934.3px;top:550.2px;font-size:11.7px;line-height:15px;color:#f28b7a;">-1059.96€</div>
<div class="t" style="left:1117.6px;top:550.2px;font-size:11.7px;line-height:15px;color:#f4f6f7;">DrawDown</div>
<div class="t" style="left:1204px;top:550.2px;font-size:11.7px;line-height:15px;color:#f28b7a;">-0.30972%</div>
<div class="a" style="left:840px;top:571px;width:534px;height:15px;background:#607d8b;border-radius:3px 3px 0 0"></div>
<div class="a" style="left:842px;top:586px;width:532px;height:2px;background:#263238"></div>
<div class="t" style="left:707.0px;width:800px;top:570.0px;font-size:11.7px;line-height:15px;color:#f4f6f7;text-align:center;">Profit by Date  (All Symbols)  #123</div>
<svg class="a" style="left:1357px;top:574.5px;" width="13" height="8" viewBox="0 0 13 8"><path d="M0 0.5 L6.5 7.5 L13 0.5 Z" fill="#fff"/></svg>
<div class="a" style="left:839px;top:587px;width:536px;height:26px;background:#263238"></div>
<div class="t" style="left:842.8px;top:591.9px;font-size:15px;line-height:20px;color:#00e5ff;letter-spacing:-0.8px">EA</div>
<div class="t" style="left:864.8px;top:591.9px;font-size:15px;line-height:20px;color:#2196f3;">Pad</div>
<div class="t" style="left:898.5px;top:589.5px;font-size:18.5px;line-height:24px;color:#ff4081;letter-spacing:-0.5px">PRO</div>
<div class="a" style="left:1067px;top:597px;width:40px;height:2px;background:#00e5ff"></div>
<div class="a" style="left:1077px;top:601px;width:40px;height:2px;background:#2196f3"></div>
<div class="a" style="left:1087px;top:605px;width:40px;height:2px;background:#ff4081"></div>
<div class="t" style="left:1199.5px;top:591.5px;font-size:16.4px;line-height:21px;color:#f4f6f7;">EXPFOREX 2008-2024</div>
<div class="a" style="left:833px;top:659px;width:1082px;height:316px;background:#f0f0f0"></div>
<div class="a" style="left:833px;top:660px;width:14px;height:25px;background:#fafafa"></div>
<svg class="a" style="left:835px;top:662px;" width="8" height="8" viewBox="0 0 8 8"><path d="M1 1 L7 7 M7 1 L1 7" stroke="#000" stroke-width="1.5"/></svg>
<div class="a" style="left:833px;top:674px;width:13px;height:297px;background:#c9dbef"></div>
<svg class="a" style="left:833px;top:925px;" width="14" height="48" viewBox="0 0 14 48"><text transform="translate(11,45) rotate(-90)" font-size="10.8" fill="#10182a" font-family="Liberation Sans">Toolbox</text></svg>
<div class="a" style="left:847px;top:660px;width:1048px;height:285px;background:#fff"></div>
<div class="a" style="left:847px;top:660px;width:1048px;height:25px;background:linear-gradient(#ffffff,#f7f7f7)"></div>
<div class="a" style="left:925px;top:662px;width:1px;height:23px;background:#e0e0e0"></div>
<div class="a" style="left:979px;top:662px;width:1px;height:23px;background:#e0e0e0"></div>
<div class="a" style="left:1021px;top:662px;width:1px;height:23px;background:#e0e0e0"></div>
<div class="a" style="left:1057px;top:662px;width:1px;height:23px;background:#e0e0e0"></div>
<div class="a" style="left:1117px;top:662px;width:1px;height:23px;background:#e0e0e0"></div>
<div class="a" style="left:1178px;top:662px;width:1px;height:23px;background:#e0e0e0"></div>
<div class="a" style="left:1237px;top:662px;width:1px;height:23px;background:#e0e0e0"></div>
<div class="a" style="left:1298px;top:662px;width:1px;height:23px;background:#e0e0e0"></div>
<div class="a" style="left:1387px;top:662px;width:1px;height:23px;background:#e0e0e0"></div>
<div class="a" style="left:1447px;top:662px;width:1px;height:23px;background:#e0e0e0"></div>
<div class="a" style="left:1507px;top:662px;width:1px;height:23px;background:#e0e0e0"></div>
<div class="a" style="left:1567px;top:662px;width:1px;height:23px;background:#e0e0e0"></div>
<div class="a" style="left:1627px;top:662px;width:1px;height:23px;background:#e0e0e0"></div>
<div class="a" style="left:1694px;top:662px;width:1px;height:23px;background:#e0e0e0"></div>
<div class="a" style="left:1759px;top:662px;width:1px;height:23px;background:#e0e0e0"></div>
<div class="a" style="left:1894px;top:662px;width:1px;height:23px;background:#e0e0e0"></div>
<div class="a" style="left:847px;top:685px;width:1048px;height:1px;background:#e0e0e0"></div>
<div class="t" style="left:854.6px;top:666.0px;font-size:11.1px;line-height:14px;color:#000;">Time</div>
<svg class="a" style="left:897px;top:670px;" width="9" height="6" viewBox="0 0 9 6"><path d="M0.5 5.5 L4.5 0.5 L8.5 5.5 Z" fill="#111"/></svg>
<div class="t" style="right:941.5px;top:666.0px;font-size:11.1px;line-height:14px;color:#000;text-align:right;">Symbol</div>
<div class="t" style="left:986.7px;top:666.0px;font-size:11.1px;line-height:14px;color:#000;">Tick...</div>
<div class="t" style="right:863px;top:666.0px;font-size:11.1px;line-height:14px;color:#000;text-align:right;">Type</div>
<div class="t" style="right:803.3px;top:666.0px;font-size:11.1px;line-height:14px;color:#000;text-align:right;">Volume</div>
<div class="t" style="right:743px;top:666.0px;font-size:11.1px;line-height:14px;color:#000;text-align:right;">Price</div>
<div class="t" style="right:684px;top:666.0px;font-size:11.1px;line-height:14px;color:#000;text-align:right;">S / L</div>
<div class="t" style="right:623.3px;top:666.0px;font-size:11.1px;line-height:14px;color:#000;text-align:right;">T / P</div>
<div class="t" style="right:533px;top:666.0px;font-size:11.1px;line-height:14px;color:#000;text-align:right;">Time</div>
<div class="t" style="right:473px;top:666.0px;font-size:11.1px;line-height:14px;color:#000;text-align:right;">Price</div>
<div class="t" style="left:1456.5px;top:666.0px;font-size:11.1px;line-height:14px;color:#000;">Comm...</div>
<div class="t" style="right:353px;top:666.0px;font-size:11.1px;line-height:14px;color:#000;text-align:right;">Fee</div>
<div class="t" style="right:293px;top:666.0px;font-size:11.1px;line-height:14px;color:#000;text-align:right;">Swap</div>
<div class="t" style="right:227.5px;top:666.0px;font-size:11.1px;line-height:14px;color:#000;text-align:right;">Profit</div>
<div class="t" style="right:161px;top:666.0px;font-size:11.1px;line-height:14px;color:#000;text-align:right;">Change</div>
<div class="t" style="right:26px;top:666.0px;font-size:11.1px;line-height:14px;color:#000;text-align:right;">Comment</div>
<div class="a" style="left:847px;top:685px;width:1048px;height:20px;background:#ffffff"></div>
<div class="a" style="left:1237px;top:685px;width:60px;height:19px;background:#55e055"></div>
<div class="a" style="left:925px;top:685px;width:1px;height:20px;background:#d4d4d4"></div>
<div class="a" style="left:979px;top:685px;width:1px;height:20px;background:#d4d4d4"></div>
<div class="a" style="left:1021px;top:685px;width:1px;height:20px;background:#d4d4d4"></div>
<div class="a" style="left:1057px;top:685px;width:1px;height:20px;background:#d4d4d4"></div>
<div class="a" style="left:1117px;top:685px;width:1px;height:20px;background:#d4d4d4"></div>
<div class="a" style="left:1178px;top:685px;width:1px;height:20px;background:#d4d4d4"></div>
<div class="a" style="left:1237px;top:685px;width:1px;height:20px;background:#d4d4d4"></div>
<div class="a" style="left:1298px;top:685px;width:1px;height:20px;background:#d4d4d4"></div>
<div class="a" style="left:1387px;top:685px;width:1px;height:20px;background:#d4d4d4"></div>
<div class="a" style="left:1447px;top:685px;width:1px;height:20px;background:#d4d4d4"></div>
<div class="a" style="left:1507px;top:685px;width:1px;height:20px;background:#d4d4d4"></div>
<div class="a" style="left:1567px;top:685px;width:1px;height:20px;background:#d4d4d4"></div>
<div class="a" style="left:1627px;top:685px;width:1px;height:20px;background:#d4d4d4"></div>
<div class="a" style="left:1694px;top:685px;width:1px;height:20px;background:#d4d4d4"></div>
<div class="a" style="left:1759px;top:685px;width:1px;height:20px;background:#d4d4d4"></div>
<div class="a" style="left:1894px;top:685px;width:1px;height:20px;background:#d4d4d4"></div>
<div class="a" style="left:847px;top:704px;width:1048px;height:1px;background:#d4d4d4"></div>
<svg class="a" style="left:851px;top:687px;" width="12" height="17" viewBox="0 0 12 17"><rect x="1.2" y="1.5" width="9.6" height="13.5" rx="2" fill="#fff" stroke="#e04030" stroke-width="1.3"/><path d="M5 5 H7.5 M5 7.8 H7.5" stroke="#e04030" stroke-width="1.1"/></svg>
<div class="t" style="left:868.7px;top:688.0px;font-size:11.1px;line-height:14px;color:#000;">2024.08....</div>
<div class="t" style="right:939.7px;top:688.0px;font-size:11.1px;line-height:14px;color:#000;text-align:right;">xauusd</div>
<div class="t" style="left:985px;top:688.0px;font-size:11.1px;line-height:14px;color:#000;">2794...</div>
<div class="t" style="right:861.5px;top:688.0px;font-size:11.1px;line-height:14px;color:#000;text-align:right;">sell</div>
<div class="t" style="right:801.3px;top:688.0px;font-size:11.1px;line-height:14px;color:#000;text-align:right;">14.03</div>
<div class="t" style="right:741.5px;top:688.0px;font-size:11.1px;line-height:14px;color:#000;text-align:right;">2514.86</div>
<div class="t" style="right:681.5px;top:688.0px;font-size:11.1px;line-height:14px;color:#000;text-align:right;">2550.69</div>
<div class="t" style="right:621.2px;top:688.0px;font-size:11.1px;line-height:14px;color:#000;text-align:right;">2508.00</div>
<div class="t" style="right:531.3px;top:688.0px;font-size:11.1px;line-height:14px;color:#000;text-align:right;">2024.08.29 15:...</div>
<div class="t" style="right:471.29999999999995px;top:688.0px;font-size:11.1px;line-height:14px;color:#000;text-align:right;">2508.00</div>
<div class="t" style="right:225.4000000000001px;top:688.0px;font-size:11.1px;line-height:14px;color:#1414f0;text-align:right;">8 683.94</div>
<div class="t" style="right:159.29999999999995px;top:688.0px;font-size:11.1px;line-height:14px;color:#1414f0;text-align:right;">0.27 %</div>
<div class="t" style="right:24.5px;top:688.0px;font-size:11.1px;line-height:14px;color:#000;text-align:right;">232773343</div>
<div class="a" style="left:847px;top:705px;width:1048px;height:20px;background:#ebebeb"></div>
<div class="a" style="left:1237px;top:705px;width:60px;height:19px;background:#55e055"></div>
<div class="a" style="left:925px;top:705px;width:1px;height:20px;background:#d4d4d4"></div>
<div class="a" style="left:979px;top:705px;width:1px;height:20px;background:#d4d4d4"></div>
<div class="a" style="left:1021px;top:705px;width:1px;height:20px;background:#d4d4d4"></div>
<div class="a" style="left:1057px;top:705px;width:1px;height:20px;background:#d4d4d4"></div>
<div class="a" style="left:1117px;top:705px;width:1px;height:20px;background:#d4d4d4"></div>
<div class="a" style="left:1178px;top:705px;width:1px;height:20px;background:#d4d4d4"></div>
<div class="a" style="left:1237px;top:705px;width:1px;height:20px;background:#d4d4d4"></div>
<div class="a" style="left:1298px;top:705px;width:1px;height:20px;background:#d4d4d4"></div>
<div class="a" style="left:1387px;top:705px;width:1px;height:20px;background:#d4d4d4"></div>
<div class="a" style="left:1447px;top:705px;width:1px;height:20px;background:#d4d4d4"></div>
<div class="a" style="left:1507px;top:705px;width:1px;height:20px;background:#d4d4d4"></div>
<div class="a" style="left:1567px;top:705px;width:1px;height:20px;background:#d4d4d4"></div>
<div class="a" style="left:1627px;top:705px;width:1px;height:20px;background:#d4d4d4"></div>
<div class="a" style="left:1694px;top:705px;width:1px;height:20px;background:#d4d4d4"></div>
<div class="a" style="left:1759px;top:705px;width:1px;height:20px;background:#d4d4d4"></div>
<div class="a" style="left:1894px;top:705px;width:1px;height:20px;background:#d4d4d4"></div>
<div class="a" style="left:847px;top:724px;width:1048px;height:1px;background:#d4d4d4"></div>
<svg class="a" style="left:851px;top:707px;" width="12" height="17" viewBox="0 0 12 17"><rect x="1.2" y="1.5" width="9.6" height="13.5" rx="2" fill="#fff" stroke="#e04030" stroke-width="1.3"/><path d="M5 5 H7.5 M5 7.8 H7.5" stroke="#e04030" stroke-width="1.1"/></svg>
<div class="t" style="left:868.7px;top:708.0px;font-size:11.1px;line-height:14px;color:#000;">2024.08....</div>
<div class="t" style="right:939.7px;top:708.0px;font-size:11.1px;line-height:14px;color:#000;text-align:right;">xauusd</div>
<div class="t" style="left:985px;top:708.0px;font-size:11.1px;line-height:14px;color:#000;">2794...</div>
<div class="t" style="right:861.5px;top:708.0px;font-size:11.1px;line-height:14px;color:#000;text-align:right;">sell</div>
<div class="t" style="right:801.3px;top:708.0px;font-size:11.1px;line-height:14px;color:#000;text-align:right;">14.03</div>
<div class="t" style="right:741.5px;top:708.0px;font-size:11.1px;line-height:14px;color:#000;text-align:right;">2517.53</div>
<div class="t" style="right:681.5px;top:708.0px;font-size:11.1px;line-height:14px;color:#000;text-align:right;">2553.26</div>
<div class="t" style="right:621.2px;top:708.0px;font-size:11.1px;line-height:14px;color:#000;text-align:right;">2508.00</div>
<div class="t" style="right:531.3px;top:708.0px;font-size:11.1px;line-height:14px;color:#000;text-align:right;">2024.08.29 15:...</div>
<div class="t" style="right:471.29999999999995px;top:708.0px;font-size:11.1px;line-height:14px;color:#000;text-align:right;">2508.00</div>
<div class="t" style="right:225.4000000000001px;top:708.0px;font-size:11.1px;line-height:14px;color:#1414f0;text-align:right;">12 063.84</div>
<div class="t" style="right:159.29999999999995px;top:708.0px;font-size:11.1px;line-height:14px;color:#1414f0;text-align:right;">0.38 %</div>
<div class="t" style="right:24.5px;top:708.0px;font-size:11.1px;line-height:14px;color:#000;text-align:right;">232786248</div>
<div class="a" style="left:847px;top:725px;width:1048px;height:20px;background:#ffffff"></div>
<div class="a" style="left:925px;top:725px;width:1px;height:20px;background:#d4d4d4"></div>
<div class="a" style="left:979px;top:725px;width:1px;height:20px;background:#d4d4d4"></div>
<div class="a" style="left:1021px;top:725px;width:1px;height:20px;background:#d4d4d4"></div>
<div class="a" style="left:1057px;top:725px;width:1px;height:20px;background:#d4d4d4"></div>
<div class="a" style="left:1117px;top:725px;width:1px;height:20px;background:#d4d4d4"></div>
<div class="a" style="left:1178px;top:725px;width:1px;height:20px;background:#d4d4d4"></div>
<div class="a" style="left:1237px;top:725px;width:1px;height:20px;background:#d4d4d4"></div>
<div class="a" style="left:1298px;top:725px;width:1px;height:20px;background:#d4d4d4"></div>
<div class="a" style="left:1387px;top:725px;width:1px;height:20px;background:#d4d4d4"></div>
<div class="a" style="left:1447px;top:725px;width:1px;height:20px;background:#d4d4d4"></div>
<div class="a" style="left:1507px;top:725px;width:1px;height:20px;background:#d4d4d4"></div>
<div class="a" style="left:1567px;top:725px;width:1px;height:20px;background:#d4d4d4"></div>
<div class="a" style="left:1627px;top:725px;width:1px;height:20px;background:#d4d4d4"></div>
<div class="a" style="left:1694px;top:725px;width:1px;height:20px;background:#d4d4d4"></div>
<div class="a" style="left:1759px;top:725px;width:1px;height:20px;background:#d4d4d4"></div>
<div class="a" style="left:1894px;top:725px;width:1px;height:20px;background:#d4d4d4"></div>
<div class="a" style="left:847px;top:744px;width:1048px;height:1px;background:#d4d4d4"></div>
<svg class="a" style="left:851px;top:727px;" width="12" height="17" viewBox="0 0 12 17"><rect x="1.2" y="1.5" width="9.6" height="13.5" rx="2" fill="#fff" stroke="#e04030" stroke-width="1.3"/><path d="M5 5 H7.5 M5 7.8 H7.5" stroke="#e04030" stroke-width="1.1"/></svg>
<div class="t" style="left:868.7px;top:728.0px;font-size:11.1px;line-height:14px;color:#000;">2024.08....</div>
<div class="t" style="right:939.7px;top:728.0px;font-size:11.1px;line-height:14px;color:#000;text-align:right;">usdjpy</div>
<div class="t" style="left:985px;top:728.0px;font-size:11.1px;line-height:14px;color:#000;">2796...</div>
<div class="t" style="right:861.5px;top:728.0px;font-size:11.1px;line-height:14px;color:#000;text-align:right;">sell</div>
<div class="t" style="right:801.3px;top:728.0px;font-size:11.1px;line-height:14px;color:#000;text-align:right;">33.96</div>
<div class="t" style="right:741.5px;top:728.0px;font-size:11.1px;line-height:14px;color:#000;text-align:right;">145.411</div>
<div class="t" style="right:681.5px;top:728.0px;font-size:11.1px;line-height:14px;color:#000;text-align:right;">149.136</div>
<div class="t" style="right:621.2px;top:728.0px;font-size:11.1px;line-height:14px;color:#000;text-align:right;">144.834</div>
<div class="t" style="right:531.3px;top:728.0px;font-size:11.1px;line-height:14px;color:#000;text-align:right;">2024.09.04 02:...</div>
<div class="t" style="right:471.29999999999995px;top:728.0px;font-size:11.1px;line-height:14px;color:#000;text-align:right;">145.157</div>
<div class="t" style="right:291.4000000000001px;top:728.0px;font-size:11.1px;line-height:14px;color:#e82020;text-align:right;">-50.49</div>
<div class="t" style="right:225.4000000000001px;top:728.0px;font-size:11.1px;line-height:14px;color:#1414f0;text-align:right;">5 378.71</div>
<div class="t" style="right:159.29999999999995px;top:728.0px;font-size:11.1px;line-height:14px;color:#1414f0;text-align:right;">0.17 %</div>
<div class="t" style="right:24.5px;top:728.0px;font-size:11.1px;line-height:14px;color:#000;text-align:right;">232849879</div>
<div class="a" style="left:847px;top:745px;width:1048px;height:20px;background:#ebebeb"></div>
<div class="a" style="left:1237px;top:745px;width:60px;height:19px;background:#55e055"></div>
<div class="a" style="left:925px;top:745px;width:1px;height:20px;background:#d4d4d4"></div>
<div class="a" style="left:979px;top:745px;width:1px;height:20px;background:#d4d4d4"></div>
<div class="a" style="left:1021px;top:745px;width:1px;height:20px;background:#d4d4d4"></div>
<div class="a" style="left:1057px;top:745px;width:1px;height:20px;background:#d4d4d4"></div>
<div class="a" style="left:1117px;top:745px;width:1px;height:20px;background:#d4d4d4"></div>
<div class="a" style="left:1178px;top:745px;width:1px;height:20px;background:#d4d4d4"></div>
<div class="a" style="left:1237px;top:745px;width:1px;height:20px;background:#d4d4d4"></div>
<div class="a" style="left:1298px;top:745px;width:1px;height:20px;background:#d4d4d4"></div>
<div class="a" style="left:1387px;top:745px;width:1px;height:20px;background:#d4d4d4"></div>
<div class="a" style="left:1447px;top:745px;width:1px;height:20px;background:#d4d4d4"></div>
<div class="a" style="left:1507px;top:745px;width:1px;height:20px;background:#d4d4d4"></div>
<div class="a" style="left:1567px;top:745px;width:1px;height:20px;background:#d4d4d4"></div>
<div class="a" style="left:1627px;top:745px;width:1px;height:20px;background:#d4d4d4"></div>
<div class="a" style="left:1694px;top:745px;width:1px;height:20px;background:#d4d4d4"></div>
<div class="a" style="left:1759px;top:745px;width:1px;height:20px;background:#d4d4d4"></div>
<div class="a" style="left:1894px;top:745px;width:1px;height:20px;background:#d4d4d4"></div>
<div class="a" style="left:847px;top:764px;width:1048px;height:1px;background:#d4d4d4"></div>
<svg class="a" style="left:851px;top:747px;" width="12" height="17" viewBox="0 0 12 17"><rect x="1.2" y="1.5" width="9.6" height="13.5" rx="2" fill="#fff" stroke="#e04030" stroke-width="1.3"/><path d="M5 5 H7.5 M5 7.8 H7.5" stroke="#e04030" stroke-width="1.1"/></svg>
<div class="t" style="left:868.7px;top:748.0px;font-size:11.1px;line-height:14px;color:#000;">2024.08....</div>
<div class="t" style="right:939.7px;top:748.0px;font-size:11.1px;line-height:14px;color:#000;text-align:right;">xauusd</div>
<div class="t" style="left:985px;top:748.0px;font-size:11.1px;line-height:14px;color:#000;">2798...</div>
<div class="t" style="right:861.5px;top:748.0px;font-size:11.1px;line-height:14px;color:#000;text-align:right;">sell</div>
<div class="t" style="right:801.3px;top:748.0px;font-size:11.1px;line-height:14px;color:#000;text-align:right;">13.16</div>
<div class="t" style="right:741.5px;top:748.0px;font-size:11.1px;line-height:14px;color:#000;text-align:right;">2519.79</div>
<div class="t" style="right:681.5px;top:748.0px;font-size:11.1px;line-height:14px;color:#000;text-align:right;">2565.77</div>
<div class="t" style="right:621.2px;top:748.0px;font-size:11.1px;line-height:14px;color:#000;text-align:right;">2514.83</div>
<div class="t" style="right:531.3px;top:748.0px;font-size:11.1px;line-height:14px;color:#000;text-align:right;">2024.08.30 04:...</div>
<div class="t" style="right:471.29999999999995px;top:748.0px;font-size:11.1px;line-height:14px;color:#000;text-align:right;">2514.83</div>
<div class="t" style="right:225.4000000000001px;top:748.0px;font-size:11.1px;line-height:14px;color:#1414f0;text-align:right;">5 893.03</div>
<div class="t" style="right:159.29999999999995px;top:748.0px;font-size:11.1px;line-height:14px;color:#1414f0;text-align:right;">0.20 %</div>
<div class="t" style="right:24.5px;top:748.0px;font-size:11.1px;line-height:14px;color:#000;text-align:right;">232875810</div>
<div class="a" style="left:847px;top:765px;width:1048px;height:20px;background:#ffffff"></div>
<div class="a" style="left:925px;top:765px;width:1px;height:20px;background:#d4d4d4"></div>
<div class="a" style="left:979px;top:765px;width:1px;height:20px;background:#d4d4d4"></div>
<div class="a" style="left:1021px;top:765px;width:1px;height:20px;background:#d4d4d4"></div>
<div class="a" style="left:1057px;top:765px;width:1px;height:20px;background:#d4d4d4"></div>
<div class="a" style="left:1117px;top:765px;width:1px;height:20px;background:#d4d4d4"></div>
<div class="a" style="left:1178px;top:765px;width:1px;height:20px;background:#d4d4d4"></div>
<div class="a" style="left:1237px;top:765px;width:1px;height:20px;background:#d4d4d4"></div>
<div class="a" style="left:1298px;top:765px;width:1px;height:20px;background:#d4d4d4"></div>
<div class="a" style="left:1387px;top:765px;width:1px;height:20px;background:#d4d4d4"></div>
<div class="a" style="left:1447px;top:765px;width:1px;height:20px;background:#d4d4d4"></div>
<div class="a" style="left:1507px;top:765px;width:1px;height:20px;background:#d4d4d4"></div>
<div class="a" style="left:1567px;top:765px;width:1px;height:20px;background:#d4d4d4"></div>
<div class="a" style="left:1627px;top:765px;width:1px;height:20px;background:#d4d4d4"></div>
<div class="a" style="left:1694px;top:765px;width:1px;height:20px;background:#d4d4d4"></div>
<div class="a" style="left:1759px;top:765px;width:1px;height:20px;background:#d4d4d4"></div>
<div class="a" style="left:1894px;top:765px;width:1px;height:20px;background:#d4d4d4"></div>
<div class="a" style="left:847px;top:784px;width:1048px;height:1px;background:#d4d4d4"></div>
<svg class="a" style="left:851px;top:767px;" width="12" height="17" viewBox="0 0 12 17"><rect x="1.2" y="1.5" width="9.6" height="13.5" rx="2" fill="#fff" stroke="#e04030" stroke-width="1.3"/><path d="M5 5 H7.5 M5 7.8 H7.5" stroke="#e04030" stroke-width="1.1"/></svg>
<div class="t" style="left:868.7px;top:768.0px;font-size:11.1px;line-height:14px;color:#000;">2024.08....</div>
<div class="t" style="right:939.7px;top:768.0px;font-size:11.1px;line-height:14px;color:#000;text-align:right;">xauusd</div>
<div class="t" style="left:985px;top:768.0px;font-size:11.1px;line-height:14px;color:#000;">2798...</div>
<div class="t" style="right:861.5px;top:768.0px;font-size:11.1px;line-height:14px;color:#000;text-align:right;">sell</div>
<div class="t" style="right:801.3px;top:768.0px;font-size:11.1px;line-height:14px;color:#000;text-align:right;">14.21</div>
<div class="t" style="right:741.5px;top:768.0px;font-size:11.1px;line-height:14px;color:#000;text-align:right;">2514.69</div>
<div class="t" style="right:681.5px;top:768.0px;font-size:11.1px;line-height:14px;color:#000;text-align:right;">2514.27</div>
<div class="t" style="right:621.2px;top:768.0px;font-size:11.1px;line-height:14px;color:#000;text-align:right;">2510.06</div>
<div class="t" style="right:531.3px;top:768.0px;font-size:11.1px;line-height:14px;color:#000;text-align:right;">2024.08.30 08:...</div>
<div class="t" style="right:471.29999999999995px;top:768.0px;font-size:11.1px;line-height:14px;color:#000;text-align:right;">2514.16</div>
<div class="t" style="right:225.4000000000001px;top:768.0px;font-size:11.1px;line-height:14px;color:#1414f0;text-align:right;">679.84</div>
<div class="t" style="right:159.29999999999995px;top:768.0px;font-size:11.1px;line-height:14px;color:#1414f0;text-align:right;">0.02 %</div>
<div class="t" style="right:24.5px;top:768.0px;font-size:11.1px;line-height:14px;color:#000;text-align:right;">232915857</div>
<div class="a" style="left:847px;top:785px;width:1048px;height:20px;background:#ebebeb"></div>
<div class="a" style="left:925px;top:785px;width:1px;height:20px;background:#d4d4d4"></div>
<div class="a" style="left:979px;top:785px;width:1px;height:20px;background:#d4d4d4"></div>
<div class="a" style="left:1021px;top:785px;width:1px;height:20px;background:#d4d4d4"></div>
<div class="a" style="left:1057px;top:785px;width:1px;height:20px;background:#d4d4d4"></div>
<div class="a" style="left:1117px;top:785px;width:1px;height:20px;background:#d4d4d4"></div>
<div class="a" style="left:1178px;top:785px;width:1px;height:20px;background:#d4d4d4"></div>
<div class="a" style="left:1237px;top:785px;width:1px;height:20px;background:#d4d4d4"></div>
<div class="a" style="left:1298px;top:785px;width:1px;height:20px;background:#d4d4d4"></div>
<div class="a" style="left:1387px;top:785px;width:1px;height:20px;background:#d4d4d4"></div>
<div class="a" style="left:1447px;top:785px;width:1px;height:20px;background:#d4d4d4"></div>
<div class="a" style="left:1507px;top:785px;width:1px;height:20px;background:#d4d4d4"></div>
<div class="a" style="left:1567px;top:785px;width:1px;height:20px;background:#d4d4d4"></div>
<div class="a" style="left:1627px;top:785px;width:1px;height:20px;background:#d4d4d4"></div>
<div class="a" style="left:1694px;top:785px;width:1px;height:20px;background:#d4d4d4"></div>
<div class="a" style="left:1759px;top:785px;width:1px;height:20px;background:#d4d4d4"></div>
<div class="a" style="left:1894px;top:785px;width:1px;height:20px;background:#d4d4d4"></div>
<div class="a" style="left:847px;top:804px;width:1048px;height:1px;background:#d4d4d4"></div>
<svg class="a" style="left:851px;top:787px;" width="12" height="17" viewBox="0 0 12 17"><rect x="1.2" y="1.5" width="9.6" height="13.5" rx="2" fill="#fff" stroke="#2f7fd0" stroke-width="1.3"/><path d="M5 5 H7.5 M5 7.8 H7.5" stroke="#2f7fd0" stroke-width="1.1"/></svg>
<div class="t" style="left:868.7px;top:788.0px;font-size:11.1px;line-height:14px;color:#000;">2024.08....</div>
<div class="t" style="right:939.7px;top:788.0px;font-size:11.1px;line-height:14px;color:#000;text-align:right;">xauusd</div>
<div class="t" style="left:985px;top:788.0px;font-size:11.1px;line-height:14px;color:#000;">2799...</div>
<div class="t" style="right:861.5px;top:788.0px;font-size:11.1px;line-height:14px;color:#000;text-align:right;">buy</div>
<div class="t" style="right:801.3px;top:788.0px;font-size:11.1px;line-height:14px;color:#000;text-align:right;">13.66</div>
<div class="t" style="right:741.5px;top:788.0px;font-size:11.1px;line-height:14px;color:#000;text-align:right;">2519.28</div>
<div class="t" style="right:681.5px;top:788.0px;font-size:11.1px;line-height:14px;color:#000;text-align:right;">2520.02</div>
<div class="t" style="right:621.2px;top:788.0px;font-size:11.1px;line-height:14px;color:#000;text-align:right;">2523.63</div>
<div class="t" style="right:531.3px;top:788.0px;font-size:11.1px;line-height:14px;color:#000;text-align:right;">2024.08.30 09:...</div>
<div class="t" style="right:471.29999999999995px;top:788.0px;font-size:11.1px;line-height:14px;color:#000;text-align:right;">2520.17</div>
<div class="t" style="right:225.4000000000001px;top:788.0px;font-size:11.1px;line-height:14px;color:#1414f0;text-align:right;">1 097.61</div>
<div class="t" style="right:159.29999999999995px;top:788.0px;font-size:11.1px;line-height:14px;color:#1414f0;text-align:right;">0.04 %</div>
<div class="t" style="right:24.5px;top:788.0px;font-size:11.1px;line-height:14px;color:#000;text-align:right;">232918584</div>
<div class="a" style="left:847px;top:805px;width:1048px;height:20px;background:#ffffff"></div>
<div class="a" style="left:1177px;top:805px;width:60px;height:19px;background:#f4a2a2"></div>
<div class="a" style="left:925px;top:805px;width:1px;height:20px;background:#d4d4d4"></div>
<div class="a" style="left:979px;top:805px;width:1px;height:20px;background:#d4d4d4"></div>
<div class="a" style="left:1021px;top:805px;width:1px;height:20px;background:#d4d4d4"></div>
<div class="a" style="left:1057px;top:805px;width:1px;height:20px;background:#d4d4d4"></div>
<div class="a" style="left:1117px;top:805px;width:1px;height:20px;background:#d4d4d4"></div>
<div class="a" style="left:1178px;top:805px;width:1px;height:20px;background:#d4d4d4"></div>
<div class="a" style="left:1237px;top:805px;width:1px;height:20px;background:#d4d4d4"></div>
<div class="a" style="left:1298px;top:805px;width:1px;height:20px;background:#d4d4d4"></div>
<div class="a" style="left:1387px;top:805px;width:1px;height:20px;background:#d4d4d4"></div>
<div class="a" style="left:1447px;top:805px;width:1px;height:20px;background:#d4d4d4"></div>
<div class="a" style="left:1507px;top:805px;width:1px;height:20px;background:#d4d4d4"></div>
<div class="a" style="left:1567px;top:805px;width:1px;height:20px;background:#d4d4d4"></div>
<div class="a" style="left:1627px;top:805px;width:1px;height:20px;background:#d4d4d4"></div>
<div class="a" style="left:1694px;top:805px;width:1px;height:20px;background:#d4d4d4"></div>
<div class="a" style="left:1759px;top:805px;width:1px;height:20px;background:#d4d4d4"></div>
<div class="a" style="left:1894px;top:805px;width:1px;height:20px;background:#d4d4d4"></div>
<div class="a" style="left:847px;top:824px;width:1048px;height:1px;background:#d4d4d4"></div>
<svg class="a" style="left:851px;top:807px;" width="12" height="17" viewBox="0 0 12 17"><rect x="1.2" y="1.5" width="9.6" height="13.5" rx="2" fill="#fff" stroke="#2f7fd0" stroke-width="1.3"/><path d="M5 5 H7.5 M5 7.8 H7.5" stroke="#2f7fd0" stroke-width="1.1"/></svg>
<div class="t" style="left:868.7px;top:808.0px;font-size:11.1px;line-height:14px;color:#000;">2024.08....</div>
<div class="t" style="right:939.7px;top:808.0px;font-size:11.1px;line-height:14px;color:#000;text-align:right;">xauusd</div>
<div class="t" style="left:985px;top:808.0px;font-size:11.1px;line-height:14px;color:#000;">2799...</div>
<div class="t" style="right:861.5px;top:808.0px;font-size:11.1px;line-height:14px;color:#000;text-align:right;">buy</div>
<div class="t" style="right:801.3px;top:808.0px;font-size:11.1px;line-height:14px;color:#000;text-align:right;">13.54</div>
<div class="t" style="right:741.5px;top:808.0px;font-size:11.1px;line-height:14px;color:#000;text-align:right;">2518.28</div>
<div class="t" style="right:681.5px;top:808.0px;font-size:11.1px;line-height:14px;color:#000;text-align:right;">2518.79</div>
<div class="t" style="right:621.2px;top:808.0px;font-size:11.1px;line-height:14px;color:#000;text-align:right;">2522.80</div>
<div class="t" style="right:531.3px;top:808.0px;font-size:11.1px;line-height:14px;color:#000;text-align:right;">2024.08.30 09:...</div>
<div class="t" style="right:471.29999999999995px;top:808.0px;font-size:11.1px;line-height:14px;color:#000;text-align:right;">2518.79</div>
<div class="t" style="right:225.4000000000001px;top:808.0px;font-size:11.1px;line-height:14px;color:#1414f0;text-align:right;">623.15</div>
<div class="t" style="right:159.29999999999995px;top:808.0px;font-size:11.1px;line-height:14px;color:#1414f0;text-align:right;">0.02 %</div>
<div class="t" style="right:24.5px;top:808.0px;font-size:11.1px;line-height:14px;color:#000;text-align:right;">232922145</div>
<div class="a" style="left:847px;top:825px;width:1048px;height:20px;background:#ebebeb"></div>
<div class="a" style="left:1237px;top:825px;width:60px;height:19px;background:#55e055"></div>
<div class="a" style="left:925px;top:825px;width:1px;height:20px;background:#d4d4d4"></div>
<div class="a" style="left:979px;top:825px;width:1px;height:20px;background:#d4d4d4"></div>
<div class="a" style="left:1021px;top:825px;width:1px;height:20px;background:#d4d4d4"></div>
<div class="a" style="left:1057px;top:825px;width:1px;height:20px;background:#d4d4d4"></div>
<div class="a" style="left:1117px;top:825px;width:1px;height:20px;background:#d4d4d4"></div>
<div class="a" style="left:1178px;top:825px;width:1px;height:20px;background:#d4d4d4"></div>
<div class="a" style="left:1237px;top:825px;width:1px;height:20px;background:#d4d4d4"></div>
<div class="a" style="left:1298px;top:825px;width:1px;height:20px;background:#d4d4d4"></div>
<div class="a" style="left:1387px;top:825px;width:1px;height:20px;background:#d4d4d4"></div>
<div class="a" style="left:1447px;top:825px;width:1px;height:20px;background:#d4d4d4"></div>
<div class="a" style="left:1507px;top:825px;width:1px;height:20px;background:#d4d4d4"></div>
<div class="a" style="left:1567px;top:825px;width:1px;height:20px;background:#d4d4d4"></div>
<div class="a" style="left:1627px;top:825px;width:1px;height:20px;background:#d4d4d4"></div>
<div class="a" style="left:1694px;top:825px;width:1px;height:20px;background:#d4d4d4"></div>
<div class="a" style="left:1759px;top:825px;width:1px;height:20px;background:#d4d4d4"></div>
<div class="a" style="left:1894px;top:825px;width:1px;height:20px;background:#d4d4d4"></div>
<div class="a" style="left:847px;top:844px;width:1048px;height:1px;background:#d4d4d4"></div>
<svg class="a" style="left:851px;top:827px;" width="12" height="17" viewBox="0 0 12 17"><rect x="1.2" y="1.5" width="9.6" height="13.5" rx="2" fill="#fff" stroke="#2f7fd0" stroke-width="1.3"/><path d="M5 5 H7.5 M5 7.8 H7.5" stroke="#2f7fd0" stroke-width="1.1"/></svg>
<div class="t" style="left:868.7px;top:828.0px;font-size:11.1px;line-height:14px;color:#000;">2024.08....</div>
<div class="t" style="right:939.7px;top:828.0px;font-size:11.1px;line-height:14px;color:#000;text-align:right;">xauusd</div>
<div class="t" style="left:985px;top:828.0px;font-size:11.1px;line-height:14px;color:#000;">2799...</div>
<div class="t" style="right:861.5px;top:828.0px;font-size:11.1px;line-height:14px;color:#000;text-align:right;">buy</div>
<div class="t" style="right:801.3px;top:828.0px;font-size:11.1px;line-height:14px;color:#000;text-align:right;">13.91</div>
<div class="t" style="right:741.5px;top:828.0px;font-size:11.1px;line-height:14px;color:#000;text-align:right;">2520.08</div>
<div class="t" style="right:681.5px;top:828.0px;font-size:11.1px;line-height:14px;color:#000;text-align:right;">2482.33</div>
<div class="t" style="right:621.2px;top:828.0px;font-size:11.1px;line-height:14px;color:#000;text-align:right;">2524.45</div>
<div class="t" style="right:531.3px;top:828.0px;font-size:11.1px;line-height:14px;color:#000;text-align:right;">2024.08.30 11:...</div>
<div class="t" style="right:471.29999999999995px;top:828.0px;font-size:11.1px;line-height:14px;color:#000;text-align:right;">2524.45</div>
<div class="t" style="right:225.4000000000001px;top:828.0px;font-size:11.1px;line-height:14px;color:#1414f0;text-align:right;">5 482.11</div>
<div class="t" style="right:159.29999999999995px;top:828.0px;font-size:11.1px;line-height:14px;color:#1414f0;text-align:right;">0.17 %</div>
<div class="t" style="right:24.5px;top:828.0px;font-size:11.1px;line-height:14px;color:#000;text-align:right;">232923954</div>
<div class="a" style="left:847px;top:845px;width:1048px;height:20px;background:#ffffff"></div>
<div class="a" style="left:925px;top:845px;width:1px;height:20px;background:#d4d4d4"></div>
<div class="a" style="left:979px;top:845px;width:1px;height:20px;background:#d4d4d4"></div>
<div class="a" style="left:1021px;top:845px;width:1px;height:20px;background:#d4d4d4"></div>
<div class="a" style="left:1057px;top:845px;width:1px;height:20px;background:#d4d4d4"></div>
<div class="a" style="left:1117px;top:845px;width:1px;height:20px;background:#d4d4d4"></div>
<div class="a" style="left:1178px;top:845px;width:1px;height:20px;background:#d4d4d4"></div>
<div class="a" style="left:1237px;top:845px;width:1px;height:20px;background:#d4d4d4"></div>
<div class="a" style="left:1298px;top:845px;width:1px;height:20px;background:#d4d4d4"></div>
<div class="a" style="left:1387px;top:845px;width:1px;height:20px;background:#d4d4d4"></div>
<div class="a" style="left:1447px;top:845px;width:1px;height:20px;background:#d4d4d4"></div>
<div class="a" style="left:1507px;top:845px;width:1px;height:20px;background:#d4d4d4"></div>
<div class="a" style="left:1567px;top:845px;width:1px;height:20px;background:#d4d4d4"></div>
<div class="a" style="left:1627px;top:845px;width:1px;height:20px;background:#d4d4d4"></div>
<div class="a" style="left:1694px;top:845px;width:1px;height:20px;background:#d4d4d4"></div>
<div class="a" style="left:1759px;top:845px;width:1px;height:20px;background:#d4d4d4"></div>
<div class="a" style="left:1894px;top:845px;width:1px;height:20px;background:#d4d4d4"></div>
<div class="a" style="left:847px;top:864px;width:1048px;height:1px;background:#d4d4d4"></div>
<svg class="a" style="left:851px;top:847px;" width="12" height="17" viewBox="0 0 12 17"><rect x="1.2" y="1.5" width="9.6" height="13.5" rx="2" fill="#fff" stroke="#e04030" stroke-width="1.3"/><path d="M5 5 H7.5 M5 7.8 H7.5" stroke="#e04030" stroke-width="1.1"/></svg>
<div class="t" style="left:868.7px;top:848.0px;font-size:11.1px;line-height:14px;color:#000;">2024.09....</div>
<div class="t" style="right:939.7px;top:848.0px;font-size:11.1px;line-height:14px;color:#000;text-align:right;">usdjpy</div>
<div class="t" style="left:985px;top:848.0px;font-size:11.1px;line-height:14px;color:#000;">2803...</div>
<div class="t" style="right:861.5px;top:848.0px;font-size:11.1px;line-height:14px;color:#000;text-align:right;">sell</div>
<div class="t" style="right:801.3px;top:848.0px;font-size:11.1px;line-height:14px;color:#000;text-align:right;">33.41</div>
<div class="t" style="right:741.5px;top:848.0px;font-size:11.1px;line-height:14px;color:#000;text-align:right;">145.883</div>
<div class="t" style="right:681.5px;top:848.0px;font-size:11.1px;line-height:14px;color:#000;text-align:right;">146.485</div>
<div class="t" style="right:621.2px;top:848.0px;font-size:11.1px;line-height:14px;color:#000;text-align:right;">144.834</div>
<div class="t" style="right:531.3px;top:848.0px;font-size:11.1px;line-height:14px;color:#000;text-align:right;">2024.09.04 02:...</div>
<div class="t" style="right:471.29999999999995px;top:848.0px;font-size:11.1px;line-height:14px;color:#000;text-align:right;">145.157</div>
<div class="t" style="right:291.4000000000001px;top:848.0px;font-size:11.1px;line-height:14px;color:#e82020;text-align:right;">-24.80</div>
<div class="t" style="right:225.4000000000001px;top:848.0px;font-size:11.1px;line-height:14px;color:#1414f0;text-align:right;">15 124.81</div>
<div class="t" style="right:159.29999999999995px;top:848.0px;font-size:11.1px;line-height:14px;color:#1414f0;text-align:right;">0.50 %</div>
<div class="t" style="right:24.5px;top:848.0px;font-size:11.1px;line-height:14px;color:#000;text-align:right;">233043615</div>
<div class="a" style="left:847px;top:865px;width:1048px;height:20px;background:#ebebeb"></div>
<div class="a" style="left:925px;top:865px;width:1px;height:20px;background:#d4d4d4"></div>
<div class="a" style="left:979px;top:865px;width:1px;height:20px;background:#d4d4d4"></div>
<div class="a" style="left:1021px;top:865px;width:1px;height:20px;background:#d4d4d4"></div>
<div class="a" style="left:1057px;top:865px;width:1px;height:20px;background:#d4d4d4"></div>
<div class="a" style="left:1117px;top:865px;width:1px;height:20px;background:#d4d4d4"></div>
<div class="a" style="left:1178px;top:865px;width:1px;height:20px;background:#d4d4d4"></div>
<div class="a" style="left:1237px;top:865px;width:1px;height:20px;background:#d4d4d4"></div>
<div class="a" style="left:1298px;top:865px;width:1px;height:20px;background:#d4d4d4"></div>
<div class="a" style="left:1387px;top:865px;width:1px;height:20px;background:#d4d4d4"></div>
<div class="a" style="left:1447px;top:865px;width:1px;height:20px;background:#d4d4d4"></div>
<div class="a" style="left:1507px;top:865px;width:1px;height:20px;background:#d4d4d4"></div>
<div class="a" style="left:1567px;top:865px;width:1px;height:20px;background:#d4d4d4"></div>
<div class="a" style="left:1627px;top:865px;width:1px;height:20px;background:#d4d4d4"></div>
<div class="a" style="left:1694px;top:865px;width:1px;height:20px;background:#d4d4d4"></div>
<div class="a" style="left:1759px;top:865px;width:1px;height:20px;background:#d4d4d4"></div>
<div class="a" style="left:1894px;top:865px;width:1px;height:20px;background:#d4d4d4"></div>
<div class="a" style="left:847px;top:884px;width:1048px;height:1px;background:#d4d4d4"></div>
<svg class="a" style="left:851px;top:867px;" width="12" height="17" viewBox="0 0 12 17"><rect x="1.2" y="1.5" width="9.6" height="13.5" rx="2" fill="#fff" stroke="#2f7fd0" stroke-width="1.3"/><path d="M5 5 H7.5 M5 7.8 H7.5" stroke="#2f7fd0" stroke-width="1.1"/></svg>
<div class="t" style="left:868.7px;top:868.0px;font-size:11.1px;line-height:14px;color:#000;">2024.09....</div>
<div class="t" style="right:939.7px;top:868.0px;font-size:11.1px;line-height:14px;color:#000;text-align:right;">usdchf</div>
<div class="t" style="left:985px;top:868.0px;font-size:11.1px;line-height:14px;color:#000;">2806...</div>
<div class="t" style="right:861.5px;top:868.0px;font-size:11.1px;line-height:14px;color:#000;text-align:right;">buy</div>
<div class="t" style="right:801.3px;top:868.0px;font-size:11.1px;line-height:14px;color:#000;text-align:right;">7.02</div>
<div class="t" style="right:741.5px;top:868.0px;font-size:11.1px;line-height:14px;color:#000;text-align:right;">0.85138</div>
<div class="t" style="right:681.5px;top:868.0px;font-size:11.1px;line-height:14px;color:#000;text-align:right;">0.80597</div>
<div class="t" style="right:621.2px;top:868.0px;font-size:11.1px;line-height:14px;color:#000;text-align:right;">0.90487</div>
<div class="t" style="right:531.3px;top:868.0px;font-size:11.1px;line-height:14px;color:#000;text-align:right;">2024.09.03 09:...</div>
<div class="t" style="right:471.29999999999995px;top:868.0px;font-size:11.1px;line-height:14px;color:#000;text-align:right;">0.85127</div>
<div class="t" style="right:225.4000000000001px;top:868.0px;font-size:11.1px;line-height:14px;color:#e82020;text-align:right;">-82.04</div>
<div class="t" style="right:159.29999999999995px;top:868.0px;font-size:11.1px;line-height:14px;color:#e82020;text-align:right;">-0.01 %</div>
<div class="t" style="right:24.5px;top:868.0px;font-size:11.1px;line-height:14px;color:#000;text-align:right;">639669551</div>
<div class="a" style="left:847px;top:885px;width:1048px;height:20px;background:#ffffff"></div>
<div class="a" style="left:1237px;top:885px;width:60px;height:19px;background:#55e055"></div>
<div class="a" style="left:925px;top:885px;width:1px;height:20px;background:#d4d4d4"></div>
<div class="a" style="left:979px;top:885px;width:1px;height:20px;background:#d4d4d4"></div>
<div class="a" style="left:1021px;top:885px;width:1px;height:20px;background:#d4d4d4"></div>
<div class="a" style="left:1057px;top:885px;width:1px;height:20px;background:#d4d4d4"></div>
<div class="a" style="left:1117px;top:885px;width:1px;height:20px;background:#d4d4d4"></div>
<div class="a" style="left:1178px;top:885px;width:1px;height:20px;background:#d4d4d4"></div>
<div class="a" style="left:1237px;top:885px;width:1px;height:20px;background:#d4d4d4"></div>
<div class="a" style="left:1298px;top:885px;width:1px;height:20px;background:#d4d4d4"></div>
<div class="a" style="left:1387px;top:885px;width:1px;height:20px;background:#d4d4d4"></div>
<div class="a" style="left:1447px;top:885px;width:1px;height:20px;background:#d4d4d4"></div>
<div class="a" style="left:1507px;top:885px;width:1px;height:20px;background:#d4d4d4"></div>
<div class="a" style="left:1567px;top:885px;width:1px;height:20px;background:#d4d4d4"></div>
<div class="a" style="left:1627px;top:885px;width:1px;height:20px;background:#d4d4d4"></div>
<div class="a" style="left:1694px;top:885px;width:1px;height:20px;background:#d4d4d4"></div>
<div class="a" style="left:1759px;top:885px;width:1px;height:20px;background:#d4d4d4"></div>
<div class="a" style="left:1894px;top:885px;width:1px;height:20px;background:#d4d4d4"></div>
<div class="a" style="left:847px;top:904px;width:1048px;height:1px;background:#d4d4d4"></div>
<svg class="a" style="left:851px;top:887px;" width="12" height="17" viewBox="0 0 12 17"><rect x="1.2" y="1.5" width="9.6" height="13.5" rx="2" fill="#fff" stroke="#e04030" stroke-width="1.3"/><path d="M5 5 H7.5 M5 7.8 H7.5" stroke="#e04030" stroke-width="1.1"/></svg>
<div class="t" style="left:868.7px;top:888.0px;font-size:11.1px;line-height:14px;color:#000;">2024.09....</div>
<div class="t" style="right:939.7px;top:888.0px;font-size:11.1px;line-height:14px;color:#000;text-align:right;">xauusd</div>
<div class="t" style="left:985px;top:888.0px;font-size:11.1px;line-height:14px;color:#000;">2810...</div>
<div class="t" style="right:861.5px;top:888.0px;font-size:11.1px;line-height:14px;color:#000;text-align:right;">sell</div>
<div class="t" style="right:801.3px;top:888.0px;font-size:11.1px;line-height:14px;color:#000;text-align:right;">2.89</div>
<div class="t" style="right:741.5px;top:888.0px;font-size:11.1px;line-height:14px;color:#000;text-align:right;">2495.04</div>
<div class="t" style="right:681.5px;top:888.0px;font-size:11.1px;line-height:14px;color:#000;text-align:right;">2529.70</div>
<div class="t" style="right:621.2px;top:888.0px;font-size:11.1px;line-height:14px;color:#000;text-align:right;">2487.78</div>
<div class="t" style="right:531.3px;top:888.0px;font-size:11.1px;line-height:14px;color:#000;text-align:right;">2024.09.04 09:...</div>
<div class="t" style="right:471.29999999999995px;top:888.0px;font-size:11.1px;line-height:14px;color:#000;text-align:right;">2487.78</div>
<div class="t" style="right:225.4000000000001px;top:888.0px;font-size:11.1px;line-height:14px;color:#1414f0;text-align:right;">1 898.84</div>
<div class="t" style="right:159.29999999999995px;top:888.0px;font-size:11.1px;line-height:14px;color:#1414f0;text-align:right;">0.29 %</div>
<div class="t" style="right:24.5px;top:888.0px;font-size:11.1px;line-height:14px;color:#000;text-align:right;">233367181</div>
<div class="a" style="left:847px;top:905px;width:1048px;height:20px;background:#ebebeb"></div>
<div class="a" style="left:1177px;top:905px;width:60px;height:19px;background:#f4a2a2"></div>
<div class="a" style="left:925px;top:905px;width:1px;height:20px;background:#d4d4d4"></div>
<div class="a" style="left:979px;top:905px;width:1px;height:20px;background:#d4d4d4"></div>
<div class="a" style="left:1021px;top:905px;width:1px;height:20px;background:#d4d4d4"></div>
<div class="a" style="left:1057px;top:905px;width:1px;height:20px;background:#d4d4d4"></div>
<div class="a" style="left:1117px;top:905px;width:1px;height:20px;background:#d4d4d4"></div>
<div class="a" style="left:1178px;top:905px;width:1px;height:20px;background:#d4d4d4"></div>
<div class="a" style="left:1237px;top:905px;width:1px;height:20px;background:#d4d4d4"></div>
<div class="a" style="left:1298px;top:905px;width:1px;height:20px;background:#d4d4d4"></div>
<div class="a" style="left:1387px;top:905px;width:1px;height:20px;background:#d4d4d4"></div>
<div class="a" style="left:1447px;top:905px;width:1px;height:20px;background:#d4d4d4"></div>
<div class="a" style="left:1507px;top:905px;width:1px;height:20px;background:#d4d4d4"></div>
<div class="a" style="left:1567px;top:905px;width:1px;height:20px;background:#d4d4d4"></div>
<div class="a" style="left:1627px;top:905px;width:1px;height:20px;background:#d4d4d4"></div>
<div class="a" style="left:1694px;top:905px;width:1px;height:20px;background:#d4d4d4"></div>
<div class="a" style="left:1759px;top:905px;width:1px;height:20px;background:#d4d4d4"></div>
<div class="a" style="left:1894px;top:905px;width:1px;height:20px;background:#d4d4d4"></div>
<div class="a" style="left:847px;top:924px;width:1048px;height:1px;background:#d4d4d4"></div>
<svg class="a" style="left:851px;top:907px;" width="12" height="17" viewBox="0 0 12 17"><rect x="1.2" y="1.5" width="9.6" height="13.5" rx="2" fill="#fff" stroke="#e04030" stroke-width="1.3"/><path d="M5 5 H7.5 M5 7.8 H7.5" stroke="#e04030" stroke-width="1.1"/></svg>
<div class="t" style="left:868.7px;top:908.0px;font-size:11.1px;line-height:14px;color:#000;">2024.09....</div>
<div class="t" style="right:939.7px;top:908.0px;font-size:11.1px;line-height:14px;color:#000;text-align:right;">xauusd</div>
<div class="t" style="left:985px;top:908.0px;font-size:11.1px;line-height:14px;color:#000;">2810...</div>
<div class="t" style="right:861.5px;top:908.0px;font-size:11.1px;line-height:14px;color:#000;text-align:right;">sell</div>
<div class="t" style="right:801.3px;top:908.0px;font-size:11.1px;line-height:14px;color:#000;text-align:right;">2.82</div>
<div class="t" style="right:741.5px;top:908.0px;font-size:11.1px;line-height:14px;color:#000;text-align:right;">2487.57</div>
<div class="t" style="right:681.5px;top:908.0px;font-size:11.1px;line-height:14px;color:#000;text-align:right;">2486.90</div>
<div class="t" style="right:621.2px;top:908.0px;font-size:11.1px;line-height:14px;color:#000;text-align:right;">2482.71</div>
<div class="t" style="right:531.3px;top:908.0px;font-size:11.1px;line-height:14px;color:#000;text-align:right;">2024.09.04 10:...</div>
<div class="t" style="right:471.29999999999995px;top:908.0px;font-size:11.1px;line-height:14px;color:#000;text-align:right;">2486.90</div>
<div class="t" style="right:225.4000000000001px;top:908.0px;font-size:11.1px;line-height:14px;color:#1414f0;text-align:right;">170.87</div>
<div class="t" style="right:159.29999999999995px;top:908.0px;font-size:11.1px;line-height:14px;color:#1414f0;text-align:right;">0.03 %</div>
<div class="t" style="right:24.5px;top:908.0px;font-size:11.1px;line-height:14px;color:#000;text-align:right;">233392116</div>
<div class="a" style="left:847px;top:925px;width:1048px;height:19px;background:#dcecfb"></div>
<div class="a" style="left:1447px;top:925px;width:1px;height:19px;background:#c8d8e8"></div>
<div class="a" style="left:1507px;top:925px;width:1px;height:19px;background:#c8d8e8"></div>
<div class="a" style="left:1567px;top:925px;width:1px;height:19px;background:#c8d8e8"></div>
<div class="a" style="left:1627px;top:925px;width:1px;height:19px;background:#c8d8e8"></div>
<div class="a" style="left:1694px;top:925px;width:1px;height:19px;background:#c8d8e8"></div>
<div class="a" style="left:1759px;top:925px;width:1px;height:19px;background:#c8d8e8"></div>
<svg class="a" style="left:851px;top:928px;" width="13" height="13" viewBox="0 0 13 13"><circle cx="6.5" cy="6.5" r="5.5" fill="none" stroke="#111" stroke-width="1.2"/><path d="M6.5 3.5 V9.5 M3.5 6.5 H9.5" stroke="#111" stroke-width="1.2"/></svg>
<div class="t" style="left:869.3px;top:927.0px;font-size:11.85px;line-height:15px;color:#000;font-weight:bold">Profit: 242 233.84  Credit: 0.00  Deposit: 100 000.00  Withdrawal: 0.00  Balance: 342 233.84</div>
<div class="t" style="right:411.29999999999995px;top:927.0px;font-size:11.85px;line-height:15px;color:#000;text-align:right;font-weight:bold">0.00</div>
<div class="t" style="right:351.5999999999999px;top:927.0px;font-size:11.85px;line-height:15px;color:#000;text-align:right;font-weight:bold">0.00</div>
<div class="t" style="right:291.4000000000001px;top:927.0px;font-size:11.85px;line-height:15px;color:#000;text-align:right;font-weight:bold">-1 314.10</div>
<div class="t" style="right:226px;top:927.0px;font-size:11.85px;line-height:15px;color:#000;text-align:right;font-weight:bold">243 547....</div>
<div class="a" style="left:1895px;top:660px;width:20px;height:285px;background:#f0f0f0"></div>
<div class="a" style="left:1903px;top:916px;width:2px;height:16px;background:#888"></div>
<div class="a" style="left:847px;top:945px;width:1068px;height:30px;background:#f0f0f0"></div>
<div class="a" style="left:846px;top:950px;width:121px;height:2px;background:#111"></div>
<div class="a" style="left:1025px;top:950px;width:890px;height:2px;background:#111"></div>
<div class="a" style="left:967px;top:950px;width:58px;height:21px;background:#fff;border:2px solid #111;border-top:none"></div>
<div class="t" style="left:860.6px;top:952.0px;font-size:11.5px;line-height:15px;color:#6b6b6b;">Trade</div>
<div class="t" style="left:908.8px;top:952.0px;font-size:11.5px;line-height:15px;color:#6b6b6b;">Exposure</div>
<div class="t" style="left:1035.4px;top:952.0px;font-size:11.5px;line-height:15px;color:#6b6b6b;">News</div>
<div class="t" style="left:1084.3px;top:952.0px;font-size:11.5px;line-height:15px;color:#6b6b6b;">Mailbox</div>
<div class="t" style="left:1159.5px;top:952.0px;font-size:11.5px;line-height:15px;color:#6b6b6b;">Calendar</div>
<div class="t" style="left:1226px;top:952.0px;font-size:11.5px;line-height:15px;color:#6b6b6b;">Company</div>
<div class="t" style="left:1298px;top:952.0px;font-size:11.5px;line-height:15px;color:#6b6b6b;">Alerts</div>
<div class="t" style="left:1348.4px;top:952.0px;font-size:11.5px;line-height:15px;color:#6b6b6b;">Articles</div>
<div class="t" style="left:1407.3px;top:952.0px;font-size:11.5px;line-height:15px;color:#6b6b6b;">Code Base</div>
<div class="t" style="left:1482.2px;top:952.0px;font-size:11.5px;line-height:15px;color:#6b6b6b;">Experts</div>
<div class="t" style="left:1540px;top:952.0px;font-size:11.5px;line-height:15px;color:#6b6b6b;">Journal</div>
<div class="t" style="left:976.8px;top:951.5px;font-size:12.2px;line-height:16px;color:#000;">History</div>
<div class="t" style="left:1128px;top:958.0px;font-size:8.5px;line-height:11px;color:#e01010;font-weight:bold">11</div>
<div class="a" style="left:899px;top:953px;width:1px;height:15px;background:#666"></div>
<div class="a" style="left:1074px;top:953px;width:1px;height:15px;background:#666"></div>
<div class="a" style="left:1149px;top:953px;width:1px;height:15px;background:#666"></div>
<div class="a" style="left:1216px;top:953px;width:1px;height:15px;background:#666"></div>
<div class="a" style="left:1288px;top:953px;width:1px;height:15px;background:#666"></div>
<div class="a" style="left:1339px;top:953px;width:1px;height:15px;background:#666"></div>
<div class="a" style="left:1398px;top:953px;width:1px;height:15px;background:#666"></div>
<div class="a" style="left:1472px;top:953px;width:1px;height:15px;background:#666"></div>
<div class="a" style="left:1530px;top:953px;width:1px;height:15px;background:#666"></div>
<svg class="a" style="left:1665px;top:954px;" width="13" height="14" viewBox="0 0 13 14"><path d="M1.5 5 H11.5 L12.5 13.5 H0.5 Z" fill="#f5c518" stroke="#d8a810" stroke-width="0.8"/><path d="M4 5.5 V3.5 Q6.5 0.5 9 3.5 V5.5" fill="none" stroke="#b08000" stroke-width="1.1"/></svg>
<div class="t" style="left:1683px;top:954.5px;font-size:11.8px;line-height:15px;color:#111;">Market</div>
<svg class="a" style="left:1731px;top:956px;" width="17" height="11" viewBox="0 0 17 11"><circle cx="8.5" cy="5.5" r="1.5" fill="#c0c0c0"/><path d="M5 2 Q3 5.5 5 9 M12 2 Q14 5.5 12 9 M2.5 0.5 Q-0.5 5.5 2.5 10.5 M14.5 0.5 Q17.5 5.5 14.5 10.5" fill="none" stroke="#c0c0c0" stroke-width="1"/></svg>
<div class="t" style="left:1751.4px;top:954.5px;font-size:11.8px;line-height:15px;color:#a8a8a8;">Signals</div>
<svg class="a" style="left:1801px;top:953px;" width="17" height="16" viewBox="0 0 17 16"><path d="M4 10 Q0 10 1.2 6.5 Q2 4 5 4.5 Q6 1 10 1.2 Q14 1.5 14 5 Q16.5 5.5 16 8 Q15.5 10 13.5 10 Z" fill="none" stroke="#2f7fd0" stroke-width="1.3"/><path d="M8.5 10 V14 M3 14 H14" stroke="#2f7fd0" stroke-width="1.2"/></svg>
<div class="t" style="left:1820.8px;top:954.5px;font-size:11.8px;line-height:15px;color:#111;">VPS</div>
<svg class="a" style="left:1854px;top:953px;" width="15" height="16" viewBox="0 0 15 16"><rect x="2.5" y="2.5" width="10" height="11" rx="1.5" fill="none" stroke="#2f7fd0" stroke-width="1.4"/><path d="M5 0.5 V2.5 M7.5 0.5 V2.5 M10 0.5 V2.5 M5 13.5 V15.5 M7.5 13.5 V15.5 M10 13.5 V15.5 M0.5 5 H2.5 M0.5 8 H2.5 M0.5 11 H2.5 M12.5 5 H14.5 M12.5 8 H14.5 M12.5 11 H14.5" stroke="#2f7fd0" stroke-width="1.1"/></svg>
<div class="t" style="left:1873.2px;top:954.5px;font-size:11.8px;line-height:15px;color:#111;">Tester</div>
<div class="a" style="left:833px;top:975px;width:1082px;height:24px;background:#f0f0f0"></div>
<div class="a" style="left:833px;top:975px;width:1082px;height:2px;background:#c4c4c4"></div>
<div class="t" style="left:834.3px;top:981.6px;font-size:11.1px;line-height:14px;color:#000;">For Help, press F1</div>
<div class="t" style="left:1229px;top:981.6px;font-size:11.1px;line-height:14px;color:#000;">Default</div>
<div class="a" style="left:1224px;top:980px;width:1px;height:18px;background:#c8c8c8"></div>
<div class="a" style="left:1351px;top:980px;width:1px;height:18px;background:#c8c8c8"></div>
<div class="a" style="left:1450px;top:980px;width:1px;height:18px;background:#c8c8c8"></div>
<div class="a" style="left:1521px;top:980px;width:1px;height:18px;background:#c8c8c8"></div>
<div class="a" style="left:1592px;top:980px;width:1px;height:18px;background:#c8c8c8"></div>
<div class="a" style="left:1659px;top:980px;width:1px;height:18px;background:#c8c8c8"></div>
<div class="a" style="left:1729px;top:980px;width:1px;height:18px;background:#c8c8c8"></div>
<div class="a" style="left:1795px;top:980px;width:1px;height:18px;background:#c8c8c8"></div>
<svg class="a" style="left:1801px;top:981px;" width="14" height="13" viewBox="0 0 14 13"><rect x="0" y="9" width="2" height="4" fill="#2a9a2a"/><rect x="3" y="7" width="2" height="6" fill="#2a9a2a"/><rect x="6" y="5" width="2" height="8" fill="#2a9a2a"/><rect x="9" y="3" width="2" height="10" fill="#2a9a2a"/><rect x="12" y="1" width="2" height="12" fill="#2a9a2a"/></svg>
<div class="t" style="left:1821.2px;top:981.6px;font-size:11.1px;line-height:14px;color:#000;">7688 / 351 Kb</div>
<div class="a" style="left:1382px;top:114px;width:560px;height:525px;background:rgba(0,0,0,0.0);box-shadow:0 6px 18px 4px rgba(0,0,0,0.22);border-radius:8px"></div>
<div class="a" style="left:1382px;top:114px;width:560px;height:525px;background:#f0f0f0;border:1px solid #b8b8b8;border-radius:7px"></div>
<div class="a" style="left:1383px;top:115px;width:540px;height:29px;background:#eef3f6;border-radius:7px 0 0 0"></div>
<div class="t" style="left:1390.4px;top:121.6px;font-size:11px;line-height:14px;color:#222;">Exp COPYLOT CLIENT for MT5 24.807</div>
<div class="a" style="left:1876px;top:128px;width:11px;height:1px;background:#333"></div>
<div class="a" style="left:1388px;top:171px;width:540px;height:431px;background:#f9f9f9;border:1px solid #dcdcdc"></div>
<div class="a" style="left:1391px;top:153px;width:51px;height:19px;background:#f0f0f0;border:1px solid #d9d9d9;border-bottom:none"></div>
<div class="t" style="left:1395.3px;top:156.1px;font-size:10.3px;line-height:13px;color:#111;letter-spacing:-0.1px">Common</div>
<div class="a" style="left:1441px;top:151px;width:46px;height:21px;background:#f9f9f9;border:1px solid #d9d9d9;border-bottom:none"></div>
<div class="t" style="left:1448.3px;top:153.7px;font-size:11.2px;line-height:15px;color:#111;">Inputs</div>
<div class="a" style="left:1400px;top:181px;width:465px;height:407px;background:#fff;border:1px solid #828790"></div>
<div class="t" style="left:1407.4px;top:188.0px;font-size:10.5px;line-height:14px;color:#111;">Variable</div>
<div class="t" style="left:1629.7px;top:188.0px;font-size:10.5px;line-height:14px;color:#111;">Value</div>
<div class="a" style="left:1623px;top:183px;width:1px;height:24px;background:#e5e5e5"></div>
<div class="a" style="left:1846px;top:182px;width:18px;height:405px;background:#f0f0f0"></div>
<div class="a" style="left:1854px;top:245px;width:2px;height:48px;background:#888"></div>
<div class="a" style="left:1401px;top:207px;width:445px;height:20px;background:#ffffff"></div>
<div class="a" style="left:1401px;top:226px;width:445px;height:1px;background:#d8d8d8"></div>
<div class="a" style="left:1623px;top:207px;width:1px;height:20px;background:#d8d8d8"></div>
<svg class="a" style="left:1405px;top:210px;" width="13" height="14" viewBox="0 0 13 14"><path d="M1 3 H12" stroke="#e04040" stroke-width="1.3"/><path d="M2 6 H11 M2 8.5 H11" stroke="#2f7fd0" stroke-width="1.3"/><path d="M1 11.5 H12" stroke="#e04040" stroke-width="1.3"/></svg>
<div class="t" style="left:1422.4px;top:210.0px;font-size:11px;line-height:14px;color:#111;">TypeFilling --&gt; Filling policy for the vol...</div>
<div class="t" style="left:1628px;top:210.0px;font-size:11px;line-height:14px;color:#111;">Auto</div>
<div class="a" style="left:1401px;top:227px;width:445px;height:20px;background:#e9e9e9"></div>
<div class="a" style="left:1401px;top:246px;width:445px;height:1px;background:#d8d8d8"></div>
<div class="a" style="left:1623px;top:227px;width:1px;height:20px;background:#d8d8d8"></div>
<div class="t" style="left:1405px;top:230.5px;font-size:10px;line-height:13px;color:#2f7fd0;">01</div>
<div class="t" style="left:1422.4px;top:230.0px;font-size:11px;line-height:14px;color:#111;">Slippage --&gt; Maximum price slippage(D...</div>
<div class="t" style="left:1628px;top:230.0px;font-size:11px;line-height:14px;color:#111;">0</div>
<div class="a" style="left:1401px;top:247px;width:445px;height:20px;background:#ffffff"></div>
<div class="a" style="left:1401px;top:266px;width:445px;height:1px;background:#d8d8d8"></div>
<div class="a" style="left:1623px;top:247px;width:1px;height:20px;background:#d8d8d8"></div>
<svg class="a" style="left:1404px;top:249px;" width="15" height="16" viewBox="0 0 15 16"><path d="M3 15 V2 M1 4.5 L3 1.5 L5 4.5 M3 9 Q6 6 12 6 M10 3.5 L13 6 L10 8.5" fill="none" stroke="#20a020" stroke-width="1.4"/></svg>
<div class="t" style="left:1422.4px;top:250.0px;font-size:11px;line-height:14px;color:#111;">SessionTradeCheck --&gt; Checking tradi...</div>
<div class="t" style="left:1628px;top:250.0px;font-size:11px;line-height:14px;color:#111;">false</div>
<div class="a" style="left:1401px;top:267px;width:445px;height:20px;background:#e9e9e9"></div>
<div class="a" style="left:1401px;top:286px;width:445px;height:1px;background:#d8d8d8"></div>
<div class="a" style="left:1623px;top:267px;width:1px;height:20px;background:#d8d8d8"></div>
<div class="t" style="left:1405px;top:270.0px;font-size:11px;line-height:14px;color:#c89020;">ab</div>
<div class="t" style="left:1422.4px;top:270.0px;font-size:11px;line-height:14px;color:#111;letter-spacing:1.04px">##########################...</div>
<div class="t" style="left:1628px;top:270.0px;font-size:11px;line-height:14px;color:#111;letter-spacing:1.0px">##########################...</div>
<div class="a" style="left:1401px;top:287px;width:445px;height:20px;background:#ffffff"></div>
<div class="a" style="left:1401px;top:306px;width:445px;height:1px;background:#d8d8d8"></div>
<div class="a" style="left:1623px;top:287px;width:1px;height:20px;background:#d8d8d8"></div>
<div class="t" style="left:1405px;top:290.0px;font-size:11px;line-height:14px;color:#c89020;">ab</div>
<div class="t" style="left:1422.4px;top:290.0px;font-size:11px;line-height:14px;color:#111;letter-spacing:0.72px">------------------------------------------...</div>
<div class="t" style="left:1628px;top:290.0px;font-size:11px;line-height:14px;color:#111;"><span style="letter-spacing:0.95px">=========</span>  Clients Lots<span style="letter-spacing:0.6px">---------------</span></div>
<div class="a" style="left:1401px;top:307px;width:445px;height:20px;background:#e9e9e9"></div>
<div class="a" style="left:1401px;top:326px;width:445px;height:1px;background:#d8d8d8"></div>
<div class="a" style="left:1623px;top:307px;width:1px;height:20px;background:#d8d8d8"></div>
<div class="t" style="left:1404px;top:307.0px;font-size:15px;line-height:20px;color:#2f7fd0;">½</div>
<div class="t" style="left:1422.4px;top:310.0px;font-size:11px;line-height:14px;color:#111;">KoefLot --&gt; Ratio of the lot, copied fr...</div>
<div class="t" style="left:1628px;top:310.0px;font-size:11px;line-height:14px;color:#111;">0.0</div>
<div class="a" style="left:1401px;top:327px;width:445px;height:20px;background:#ffffff"></div>
<div class="a" style="left:1401px;top:346px;width:445px;height:1px;background:#d8d8d8"></div>
<div class="a" style="left:1623px;top:327px;width:1px;height:20px;background:#d8d8d8"></div>
<div class="t" style="left:1404px;top:327.0px;font-size:15px;line-height:20px;color:#2f7fd0;">½</div>
<div class="t" style="left:1422.4px;top:330.0px;font-size:11px;line-height:14px;color:#111;">AdditionalLot --&gt; Additional lot for eac...</div>
<div class="t" style="left:1628px;top:330.0px;font-size:11px;line-height:14px;color:#111;">0.0</div>
<div class="a" style="left:1401px;top:347px;width:445px;height:20px;background:#e9e9e9"></div>
<div class="a" style="left:1401px;top:366px;width:445px;height:1px;background:#d8d8d8"></div>
<div class="a" style="left:1623px;top:347px;width:1px;height:20px;background:#d8d8d8"></div>
<div class="t" style="left:1405px;top:350.0px;font-size:11px;line-height:14px;color:#c89020;">ab</div>
<div class="t" style="left:1422.4px;top:350.0px;font-size:11px;line-height:14px;color:#111;letter-spacing:0.72px">------------------------------------------...</div>
<div class="t" style="left:1628px;top:350.0px;font-size:11px;line-height:14px;color:#111;"><span style="letter-spacing:0.95px">=========</span>  Fixed Lots  <span style="letter-spacing:0.6px">=========</span></div>
<div class="a" style="left:1401px;top:367px;width:445px;height:20px;background:#ffffff"></div>
<div class="a" style="left:1401px;top:386px;width:445px;height:1px;background:#d8d8d8"></div>
<div class="a" style="left:1623px;top:367px;width:1px;height:20px;background:#d8d8d8"></div>
<div class="t" style="left:1404px;top:367.0px;font-size:15px;line-height:20px;color:#2f7fd0;">½</div>
<div class="t" style="left:1422.4px;top:370.0px;font-size:11px;line-height:14px;color:#111;">Lot --&gt; Manual Fix lot for all positions</div>
<div class="t" style="left:1628px;top:370.0px;font-size:11px;line-height:14px;color:#111;">0.0</div>
<div class="a" style="left:1401px;top:387px;width:445px;height:20px;background:#e9e9e9"></div>
<div class="a" style="left:1401px;top:406px;width:445px;height:1px;background:#d8d8d8"></div>
<div class="a" style="left:1623px;top:387px;width:1px;height:20px;background:#d8d8d8"></div>
<div class="t" style="left:1405px;top:390.0px;font-size:11px;line-height:14px;color:#c89020;">ab</div>
<div class="t" style="left:1422.4px;top:390.0px;font-size:11px;line-height:14px;color:#111;letter-spacing:0.72px">------------------------------------------...</div>
<div class="t" style="left:1628px;top:390.0px;font-size:11px;line-height:14px;color:#111;"><span style="letter-spacing:0.95px">=========</span>  Dynamic Clients Lots  <span style="letter-spacing:0.6px">==...</span></div>
<div class="a" style="left:1401px;top:407px;width:445px;height:20px;background:#ffffff"></div>
<div class="a" style="left:1401px;top:426px;width:445px;height:1px;background:#d8d8d8"></div>
<div class="a" style="left:1623px;top:407px;width:1px;height:20px;background:#d8d8d8"></div>
<svg class="a" style="left:1405px;top:410px;" width="13" height="14" viewBox="0 0 13 14"><path d="M1 3 H12" stroke="#e04040" stroke-width="1.3"/><path d="M2 6 H11 M2 8.5 H11" stroke="#2f7fd0" stroke-width="1.3"/><path d="M1 11.5 H12" stroke="#e04040" stroke-width="1.3"/></svg>
<div class="t" style="left:1422.4px;top:410.0px;font-size:11px;line-height:14px;color:#111;">RiskLotTypetype --&gt; Type of dynamic ...</div>
<div class="t" style="left:1628px;top:410.0px;font-size:11px;line-height:14px;color:#111;">Risk from FreeMargin</div>
<div class="a" style="left:1401px;top:427px;width:445px;height:20px;background:#e9e9e9"></div>
<div class="a" style="left:1401px;top:446px;width:445px;height:1px;background:#d8d8d8"></div>
<div class="a" style="left:1623px;top:427px;width:1px;height:20px;background:#d8d8d8"></div>
<div class="t" style="left:1404px;top:427.0px;font-size:15px;line-height:20px;color:#2f7fd0;">½</div>
<div class="t" style="left:1422.4px;top:430.0px;font-size:11px;line-height:14px;color:#111;">RiskLot --&gt; Percent of dynamic lot</div>
<div class="t" style="left:1628px;top:430.0px;font-size:11px;line-height:14px;color:#111;">0.0</div>
<div class="a" style="left:1401px;top:447px;width:445px;height:20px;background:#ffffff"></div>
<div class="a" style="left:1401px;top:466px;width:445px;height:1px;background:#d8d8d8"></div>
<div class="a" style="left:1623px;top:447px;width:1px;height:20px;background:#d8d8d8"></div>
<div class="t" style="left:1404px;top:447.0px;font-size:15px;line-height:20px;color:#2f7fd0;">½</div>
<div class="t" style="left:1422.4px;top:450.0px;font-size:11px;line-height:14px;color:#111;">RiskRate --&gt; Rate of your currency ag...</div>
<div class="t" style="left:1628px;top:450.0px;font-size:11px;line-height:14px;color:#111;">0.0</div>
<div class="a" style="left:1401px;top:467px;width:445px;height:20px;background:#e9e9e9"></div>
<div class="a" style="left:1401px;top:486px;width:445px;height:1px;background:#d8d8d8"></div>
<div class="a" style="left:1623px;top:467px;width:1px;height:20px;background:#d8d8d8"></div>
<div class="t" style="left:1405px;top:470.0px;font-size:11px;line-height:14px;color:#c89020;">ab</div>
<div class="t" style="left:1422.4px;top:470.0px;font-size:11px;line-height:14px;color:#111;letter-spacing:0.72px">------------------------------------------...</div>
<div class="t" style="left:1628px;top:470.0px;font-size:11px;line-height:14px;color:#111;"><span style="letter-spacing:0.95px">=========</span>  Risk from Master Lots  <span style="letter-spacing:0.6px">=...</span></div>
<div class="a" style="left:1401px;top:487px;width:445px;height:20px;background:#0078d7"></div>
<svg class="a" style="left:1404px;top:489px;" width="15" height="16" viewBox="0 0 15 16"><path d="M3 15 V2 M1 4.5 L3 1.5 L5 4.5 M3 9 Q6 6 12 6 M10 3.5 L13 6 L10 8.5" fill="none" stroke="#20a020" stroke-width="1.4"/></svg>
<div class="t" style="left:1422.4px;top:490.0px;font-size:11px;line-height:14px;color:#fff;">LotRiskFromMaster --&gt; use master acc...</div>
<div class="t" style="left:1628px;top:490.0px;font-size:11px;line-height:14px;color:#fff;">true</div>
<div class="a" style="left:1401px;top:507px;width:445px;height:20px;background:#e9e9e9"></div>
<div class="a" style="left:1401px;top:526px;width:445px;height:1px;background:#d8d8d8"></div>
<div class="a" style="left:1623px;top:507px;width:1px;height:20px;background:#d8d8d8"></div>
<div class="t" style="left:1404px;top:507.0px;font-size:15px;line-height:20px;color:#2f7fd0;">½</div>
<div class="t" style="left:1422.4px;top:510.0px;font-size:11px;line-height:14px;color:#111;">LotExp --&gt; Coefficient of lot from mas...</div>
<div class="t" style="left:1628px;top:510.0px;font-size:11px;line-height:14px;color:#111;">0.5</div>
<div class="a" style="left:1401px;top:527px;width:445px;height:20px;background:#ffffff"></div>
<div class="a" style="left:1401px;top:546px;width:445px;height:1px;background:#d8d8d8"></div>
<div class="a" style="left:1623px;top:527px;width:1px;height:20px;background:#d8d8d8"></div>
<div class="t" style="left:1405px;top:530.0px;font-size:11px;line-height:14px;color:#c89020;">ab</div>
<div class="t" style="left:1422.4px;top:530.0px;font-size:11px;line-height:14px;color:#111;letter-spacing:0.72px">------------------------------------------...</div>
<div class="t" style="left:1628px;top:530.0px;font-size:11px;line-height:14px;color:#111;"><span style="letter-spacing:0.95px">=========</span>  Lot rounding  <span style="letter-spacing:0.6px">=======...</span></div>
<div class="a" style="left:1401px;top:547px;width:445px;height:20px;background:#e9e9e9"></div>
<div class="a" style="left:1401px;top:566px;width:445px;height:1px;background:#d8d8d8"></div>
<div class="a" style="left:1623px;top:547px;width:1px;height:20px;background:#d8d8d8"></div>
<div class="t" style="left:1404px;top:547.0px;font-size:15px;line-height:20px;color:#2f7fd0;">½</div>
<div class="t" style="left:1422.4px;top:550.0px;font-size:11px;line-height:14px;color:#111;">MinLott --&gt;Minimum lot that will be set ...</div>
<div class="t" style="left:1628px;top:550.0px;font-size:11px;line-height:14px;color:#111;">0.0</div>
<div class="a" style="left:1401px;top:567px;width:445px;height:20px;background:#ffffff"></div>
<div class="a" style="left:1401px;top:586px;width:445px;height:1px;background:#d8d8d8"></div>
<div class="a" style="left:1623px;top:567px;width:1px;height:20px;background:#d8d8d8"></div>
<div class="t" style="left:1404px;top:567.0px;font-size:15px;line-height:20px;color:#2f7fd0;">½</div>
<div class="t" style="left:1422.4px;top:570.0px;font-size:11px;line-height:14px;color:#111;">MaxLott --&gt;Maximum lot that will be s...</div>
<div class="t" style="left:1628px;top:570.0px;font-size:11px;line-height:14px;color:#111;">0.0</div>
<svg class="a" style="left:1676px;top:474px;" width="155" height="38" viewBox="0 0 155 38"><defs><filter id="sh" x="-10%" y="-20%" width="130%" height="160%"><feDropShadow dx="2" dy="3" stdDeviation="2" flood-color="#000" flood-opacity="0.35"/></filter></defs><path d="M4 19.3 L33 4.9 L32.5 15.3 L142 15.3 Q148.5 20.5 142 25.7 L32.5 25.7 L33 33.7 Z" fill="#f63c44" filter="url(#sh)"/></svg>
<div class="a" style="left:1874px;top:536px;width:45px;height:19px;background:#fdfdfd;border:1px solid #cfcfcf;border-radius:3px"></div>
<div class="a" style="left:1874px;top:567px;width:45px;height:19px;background:#fdfdfd;border:1px solid #cfcfcf;border-radius:3px"></div>
<div class="t" style="left:1910px;top:538.5px;font-size:11px;line-height:14px;color:#111;">L</div>
<div class="t" style="left:1909px;top:569.5px;font-size:11px;line-height:14px;color:#111;">S</div>
<div class="a" style="left:1751px;top:611px;width:73px;height:21px;background:#fdfdfd;border:1px solid #0067c0;box-shadow:0 1px 0 #0067c0;border-radius:4px"></div>
<div class="t" style="left:1387px;width:800px;top:614.5px;font-size:10.8px;line-height:14px;color:#111;text-align:center;letter-spacing:-0.6px">OK</div>
<div class="a" style="left:1831px;top:611px;width:72px;height:21px;background:#fdfdfd;border:1px solid #d0d0d0;border-radius:4px"></div>
<div class="t" style="left:1467px;width:800px;top:614.5px;font-size:11.1px;line-height:14px;color:#111;text-align:center;">Скасувати</div>
<div class="a" style="left:1911px;top:611px;width:10px;height:21px;background:#fdfdfd;border:1px solid #d0d0d0;border-radius:4px"></div>
<svg class="a" style="left:818px;top:712px;" width="108" height="72" viewBox="0 0 108 72"><defs><filter id="sh2" x="-10%" y="-10%" width="130%" height="130%"><feDropShadow dx="1.5" dy="2" stdDeviation="1.5" flood-color="#000" flood-opacity="0.3"/></filter></defs><g filter="url(#sh2)"><path d="M3 17 H60 V3.3 L101.5 24 L60 44.7 V30.8 H3 Z" fill="#e040f0"/><path d="M5 41 H60 V24.1 L101.5 45.7 L60 67.3 V54.7 H5 Z" fill="#e040f0"/></g></svg></body></html>
